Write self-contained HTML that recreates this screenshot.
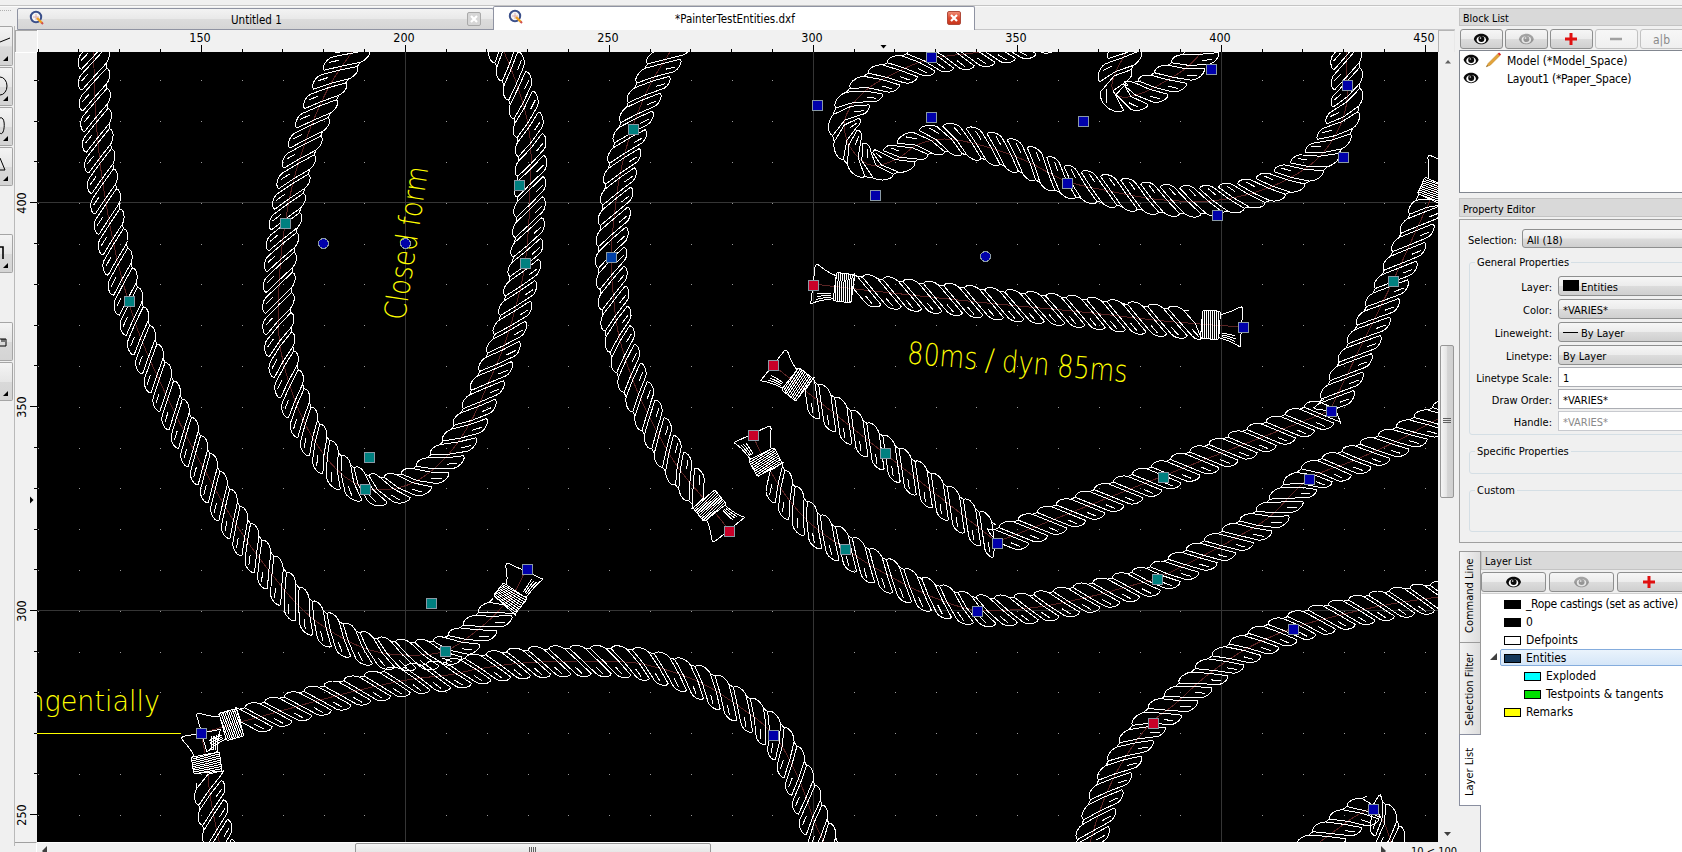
<!DOCTYPE html>
<html><head><meta charset="utf-8"><title>QCAD</title>
<style>
html,body{margin:0;padding:0}
body{width:1682px;height:852px;background:#f0f0f0;overflow:hidden;position:relative;font-family:"DejaVu Sans Condensed","DejaVu Sans","Liberation Sans",sans-serif;font-size:11px;color:#000;line-height:1}
.a{position:absolute;box-sizing:border-box;white-space:nowrap}
.cv{position:absolute;left:37px;top:52px}
.tb{background:linear-gradient(#f4f4f4,#e6e6e6 50%,#d9d9d9 52%,#d4d4d4);border:1px solid #a5a5a5;border-left:none;border-radius:0 2px 2px 0}
.hdr{background:#d9d9d9;border:1px solid #c3c3c3;font-size:10.7px;padding:5px 0 0 3px}
.btn{border:1px solid #8e8f8f;border-radius:3px;background:linear-gradient(#f6f6f6,#ececec 48%,#dcdcdc 52%,#cfcfcf);height:20px;top:29px;width:43px}
.btn.dis{border-color:#c2c2c2;background:linear-gradient(#f7f7f7,#efefef)}
.lst{background:#fff;border:1px solid #828790}
.l12{font-size:12px}
.lab{font-size:11px;text-align:right;width:90px;left:1462px}
.cmb{left:1558px;width:130px;height:20px;border:1px solid #8e8f8f;border-radius:3px;background:linear-gradient(#f6f6f6,#ececec 48%,#dcdcdc 52%,#cfcfcf);font-size:11px;padding:5px 0 0 4px}
.edt{left:1558px;width:130px;height:20px;border:1px solid #abadb3;background:#fff;font-size:11px;padding:5px 0 0 4px}
.grp{border:1px solid #d5dfe5;border-radius:3px;left:1469px;width:220px}
.gt{font-size:11px;background:#f0f0f0;padding:0 2px}
.sw{width:17px;height:9px;border:1px solid #000}
.vt{font-size:11px;transform-origin:0 0;transform:rotate(-90deg)}
</style></head><body>
<!-- top separator -->
<div class="a" style="left:0;top:5px;width:1682px;height:1px;background:#c4c4c4"></div>
<div class="a" style="left:0;top:6px;width:1682px;height:1px;background:#fafafa"></div>

<!-- left toolbar fragments -->
<div class="a" style="left:0;top:10px;width:11px;height:2px;border-top:1px dotted #b0b0b0"></div>
<div class="a tb" style="left:0;top:26px;width:13px;height:40px"></div>
<div class="a tb" style="left:0;top:67px;width:13px;height:39px"></div>
<div class="a tb" style="left:0;top:107px;width:13px;height:39px"></div>
<div class="a tb" style="left:0;top:147px;width:13px;height:39px"></div>
<div class="a tb" style="left:0;top:234px;width:13px;height:39px"></div>
<div class="a tb" style="left:0;top:322px;width:13px;height:39px"></div>
<div class="a tb" style="left:0;top:362px;width:13px;height:39px"></div>
<svg class="a" style="left:0;top:20px" width="14" height="400" viewBox="0 20 14 400">
<g fill="none" stroke="#000" stroke-width="1">
<path d="M0 42 L10 38"/><path d="M0 77 A7 9 0 0 1 0 95"/><path d="M0 118 C5 116 5 128 3 132 C2 134 1 134 0 133"/><path d="M0 158 L5 170 L0 170"/>
<path d="M0 247 h3 v12" stroke-width="1.6"/><path d="M0 339 h6 v7 h-6 M2 339v3 M4 339v3"/>
</g>
<g fill="#000"><path d="M8 61 v-5 l-5 5z"/><path d="M8 101 v-5 l-5 5z"/><path d="M8 141 v-5 l-5 5z"/><path d="M8 181 v-5 l-5 5z"/><path d="M8 268 v-5 l-5 5z"/><path d="M8 396 v-5 l-5 5z"/></g>
</svg>
<div class="a" style="left:14px;top:26px;width:1px;height:820px;background:#b9b9b9"></div>

<!-- tab bar -->
<div class="a" style="left:975px;top:29px;width:480px;height:1px;background:#c6c6c8"></div>
<div class="a" style="left:17px;top:8px;width:477px;height:22px;border:1px solid #8f93a2;border-radius:2px 2px 0 0;background:linear-gradient(#f3f3f3,#e9e9e9 48%,#dcdcdc 52%,#d5d5d5)"></div>
<div class="a" style="left:493px;top:6px;width:482px;height:24px;border:1px solid #8f93a2;border-bottom:none;border-radius:2px 2px 0 0;background:#fff"></div>
<div class="a" style="left:231px;top:15px;font-size:11.5px">Untitled 1</div>
<div class="a" style="left:675px;top:14px;font-size:11.5px">*PainterTestEntities.dxf</div>
<div class="a" style="left:467px;top:12px;width:14px;height:14px;border:1px solid #a9a9a9;border-radius:2px;background:#d6d6d6"></div>
<svg class="a" style="left:467px;top:12px" width="14" height="14"><path d="M4 4l6 6M10 4l-6 6" stroke="#fff" stroke-width="2.2"/></svg>
<div class="a" style="left:947px;top:11px;width:14px;height:14px;border:1px solid #b04a3a;border-radius:2px;background:linear-gradient(#f08a72,#dc4a30 50%,#c8351c)"></div>
<svg class="a" style="left:947px;top:11px" width="14" height="14"><path d="M4 4l6 6M10 4l-6 6" stroke="#fff" stroke-width="2.2"/></svg>
<svg class="a" style="left:29px;top:10px" width="16" height="16" viewBox="0 0 16 16"><circle cx="7" cy="7" r="5.2" fill="#f4f4f4" stroke="#3a4f8a" stroke-width="2"/><path d="M4 7h6M7 4v6" stroke="#d9a0a0" stroke-width="0.8"/><path d="M8 8l5 5" stroke="#f0a020" stroke-width="2.4"/><path d="M12.5 12.5l1.5 1.5" stroke="#d05050" stroke-width="2"/></svg>
<svg class="a" style="left:508px;top:9px" width="16" height="16" viewBox="0 0 16 16"><circle cx="7" cy="7" r="5.2" fill="#f4f4f4" stroke="#3a4f8a" stroke-width="2"/><path d="M4 7h6M7 4v6" stroke="#d9a0a0" stroke-width="0.8"/><path d="M8 8l5 5" stroke="#f0a020" stroke-width="2.4"/><path d="M12.5 12.5l1.5 1.5" stroke="#d05050" stroke-width="2"/></svg>

<!-- rulers -->
<div class="a" style="left:15px;top:30px;width:22px;height:22px;background:#f0f0f0;border-left:1px solid #a8a8a8;border-top:1px solid #a8a8a8"></div><div class="a" style="left:37px;top:30px;width:1401px;height:22px;background:#f1f1f1;border-left:1px solid #fff"></div><div class="a" style="left:1438px;top:30px;width:17px;height:22px;border:1px solid #b4b4b4;border-bottom:none;border-right-color:#e8e8e8;background:#f0f0f0"></div><div class="a" style="left:15px;top:52px;width:22px;height:790px;background:#f1f1f1;border-top:1px solid #fff"></div><svg class="a" style="left:0;top:0" width="1460" height="852" shape-rendering="crispEdges"><g fill="#000"><rect x="38" y="49" width="1" height="3"/><rect x="78" y="49" width="1" height="3"/><rect x="119" y="49" width="1" height="3"/><rect x="160" y="49" width="1" height="3"/><rect x="201" y="45" width="1" height="7"/><rect x="242" y="49" width="1" height="3"/><rect x="282" y="49" width="1" height="3"/><rect x="323" y="49" width="1" height="3"/><rect x="364" y="49" width="1" height="3"/><rect x="405" y="45" width="1" height="7"/><rect x="446" y="49" width="1" height="3"/><rect x="486" y="49" width="1" height="3"/><rect x="527" y="49" width="1" height="3"/><rect x="568" y="49" width="1" height="3"/><rect x="609" y="45" width="1" height="7"/><rect x="650" y="49" width="1" height="3"/><rect x="690" y="49" width="1" height="3"/><rect x="731" y="49" width="1" height="3"/><rect x="772" y="49" width="1" height="3"/><rect x="813" y="45" width="1" height="7"/><rect x="854" y="49" width="1" height="3"/><rect x="894" y="49" width="1" height="3"/><rect x="935" y="49" width="1" height="3"/><rect x="976" y="49" width="1" height="3"/><rect x="1017" y="45" width="1" height="7"/><rect x="1058" y="49" width="1" height="3"/><rect x="1098" y="49" width="1" height="3"/><rect x="1139" y="49" width="1" height="3"/><rect x="1180" y="49" width="1" height="3"/><rect x="1221" y="45" width="1" height="7"/><rect x="1262" y="49" width="1" height="3"/><rect x="1302" y="49" width="1" height="3"/><rect x="1343" y="49" width="1" height="3"/><rect x="1384" y="49" width="1" height="3"/><rect x="1425" y="45" width="1" height="7"/><rect x="34" y="80" width="3" height="1"/><rect x="34" y="121" width="3" height="1"/><rect x="34" y="161" width="3" height="1"/><rect x="30" y="202" width="7" height="1"/><rect x="34" y="243" width="3" height="1"/><rect x="34" y="284" width="3" height="1"/><rect x="34" y="325" width="3" height="1"/><rect x="34" y="365" width="3" height="1"/><rect x="30" y="406" width="7" height="1"/><rect x="34" y="447" width="3" height="1"/><rect x="34" y="488" width="3" height="1"/><rect x="34" y="529" width="3" height="1"/><rect x="34" y="569" width="3" height="1"/><rect x="30" y="610" width="7" height="1"/><rect x="34" y="651" width="3" height="1"/><rect x="34" y="692" width="3" height="1"/><rect x="34" y="733" width="3" height="1"/><rect x="34" y="773" width="3" height="1"/><rect x="30" y="814" width="7" height="1"/><path d="M880.5 45h6l-3 3.500z" shape-rendering="auto"/><path d="M30 496.500v7l3.500-3.500z" shape-rendering="auto"/></g></svg><div class="a" style="left:180px;top:32px;width:40px;text-align:center;font-size:12.5px">150</div><div class="a" style="left:384px;top:32px;width:40px;text-align:center;font-size:12.5px">200</div><div class="a" style="left:588px;top:32px;width:40px;text-align:center;font-size:12.5px">250</div><div class="a" style="left:792px;top:32px;width:40px;text-align:center;font-size:12.5px">300</div><div class="a" style="left:996px;top:32px;width:40px;text-align:center;font-size:12.5px">350</div><div class="a" style="left:1200px;top:32px;width:40px;text-align:center;font-size:12.5px">400</div><div class="a" style="left:1404px;top:32px;width:40px;text-align:center;font-size:12.5px">450</div><div class="a" style="left:16px;top:223px;width:40px;text-align:center;font-size:12.5px;transform-origin:0 0;transform:rotate(-90deg)">400</div><div class="a" style="left:16px;top:427px;width:40px;text-align:center;font-size:12.5px;transform-origin:0 0;transform:rotate(-90deg)">350</div><div class="a" style="left:16px;top:631px;width:40px;text-align:center;font-size:12.5px;transform-origin:0 0;transform:rotate(-90deg)">300</div><div class="a" style="left:16px;top:835px;width:40px;text-align:center;font-size:12.5px;transform-origin:0 0;transform:rotate(-90deg)">250</div>

<svg class="cv" width="1401" height="790" viewBox="37 52 1401 790" shape-rendering="crispEdges"><rect x="0" y="0" width="1700" height="900" fill="#000"/><path d="M38 80h1M38 121h1M38 162h1M38 203h1M38 244h1M38 284h1M38 325h1M38 366h1M38 407h1M38 448h1M38 488h1M38 529h1M38 570h1M38 611h1M38 652h1M38 692h1M38 733h1M38 774h1M38 815h1M79 80h1M79 121h1M79 162h1M79 203h1M79 244h1M79 284h1M79 325h1M79 366h1M79 407h1M79 448h1M79 488h1M79 529h1M79 570h1M79 611h1M79 652h1M79 692h1M79 733h1M79 774h1M79 815h1M120 80h1M120 121h1M120 162h1M120 203h1M120 244h1M120 284h1M120 325h1M120 366h1M120 407h1M120 448h1M120 488h1M120 529h1M120 570h1M120 611h1M120 652h1M120 692h1M120 733h1M120 774h1M120 815h1M160 80h1M160 121h1M160 162h1M160 203h1M160 244h1M160 284h1M160 325h1M160 366h1M160 407h1M160 448h1M160 488h1M160 529h1M160 570h1M160 611h1M160 652h1M160 692h1M160 733h1M160 774h1M160 815h1M201 80h1M201 121h1M201 162h1M201 203h1M201 244h1M201 284h1M201 325h1M201 366h1M201 407h1M201 448h1M201 488h1M201 529h1M201 570h1M201 611h1M201 652h1M201 692h1M201 733h1M201 774h1M201 815h1M242 80h1M242 121h1M242 162h1M242 203h1M242 244h1M242 284h1M242 325h1M242 366h1M242 407h1M242 448h1M242 488h1M242 529h1M242 570h1M242 611h1M242 652h1M242 692h1M242 733h1M242 774h1M242 815h1M283 80h1M283 121h1M283 162h1M283 203h1M283 244h1M283 284h1M283 325h1M283 366h1M283 407h1M283 448h1M283 488h1M283 529h1M283 570h1M283 611h1M283 652h1M283 692h1M283 733h1M283 774h1M283 815h1M324 80h1M324 121h1M324 162h1M324 203h1M324 244h1M324 284h1M324 325h1M324 366h1M324 407h1M324 448h1M324 488h1M324 529h1M324 570h1M324 611h1M324 652h1M324 692h1M324 733h1M324 774h1M324 815h1M364 80h1M364 121h1M364 162h1M364 203h1M364 244h1M364 284h1M364 325h1M364 366h1M364 407h1M364 448h1M364 488h1M364 529h1M364 570h1M364 611h1M364 652h1M364 692h1M364 733h1M364 774h1M364 815h1M405 80h1M405 121h1M405 162h1M405 203h1M405 244h1M405 284h1M405 325h1M405 366h1M405 407h1M405 448h1M405 488h1M405 529h1M405 570h1M405 611h1M405 652h1M405 692h1M405 733h1M405 774h1M405 815h1M446 80h1M446 121h1M446 162h1M446 203h1M446 244h1M446 284h1M446 325h1M446 366h1M446 407h1M446 448h1M446 488h1M446 529h1M446 570h1M446 611h1M446 652h1M446 692h1M446 733h1M446 774h1M446 815h1M487 80h1M487 121h1M487 162h1M487 203h1M487 244h1M487 284h1M487 325h1M487 366h1M487 407h1M487 448h1M487 488h1M487 529h1M487 570h1M487 611h1M487 652h1M487 692h1M487 733h1M487 774h1M487 815h1M528 80h1M528 121h1M528 162h1M528 203h1M528 244h1M528 284h1M528 325h1M528 366h1M528 407h1M528 448h1M528 488h1M528 529h1M528 570h1M528 611h1M528 652h1M528 692h1M528 733h1M528 774h1M528 815h1M568 80h1M568 121h1M568 162h1M568 203h1M568 244h1M568 284h1M568 325h1M568 366h1M568 407h1M568 448h1M568 488h1M568 529h1M568 570h1M568 611h1M568 652h1M568 692h1M568 733h1M568 774h1M568 815h1M609 80h1M609 121h1M609 162h1M609 203h1M609 244h1M609 284h1M609 325h1M609 366h1M609 407h1M609 448h1M609 488h1M609 529h1M609 570h1M609 611h1M609 652h1M609 692h1M609 733h1M609 774h1M609 815h1M650 80h1M650 121h1M650 162h1M650 203h1M650 244h1M650 284h1M650 325h1M650 366h1M650 407h1M650 448h1M650 488h1M650 529h1M650 570h1M650 611h1M650 652h1M650 692h1M650 733h1M650 774h1M650 815h1M691 80h1M691 121h1M691 162h1M691 203h1M691 244h1M691 284h1M691 325h1M691 366h1M691 407h1M691 448h1M691 488h1M691 529h1M691 570h1M691 611h1M691 652h1M691 692h1M691 733h1M691 774h1M691 815h1M732 80h1M732 121h1M732 162h1M732 203h1M732 244h1M732 284h1M732 325h1M732 366h1M732 407h1M732 448h1M732 488h1M732 529h1M732 570h1M732 611h1M732 652h1M732 692h1M732 733h1M732 774h1M732 815h1M772 80h1M772 121h1M772 162h1M772 203h1M772 244h1M772 284h1M772 325h1M772 366h1M772 407h1M772 448h1M772 488h1M772 529h1M772 570h1M772 611h1M772 652h1M772 692h1M772 733h1M772 774h1M772 815h1M813 80h1M813 121h1M813 162h1M813 203h1M813 244h1M813 284h1M813 325h1M813 366h1M813 407h1M813 448h1M813 488h1M813 529h1M813 570h1M813 611h1M813 652h1M813 692h1M813 733h1M813 774h1M813 815h1M854 80h1M854 121h1M854 162h1M854 203h1M854 244h1M854 284h1M854 325h1M854 366h1M854 407h1M854 448h1M854 488h1M854 529h1M854 570h1M854 611h1M854 652h1M854 692h1M854 733h1M854 774h1M854 815h1M895 80h1M895 121h1M895 162h1M895 203h1M895 244h1M895 284h1M895 325h1M895 366h1M895 407h1M895 448h1M895 488h1M895 529h1M895 570h1M895 611h1M895 652h1M895 692h1M895 733h1M895 774h1M895 815h1M936 80h1M936 121h1M936 162h1M936 203h1M936 244h1M936 284h1M936 325h1M936 366h1M936 407h1M936 448h1M936 488h1M936 529h1M936 570h1M936 611h1M936 652h1M936 692h1M936 733h1M936 774h1M936 815h1M976 80h1M976 121h1M976 162h1M976 203h1M976 244h1M976 284h1M976 325h1M976 366h1M976 407h1M976 448h1M976 488h1M976 529h1M976 570h1M976 611h1M976 652h1M976 692h1M976 733h1M976 774h1M976 815h1M1017 80h1M1017 121h1M1017 162h1M1017 203h1M1017 244h1M1017 284h1M1017 325h1M1017 366h1M1017 407h1M1017 448h1M1017 488h1M1017 529h1M1017 570h1M1017 611h1M1017 652h1M1017 692h1M1017 733h1M1017 774h1M1017 815h1M1058 80h1M1058 121h1M1058 162h1M1058 203h1M1058 244h1M1058 284h1M1058 325h1M1058 366h1M1058 407h1M1058 448h1M1058 488h1M1058 529h1M1058 570h1M1058 611h1M1058 652h1M1058 692h1M1058 733h1M1058 774h1M1058 815h1M1099 80h1M1099 121h1M1099 162h1M1099 203h1M1099 244h1M1099 284h1M1099 325h1M1099 366h1M1099 407h1M1099 448h1M1099 488h1M1099 529h1M1099 570h1M1099 611h1M1099 652h1M1099 692h1M1099 733h1M1099 774h1M1099 815h1M1140 80h1M1140 121h1M1140 162h1M1140 203h1M1140 244h1M1140 284h1M1140 325h1M1140 366h1M1140 407h1M1140 448h1M1140 488h1M1140 529h1M1140 570h1M1140 611h1M1140 652h1M1140 692h1M1140 733h1M1140 774h1M1140 815h1M1180 80h1M1180 121h1M1180 162h1M1180 203h1M1180 244h1M1180 284h1M1180 325h1M1180 366h1M1180 407h1M1180 448h1M1180 488h1M1180 529h1M1180 570h1M1180 611h1M1180 652h1M1180 692h1M1180 733h1M1180 774h1M1180 815h1M1221 80h1M1221 121h1M1221 162h1M1221 203h1M1221 244h1M1221 284h1M1221 325h1M1221 366h1M1221 407h1M1221 448h1M1221 488h1M1221 529h1M1221 570h1M1221 611h1M1221 652h1M1221 692h1M1221 733h1M1221 774h1M1221 815h1M1262 80h1M1262 121h1M1262 162h1M1262 203h1M1262 244h1M1262 284h1M1262 325h1M1262 366h1M1262 407h1M1262 448h1M1262 488h1M1262 529h1M1262 570h1M1262 611h1M1262 652h1M1262 692h1M1262 733h1M1262 774h1M1262 815h1M1303 80h1M1303 121h1M1303 162h1M1303 203h1M1303 244h1M1303 284h1M1303 325h1M1303 366h1M1303 407h1M1303 448h1M1303 488h1M1303 529h1M1303 570h1M1303 611h1M1303 652h1M1303 692h1M1303 733h1M1303 774h1M1303 815h1M1344 80h1M1344 121h1M1344 162h1M1344 203h1M1344 244h1M1344 284h1M1344 325h1M1344 366h1M1344 407h1M1344 448h1M1344 488h1M1344 529h1M1344 570h1M1344 611h1M1344 652h1M1344 692h1M1344 733h1M1344 774h1M1344 815h1M1384 80h1M1384 121h1M1384 162h1M1384 203h1M1384 244h1M1384 284h1M1384 325h1M1384 366h1M1384 407h1M1384 448h1M1384 488h1M1384 529h1M1384 570h1M1384 611h1M1384 652h1M1384 692h1M1384 733h1M1384 774h1M1384 815h1M1425 80h1M1425 121h1M1425 162h1M1425 203h1M1425 244h1M1425 284h1M1425 325h1M1425 366h1M1425 407h1M1425 448h1M1425 488h1M1425 529h1M1425 570h1M1425 611h1M1425 652h1M1425 692h1M1425 733h1M1425 774h1M1425 815h1" stroke="#9a9a9a" stroke-width="1" transform="translate(0,0.5)"/><rect x="405" y="52" width="1" height="790" fill="#353535"/><rect x="813" y="52" width="1" height="790" fill="#353535"/><rect x="1221" y="52" width="1" height="790" fill="#353535"/><rect x="37" y="202" width="1401" height="1" fill="#353535"/><rect x="37" y="610" width="1401" height="1" fill="#353535"/><path d="M93.0 20.0L93.1 26.0L93.3 32.0L93.4 38.0L93.5 44.0L93.7 50.0L93.8 56.0L93.9 62.0L94.0 68.0L94.1 74.0L94.2 80.0L94.4 86.0L94.6 92.0L94.8 98.0L95.1 104.0L95.5 110.0L95.9 115.9L96.3 121.9L96.7 127.9L97.2 133.9L97.7 139.9L98.3 145.8L98.9 151.8L99.5 157.8L100.2 163.7L100.9 169.7L101.7 175.6L102.6 181.6L103.5 187.5L104.4 193.4L105.4 199.4L106.4 205.3L107.4 211.2L108.4 217.1L109.5 223.0L110.6 228.9L111.8 234.8L113.0 240.7L114.2 246.5L115.5 252.4L116.8 258.3L118.2 264.1L119.7 269.9L121.2 275.7L122.8 281.5L124.4 287.3L126.0 293.0L127.7 298.8L129.5 304.5L131.2 310.3L133.0 316.0L134.8 321.7L136.8 327.4L138.9 333.0L141.0 338.6L143.3 344.2L145.6 349.7L148.0 355.2L150.4 360.7L152.8 366.2L155.3 371.7L157.8 377.1L160.3 382.6L162.9 388.0L165.4 393.4L168.0 398.8L170.6 404.3L173.2 409.7L175.9 415.0L178.5 420.4L181.2 425.8L184.0 431.1L186.7 436.5L189.5 441.8L192.3 447.1L195.1 452.4L197.9 457.7L200.7 463.0L203.6 468.3L206.5 473.5L209.4 478.8L212.3 484.0L215.2 489.3L218.1 494.5L221.1 499.7L224.1 504.9L227.2 510.1L230.3 515.2L233.4 520.3L236.6 525.4L239.9 530.4L243.2 535.4L246.6 540.4L250.0 545.3L253.5 550.2L257.1 555.0L260.7 559.8L264.3 564.6L268.0 569.3L271.7 574.0L275.4 578.7L279.2 583.4L283.0 588.1L286.8 592.7L290.7 597.2L294.7 601.7L298.9 606.0L303.2 610.2L307.6 614.2L312.2 618.1L316.9 621.8L321.8 625.3L326.8 628.7L331.8 631.9L337.0 635.0L342.2 637.9L347.5 640.8L352.9 643.4L358.4 645.8L363.9 648.0L369.6 649.9L375.4 651.5L381.3 652.7L387.2 653.7L393.2 654.4L399.2 654.8L405.2 655.0L411.2 655.1L417.2 655.1L423.2 654.9L429.1 654.4L435.1 653.6L440.9 652.3L446.6 650.4L452.1 647.9L457.3 644.9L462.3 641.7L467.2 638.1L471.9 634.5L476.6 630.7L481.3 627.0L485.9 623.1L490.3 619.1L494.6 614.9L498.8 610.6L502.9 606.2L506.9 601.7L510.7 597.1L514.2 592.2L517.5 587.2L520.2 581.9L522.6 576.4L525.0 571.0M375.0 20.0L371.5 24.9L368.0 29.7L364.4 34.6L360.9 39.4L357.4 44.3L353.9 49.2L350.5 54.1L347.1 59.0L343.6 63.9L340.1 68.8L336.8 73.8L333.6 78.9L330.5 84.0L327.7 89.3L324.9 94.7L322.3 100.1L319.8 105.5L317.4 111.0L315.0 116.5L312.7 122.1L310.5 127.6L308.4 133.2L306.3 138.9L304.4 144.5L302.5 150.2L300.6 155.9L298.9 161.7L297.2 167.4L295.5 173.2L294.0 179.0L292.5 184.8L291.2 190.7L289.9 196.5L288.7 202.4L287.6 208.3L286.6 214.2L285.6 220.2L284.7 226.1L283.8 232.0L283.0 238.0L282.3 243.9L281.6 249.9L281.0 255.8L280.5 261.8L280.1 267.8L279.7 273.8L279.4 279.8L279.1 285.8L278.8 291.8L278.6 297.8L278.4 303.8L278.3 309.8L278.3 315.8L278.4 321.8L278.5 327.8L278.8 333.8L279.3 339.7L280.1 345.7L281.0 351.6L282.2 357.5L283.6 363.3L285.0 369.2L286.6 374.9L288.3 380.7L290.1 386.4L291.9 392.1L293.9 397.8L296.0 403.4L298.3 409.0L300.7 414.5L303.2 419.9L305.8 425.3L308.6 430.6L311.6 435.8L314.7 441.0L317.9 446.0L321.4 450.9L324.9 455.8L328.6 460.5L332.5 465.1L336.6 469.4L341.0 473.5L345.7 477.3L350.7 480.6L355.8 483.7L361.3 486.2L366.9 488.2L372.8 489.5L378.8 490.0L384.8 489.8L390.7 489.1L396.6 488.1L402.5 486.7L408.1 484.8L413.7 482.4L419.0 479.6L424.0 476.4L428.9 472.9L433.5 469.1L438.0 465.1L442.3 460.9L446.5 456.6L450.4 452.1L454.1 447.4L457.7 442.5L461.1 437.6L464.3 432.5L467.4 427.4L470.4 422.2L473.3 416.9L475.9 411.5L478.4 406.1L480.8 400.6L483.1 395.0L485.5 389.5L487.9 384.0L490.3 378.5L492.8 373.1L495.2 367.6L497.6 362.1L499.9 356.6L502.1 351.0L504.2 345.3L506.2 339.7L508.0 334.0L509.8 328.2L511.5 322.5L513.1 316.7L514.7 310.9L516.2 305.1L517.7 299.3L519.1 293.5L520.5 287.6L521.8 281.8L523.0 275.9L524.0 270.0L525.0 264.1L525.8 258.1L526.5 252.2L527.1 246.2L527.6 240.2L528.0 234.2L528.4 228.2L528.8 222.2L529.2 216.3L529.4 210.3L529.6 204.3L529.7 198.3L529.8 192.3L530.0 186.3L530.2 180.3L530.5 174.3L530.8 168.3L531.1 162.3L531.1 156.3L530.9 150.3L530.5 144.3L530.0 138.3L529.3 132.4L528.4 126.4L527.3 120.5L526.0 114.7L524.6 108.9L522.9 103.1L521.1 97.4L519.3 91.7L517.3 86.0L515.4 80.3L513.3 74.7L511.1 69.1L508.9 63.5L506.6 58.0L504.2 52.5L501.7 47.0L499.1 41.6L496.4 36.3L493.6 30.9L490.9 25.6L488.1 20.3L488.0 20.0M729.0 530.0L725.2 525.3L721.5 520.7L717.7 516.0L714.0 511.3L710.2 506.6L706.4 502.0L702.6 497.3L698.8 492.7L694.8 488.2L690.9 483.6L687.0 479.1L683.3 474.4L679.6 469.6L676.1 464.7L672.9 459.7L669.7 454.6L666.7 449.5L663.7 444.2L660.8 439.0L658.0 433.7L655.2 428.4L652.5 423.0L649.7 417.7L647.1 412.3L644.4 406.9L641.9 401.5L639.4 396.0L637.0 390.5L634.8 385.0L632.6 379.4L630.5 373.7L628.5 368.1L626.6 362.4L624.7 356.7L623.0 351.0L621.3 345.2L619.8 339.4L618.4 333.5L617.3 327.7L616.3 321.7L615.5 315.8L614.8 309.8L614.2 303.9L613.6 297.9L613.0 291.9L612.4 285.9L611.9 280.0L611.5 274.0L611.2 268.0L611.0 262.0L611.0 256.0L611.2 250.0L611.5 244.0L612.0 238.0L612.6 232.0L613.2 226.1L613.9 220.1L614.5 214.2L615.2 208.2L615.9 202.2L616.6 196.3L617.4 190.3L618.3 184.4L619.3 178.5L620.5 172.6L621.7 166.7L623.0 160.9L624.5 155.0L626.0 149.2L627.6 143.4L629.2 137.7L631.0 132.0L632.9 126.3L634.9 120.6L637.0 115.0L639.1 109.4L641.4 103.8L643.8 98.3L646.2 92.8L648.8 87.4L651.5 82.1L654.4 76.8L657.5 71.7L660.7 66.6L663.9 61.5L667.2 56.5L670.4 51.4L673.5 46.3L676.7 41.2L679.9 36.1L683.1 31.0L686.3 26.0L689.4 20.9L690.0 20.0M1344.0 20.0L1344.4 26.0L1344.8 32.0L1345.2 38.0L1345.6 43.9L1345.9 49.9L1346.2 55.9L1346.5 61.9L1346.8 67.9L1346.9 73.9L1347.0 79.9L1347.1 85.9L1347.2 91.9L1347.1 97.9L1346.5 103.9L1345.4 109.8L1343.9 115.6L1341.9 121.3L1339.6 126.8L1337.0 132.2L1334.0 137.4L1330.9 142.5L1327.4 147.4L1323.7 152.1L1319.7 156.6L1315.3 160.7L1310.7 164.6L1305.9 168.1L1300.9 171.5L1295.8 174.6L1290.6 177.6L1285.3 180.4L1279.9 183.0L1274.4 185.4L1268.8 187.7L1263.2 189.7L1257.5 191.6L1251.8 193.3L1246.0 194.9L1240.1 196.3L1234.3 197.5L1228.4 198.6L1222.4 199.5L1216.5 200.3L1210.5 200.9L1204.5 201.2L1198.5 201.4L1192.5 201.4L1186.5 201.3L1180.5 201.1L1174.5 200.8L1168.6 200.4L1162.6 199.9L1156.6 199.3L1150.6 198.5L1144.7 197.7L1138.8 196.7L1132.9 195.6L1127.0 194.5L1121.1 193.4L1115.2 192.2L1109.3 191.1L1103.4 189.9L1097.5 188.8L1091.6 187.7L1085.8 186.5L1079.9 185.1L1074.1 183.6L1068.4 181.8L1062.8 179.7L1057.3 177.3L1051.9 174.6L1046.7 171.7L1041.4 168.8L1036.2 165.9L1030.8 163.2L1025.4 160.6L1019.9 158.3L1014.3 156.1L1008.7 154.0L1003.0 152.0L997.3 150.1L991.6 148.2L985.8 146.6L980.1 145.0L974.2 143.6L968.4 142.2L962.5 140.9L956.6 139.9L950.7 139.2L944.7 139.0L938.7 139.3L932.7 140.2L926.9 141.5L921.2 143.3L915.6 145.7L910.6 149.0L906.0 152.8L901.3 156.5L896.1 159.4L890.6 161.7L884.9 163.7L879.1 165.2L873.1 165.5L867.3 164.0L862.2 160.9L857.8 156.9L853.8 152.4L850.4 147.4L847.6 142.1L845.7 136.4L844.5 130.6L844.3 124.6L845.1 118.6L847.2 113.0L850.2 107.8L853.7 103.0L857.6 98.4L861.8 94.1L866.2 90.1L871.0 86.4L876.0 83.1L881.2 80.1L886.5 77.3L891.8 74.6L897.2 71.9L902.6 69.3L908.0 66.8L913.6 64.5L919.2 62.3L924.9 60.5L930.7 58.8L936.5 57.5L942.4 56.6L948.4 55.8L954.3 55.1L960.3 54.5L966.3 53.8L972.2 53.1L978.2 52.3L984.1 51.3L990.0 50.3L995.9 49.2L1001.8 48.1L1007.7 46.9L1013.6 45.7L1019.4 44.5L1025.3 43.1L1031.1 41.7L1036.9 40.2L1042.7 38.5L1048.4 36.8L1054.1 35.0L1059.9 33.1L1065.6 31.3L1070.0 30.0M1140.0 20.0L1137.6 25.5L1135.2 31.0L1132.9 36.5L1130.5 42.0L1128.1 47.5L1125.5 53.0L1122.8 58.3L1119.9 63.6L1117.2 68.9L1114.8 74.4L1112.8 80.1L1111.7 86.0L1113.6 91.6L1117.7 95.9L1123.4 97.5L1129.4 96.8L1135.2 95.2L1140.9 93.4L1146.5 91.3L1151.9 88.7L1157.2 85.9L1162.4 82.9L1167.6 79.9L1172.8 76.9L1177.9 73.8L1182.9 70.4L1187.6 66.7L1192.0 62.6L1196.2 58.3L1200.2 53.9L1204.3 49.5L1208.2 45.0L1212.1 40.4L1216.0 35.8L1219.8 31.2L1223.7 26.6L1225.0 25.0M813.0 284.0L819.0 284.7L824.9 285.4L830.9 286.1L836.8 286.8L842.8 287.5L848.7 288.3L854.7 288.9L860.7 289.6L866.6 290.3L872.6 290.9L878.6 291.6L884.5 292.2L890.5 292.9L896.5 293.5L902.4 294.1L908.4 294.7L914.4 295.4L920.3 296.0L926.3 296.6L932.3 297.2L938.2 297.9L944.2 298.5L950.2 299.1L956.1 299.8L962.1 300.4L968.1 301.0L974.0 301.7L980.0 302.3L986.0 302.9L991.9 303.5L997.9 304.1L1003.9 304.7L1009.9 305.2L1015.8 305.8L1021.8 306.4L1027.8 306.9L1033.8 307.4L1039.7 308.0L1045.7 308.5L1051.7 309.1L1057.7 309.6L1063.6 310.2L1069.6 310.8L1075.6 311.4L1081.5 312.0L1087.5 312.6L1093.5 313.2L1099.4 313.9L1105.4 314.5L1111.4 315.2L1117.3 315.9L1123.3 316.6L1129.2 317.2L1135.2 317.9L1141.2 318.6L1147.1 319.2L1153.1 319.9L1159.1 320.5L1165.0 321.1L1171.0 321.7L1177.0 322.2L1183.0 322.7L1189.0 323.1L1194.9 323.6L1200.9 324.1L1206.9 324.5L1212.9 325.0L1218.9 325.4L1224.9 325.8L1230.8 326.2L1236.8 326.7L1241.5 327.0M773.0 365.0L777.7 368.7L782.4 372.5L787.1 376.2L791.8 379.9L796.5 383.6L801.2 387.4L805.9 391.1L810.6 394.8L815.3 398.5L820.0 402.3L824.7 406.0L829.4 409.7L834.1 413.5L838.8 417.2L843.5 420.9L848.2 424.6L852.9 428.4L857.6 432.1L862.3 435.8L867.0 439.6L871.7 443.3L876.4 447.0L881.1 450.7L885.8 454.5L890.6 458.2L895.3 461.9L900.0 465.6L904.7 469.3L909.4 473.0L914.1 476.7L918.8 480.4L923.5 484.2L928.3 487.9L933.0 491.6L937.7 495.3L942.4 499.0L947.1 502.7L951.8 506.4L956.5 510.1L961.3 513.9L966.0 517.6L970.7 521.3L975.4 525.0L980.1 528.7L984.8 532.4L989.5 536.1L994.3 539.8L999.0 543.6L1001.7 545.7M993.3 543.5L998.9 541.3L1004.4 539.0L1010.0 536.8L1015.6 534.6L1021.2 532.4L1026.7 530.2L1032.3 528.0L1037.9 525.7L1043.5 523.5L1049.0 521.3L1054.6 519.1L1060.2 516.9L1065.8 514.7L1071.3 512.4L1076.9 510.2L1082.5 508.0L1088.1 505.8L1093.6 503.6L1099.2 501.4L1104.8 499.1L1110.4 496.9L1115.9 494.7L1121.5 492.5L1127.1 490.2L1132.7 488.0L1138.2 485.8L1143.8 483.6L1149.4 481.4L1155.0 479.2L1160.5 477.0L1166.1 474.8L1171.7 472.6L1177.3 470.4L1182.9 468.2L1188.5 466.0L1194.0 463.8L1199.6 461.6L1205.2 459.4L1210.8 457.2L1216.4 455.1L1222.0 452.9L1227.6 450.7L1233.2 448.5L1238.8 446.3L1244.3 444.1L1249.9 442.0L1255.5 439.8L1261.1 437.6L1266.7 435.4L1272.3 433.3L1277.9 431.1L1283.5 428.9L1289.1 426.7L1294.7 424.6L1300.3 422.4L1305.9 420.2L1311.5 418.1L1317.0 415.9L1322.6 413.7L1328.2 411.5L1333.8 409.4L1335.2 408.8M1327.9 414.6L1330.5 409.2L1333.1 403.8L1335.7 398.4L1338.3 393.0L1340.9 387.6L1343.5 382.2L1346.1 376.8L1348.7 371.4L1351.3 366.0L1353.9 360.6L1356.5 355.2L1359.2 349.8L1361.8 344.4L1364.4 339.0L1367.1 333.6L1369.8 328.2L1372.4 322.9L1375.1 317.5L1377.8 312.1L1380.5 306.7L1383.1 301.4L1385.8 296.0L1388.4 290.6L1391.0 285.2L1393.6 279.8L1396.1 274.3L1398.7 268.9L1401.2 263.4L1403.7 258.0L1406.2 252.5L1408.6 247.1L1411.1 241.6L1413.6 236.1L1416.0 230.7L1418.5 225.2L1421.0 219.7L1423.5 214.3L1426.1 208.9L1428.6 203.4L1431.1 198.0L1433.6 192.5L1436.1 187.1L1438.6 181.6L1441.1 176.1L1443.6 170.7L1446.0 165.2L1447.0 163.0M752.0 434.0L754.6 439.4L757.1 444.9L759.6 450.3L762.3 455.7L765.1 461.0L767.9 466.3L770.8 471.6L773.7 476.8L776.8 482.0L779.9 487.0L783.3 492.0L786.8 496.9L790.5 501.6L794.2 506.3L798.2 510.9L802.2 515.3L806.4 519.6L810.8 523.7L815.3 527.6L820.0 531.3L824.8 534.9L829.7 538.4L834.7 541.7L839.7 545.1L844.6 548.4L849.6 551.8L854.6 555.1L859.7 558.3L864.7 561.6L869.8 564.7L875.0 567.8L880.2 570.8L885.4 573.8L890.6 576.7L895.9 579.6L901.2 582.4L906.5 585.2L911.9 587.9L917.3 590.5L922.7 592.9L928.3 595.3L933.8 597.5L939.4 599.7L945.0 601.8L950.7 603.8L956.4 605.7L962.2 607.3L968.0 608.6L973.9 609.7L979.9 610.4L985.9 610.8L991.9 610.9L997.9 610.8L1003.9 610.5L1009.8 610.0L1015.8 609.5L1021.8 608.9L1027.8 608.2L1033.7 607.6L1039.7 606.8L1045.6 605.9L1051.5 604.9L1057.4 603.7L1063.3 602.6L1069.2 601.4L1075.0 600.1L1080.9 598.8L1086.7 597.5L1092.6 596.0L1098.4 594.6L1104.2 593.1L1110.0 591.5L1115.8 589.9L1121.6 588.3L1127.3 586.7L1133.1 585.1L1138.9 583.6L1144.7 582.0L1150.5 580.3L1156.1 578.3L1161.7 576.1L1167.2 573.7L1172.6 571.2L1178.0 568.5L1183.4 565.8L1188.7 563.1L1194.1 560.4L1199.4 557.7L1204.8 554.9L1210.1 552.1L1215.3 549.3L1220.6 546.4L1225.9 543.5L1231.1 540.5L1236.3 537.6L1241.5 534.6L1246.8 531.7L1252.0 528.7L1257.1 525.6L1262.1 522.3L1267.0 518.8L1271.6 515.0L1276.0 510.9L1280.2 506.6L1284.3 502.2L1288.4 497.8L1292.5 493.4L1296.7 489.2L1301.1 485.1L1305.7 481.3L1310.7 477.9L1315.9 475.0L1321.4 472.5L1326.9 470.2L1332.6 468.2L1338.2 466.2L1343.9 464.3L1349.6 462.2L1355.1 460.0L1360.6 457.6L1366.1 455.2L1371.6 452.8L1377.1 450.3L1382.6 447.9L1388.0 445.3L1393.4 442.7L1398.8 440.1L1404.1 437.3L1409.4 434.5L1414.7 431.6L1419.9 428.7L1425.2 425.8L1430.4 422.9L1435.7 420.1L1441.1 417.5L1446.6 414.9L1452.0 412.4L1457.5 410.0L1463.0 407.5L1468.5 405.1L1474.0 402.7L1479.4 400.3L1480.0 400.0M201.6 733.0L207.4 731.4L213.1 729.7L218.9 728.1L224.7 726.5L230.5 724.9L236.3 723.2L242.0 721.6L247.8 720.1L253.6 718.5L259.4 716.9L265.2 715.3L271.0 713.7L276.8 712.1L282.5 710.5L288.3 708.9L294.1 707.3L299.9 705.6L305.6 704.0L311.4 702.4L317.2 700.8L323.0 699.3L328.8 697.7L334.6 696.2L340.4 694.7L346.2 693.2L352.0 691.8L357.9 690.4L363.7 689.0L369.6 687.6L375.4 686.3L381.3 685.1L387.2 683.8L393.0 682.6L398.9 681.5L404.8 680.4L410.7 679.4L416.7 678.5L422.6 677.7L428.6 677.1L434.6 676.5L440.5 675.9L446.5 675.2L452.4 674.3L458.3 673.1L464.2 671.8L470.0 670.5L475.9 669.3L481.8 668.3L487.7 667.4L493.7 666.4L499.6 665.6L505.6 664.8L511.5 664.1L517.5 663.5L523.5 663.0L529.4 662.6L535.4 662.3L541.4 662.0L547.4 661.7L553.4 661.5L559.4 661.3L565.4 661.2L571.4 661.1L577.4 661.0L583.4 661.0L589.4 661.0L595.4 661.0L601.4 661.0L607.4 661.1L613.4 661.2L619.4 661.6L625.4 662.0L631.4 662.5L637.3 663.2L643.2 664.2L649.1 665.5L654.9 666.9L660.7 668.4L666.5 670.0L672.3 671.8L678.0 673.6L683.6 675.6L689.2 677.7L694.8 680.0L700.2 682.5L705.6 685.2L710.9 688.1L716.0 691.1L721.1 694.3L726.2 697.6L731.1 700.9L736.1 704.3L741.0 707.8L745.9 711.2L750.8 714.7L755.7 718.2L760.4 721.9L764.9 725.8L769.3 730.0L773.3 734.4L777.1 739.1L780.5 744.0L783.7 749.1L786.7 754.3L789.5 759.6L792.2 765.0L794.8 770.3L797.4 775.8L799.8 781.3L802.0 786.8L804.1 792.4L806.2 798.1L808.2 803.7L810.1 809.4L812.1 815.1L814.1 820.7L816.3 826.3L818.8 831.8L821.7 837.0L824.2 842.5L826.1 848.2L827.7 853.9L829.3 859.7L830.8 865.5L832.0 870.0M226.0 870.0L224.6 864.2L223.1 858.4L221.7 852.5L220.3 846.7L219.0 840.8L217.7 835.0L216.4 829.1L215.2 823.2L214.0 817.4L212.9 811.5L211.8 805.6L210.7 799.7L209.8 793.7L209.1 787.8L208.6 781.8L208.1 775.8L207.6 769.8L206.8 763.9L205.9 758.0L204.8 752.1L203.6 746.2L202.4 740.3L201.3 734.4L201.0 733.0M1082.0 870.0L1083.6 864.2L1085.2 858.4L1086.9 852.7L1088.5 846.9L1090.3 841.2L1092.0 835.4L1093.7 829.7L1095.5 823.9L1097.3 818.2L1099.2 812.5L1101.2 806.9L1103.3 801.2L1105.6 795.7L1107.9 790.2L1110.4 784.7L1113.0 779.3L1115.7 773.9L1118.5 768.7L1121.5 763.5L1124.7 758.3L1127.9 753.3L1131.2 748.3L1134.6 743.4L1138.2 738.5L1141.8 733.8L1145.6 729.1L1149.6 724.6L1153.7 720.3L1158.3 716.4L1163.1 712.8L1168.0 709.3L1172.8 705.8L1177.4 701.9L1181.9 697.9L1186.2 693.8L1190.6 689.6L1195.0 685.6L1199.5 681.6L1204.1 677.7L1208.8 674.0L1213.6 670.4L1218.4 666.8L1223.3 663.4L1228.3 660.0L1233.3 656.7L1238.3 653.5L1243.5 650.4L1248.7 647.5L1254.1 644.7L1259.4 642.1L1264.9 639.5L1270.3 637.1L1275.9 634.7L1281.4 632.4L1287.0 630.2L1292.6 628.1L1298.3 626.2L1304.0 624.3L1309.8 622.7L1315.6 621.2L1321.4 619.7L1327.2 618.2L1333.0 616.7L1338.8 615.3L1344.7 613.9L1350.5 612.5L1356.4 611.1L1362.2 609.8L1368.1 608.5L1373.9 607.3L1379.8 606.1L1385.7 605.0L1391.6 603.9L1397.5 602.9L1403.5 602.0L1409.4 601.1L1415.3 600.2L1421.3 599.3L1427.2 598.5L1433.2 597.7L1439.1 596.9L1445.0 596.1L1451.0 595.3L1457.0 594.6L1462.9 594.0L1468.9 593.3L1474.8 592.6L1480.0 592.0M1300.0 860.0L1304.4 856.0L1308.8 851.9L1313.3 847.8L1317.8 843.9L1322.4 840.1L1327.2 836.4L1332.0 832.9L1336.9 829.4L1341.7 825.8L1346.5 822.2L1351.4 818.7L1356.5 815.5L1361.7 812.7L1367.2 810.1L1372.6 807.5L1375.1 806.2M1368.8 805.1L1372.9 809.5L1377.1 813.7L1381.1 818.2L1384.3 823.3L1386.7 828.8L1388.6 834.4L1390.4 840.2L1392.2 845.9L1393.7 851.7L1395.1 857.5L1396.4 863.4L1397.8 869.2L1398.0 870.0" fill="none" stroke="#5c2525" stroke-width="1"/><path d="M509.5 563.9L507.6 563.4L506.1 564.1L505.8 566.4L506.3 570.8L506.8 574.7L507.1 578.1L506.9 581.3L506.1 584.6M543.2 579.3L539.3 582.2L535.7 585.7L532.4 589.5L529.2 593.3L526.4 596.6L524.5 596.8M509.5 563.9L543.2 579.3M531.6 579.5L529.0 583.2L526.4 587.4L523.4 592.1M534.2 580.6L531.2 584.2L528.2 588.3L525.0 593.0M536.6 581.7L533.3 585.1L529.9 589.2L526.5 593.9M494.0 596.0L504.8 604.1L515.7 612.0M494.7 594.1L506.1 602.6L517.7 610.9M495.9 592.7L507.4 601.1L519.1 609.2M497.1 591.3L508.7 599.5L520.5 607.5M498.2 589.9L510.0 598.0L521.9 605.8M499.3 588.6L511.2 596.4L523.3 604.0M500.4 587.2L512.4 594.8L524.6 602.1M501.4 585.8L513.6 593.2L526.0 600.2M503.1 584.9L514.7 591.5L526.6 597.9M494.7 596.4L494.2 594.7L503.0 583.6L504.7 583.7L525.9 597.7L526.5 599.5L515.5 613.5L513.6 613.3L494.7 596.4M105.6 19.7L107.4 19.7L108.4 19.7L108.7 19.7L108.3 19.7L107.3 19.7L105.6 22.0L105.8 27.0L105.6 22.0L93.3 35.5L81.0 49.0L79.3 47.8L78.2 45.5L77.8 42.4L78.0 39.1L79.0 36.0L80.7 33.5L93.0 20.0L105.6 19.7M87.6 32.6L80.8 40.0M105.8 27.0L107.6 28.3L108.7 30.4L109.0 33.2L108.7 36.3L107.7 39.5L106.1 42.5L106.2 47.5L106.1 42.5L93.8 56.0L81.4 69.4L79.7 68.2L78.6 65.9L78.2 62.8L78.5 59.5L79.5 56.4L81.1 54.0L93.4 40.5L105.8 27.0M88.1 53.1L81.3 60.4M106.2 47.5L108.0 48.7L109.1 50.9L109.5 53.7L109.1 56.9L108.1 60.1L106.5 63.1L106.6 68.1L106.5 63.1L94.1 76.5L81.9 90.1L80.1 88.9L79.0 86.6L78.6 83.4L78.8 80.1L79.8 76.9L81.5 74.4L93.9 61.0L106.2 47.5M88.4 73.6L81.6 81.0M106.6 68.1L108.4 69.3L109.5 71.5L109.8 74.2L109.5 77.4L108.5 80.5L106.9 83.4L107.0 88.4L106.9 83.4L94.8 97.0L82.9 111.0L81.1 109.8L79.9 107.5L79.4 104.4L79.6 101.0L80.4 97.8L82.1 95.2L94.2 81.5L106.6 68.1M89.0 94.2L82.4 101.9M107.0 88.4L108.9 89.6L110.0 91.7L110.4 94.4L110.1 97.4L109.2 100.6L107.7 103.5L108.0 108.5L107.7 103.5L96.0 117.4L84.4 131.7L82.6 130.6L81.3 128.2L80.8 125.2L80.9 121.8L81.7 118.6L83.2 116.0L95.0 102.0L107.0 88.4M90.1 114.8L83.7 122.6M108.0 108.5L109.9 109.6L111.0 111.7L111.5 114.4L111.3 117.5L110.5 120.7L109.1 123.7L109.4 128.7L109.1 123.7L97.6 137.9L86.3 152.3L84.4 151.3L83.2 149.0L82.5 145.9L82.5 142.5L83.3 139.3L84.8 136.7L96.3 122.4L108.0 108.5M91.7 135.3L85.4 143.3M109.4 128.7L111.3 129.8L112.5 131.9L113.1 134.6L112.9 137.7L112.2 140.9L110.8 143.9L111.3 148.8L110.8 143.9L99.6 158.3L88.7 173.0L86.8 172.0L85.4 169.7L84.7 166.7L84.7 163.3L85.4 160.0L86.8 157.4L98.0 142.9L109.4 128.7M93.6 155.9L87.5 164.0M111.3 148.8L113.2 149.9L114.4 151.9L115.0 154.6L114.9 157.7L114.2 160.9L112.9 164.0L113.5 168.9L112.9 164.0L102.1 178.6L91.7 193.7L89.8 192.7L88.4 190.5L87.5 187.4L87.4 184.1L88.0 180.8L89.3 178.1L100.1 163.2L111.3 148.8M96.1 176.4L90.3 184.6M113.5 168.9L115.5 169.9L116.8 171.9L117.4 174.5L117.5 177.6L116.9 180.8L115.6 183.9L116.4 188.8L115.6 183.9L105.3 198.9L95.1 214.1L93.2 213.2L91.7 211.0L90.9 208.0L90.7 204.6L91.2 201.4L92.5 198.7L102.9 183.6L113.5 168.9M99.2 196.8L93.6 205.2M116.4 188.8L118.4 189.8L119.7 191.7L120.5 194.4L120.6 197.5L120.1 200.8L118.9 203.9L119.8 208.8L118.9 203.9L108.8 219.1L98.9 234.5L96.9 233.6L95.5 231.4L94.5 228.4L94.3 225.1L94.7 221.8L96.0 219.1L106.1 203.8L116.4 188.8M102.7 217.1L97.2 225.5M119.8 208.8L121.8 209.7L123.1 211.7L123.9 214.4L124.1 217.5L123.6 220.7L122.5 223.9L123.4 228.7L122.5 223.9L112.7 239.2L103.1 254.9L101.2 254.0L99.6 251.9L98.6 248.9L98.3 245.5L98.7 242.2L99.9 239.5L109.7 224.0L119.8 208.8M106.5 237.3L101.2 245.9M123.4 228.7L125.5 229.6L126.9 231.5L127.7 234.2L127.9 237.3L127.5 240.5L126.5 243.7L127.5 248.5L126.5 243.7L117.1 259.2L108.0 275.2L106.1 274.5L104.4 272.4L103.3 269.4L102.9 266.0L103.1 262.7L104.3 259.9L113.7 244.1L123.4 228.7M110.8 257.5L105.8 266.3M127.5 248.5L129.6 249.3L131.0 251.2L131.9 253.8L132.2 256.8L131.9 260.1L131.0 263.2L132.2 268.0L131.0 263.2L122.1 279.1L113.6 295.3L111.6 294.6L109.9 292.6L108.7 289.7L108.2 286.3L108.3 283.0L109.3 280.2L118.2 264.1L127.5 248.5M115.8 277.6L111.1 286.6M132.2 268.0L134.3 268.8L135.8 270.6L136.8 273.1L137.2 276.2L137.0 279.5L136.2 282.7L137.5 287.4L136.2 282.7L127.7 298.8L119.5 315.2L117.5 314.5L115.8 312.5L114.6 309.6L114.0 306.3L114.1 303.1L115.0 300.2L123.4 283.9L132.2 268.0M121.4 297.5L116.9 306.5M137.5 287.4L139.6 288.1L141.2 289.9L142.3 292.5L142.7 295.5L142.6 298.8L141.9 302.1L143.3 306.9L141.9 302.1L133.7 318.4L126.3 335.3L124.2 334.7L122.4 332.7L121.0 329.8L120.2 326.4L120.2 323.0L121.0 320.1L129.2 303.6L137.5 287.4M127.4 317.2L123.1 326.5M143.3 306.9L145.4 307.6L147.0 309.3L148.1 311.8L148.7 314.8L148.6 318.0L147.9 321.2L149.6 325.7L147.9 321.2L140.7 337.7L134.1 354.9L132.0 354.4L130.1 352.5L128.6 349.8L127.6 346.5L127.4 343.1L128.1 340.1L135.3 323.2L143.3 306.9M134.3 336.9L130.6 346.4M149.6 325.7L151.7 326.2L153.4 327.8L154.6 330.2L155.3 333.1L155.5 336.4L155.0 339.6L156.9 344.1L155.0 339.6L148.6 356.6L142.5 373.9L140.4 373.5L138.4 371.7L136.9 369.0L135.8 365.8L135.5 362.5L136.1 359.5L142.5 342.3L149.6 325.7M142.2 356.1L138.8 365.6M156.9 344.1L159.1 344.6L160.9 346.2L162.2 348.6L163.1 351.5L163.4 354.8L163.0 358.1L165.0 362.6L163.0 358.1L157.0 375.3L151.1 392.7L149.0 392.3L147.1 390.6L145.5 387.9L144.4 384.7L144.0 381.4L144.6 378.5L150.6 361.2L156.9 344.1M150.5 374.9L147.3 384.5M165.0 362.6L167.2 363.1L169.0 364.6L170.5 367.0L171.4 370.0L171.7 373.3L171.4 376.6L173.5 381.1L171.4 376.6L165.6 393.9L160.0 411.3L157.9 410.9L155.9 409.2L154.3 406.6L153.2 403.4L152.8 400.2L153.3 397.2L159.1 379.9L165.0 362.6M159.2 393.6L156.1 403.1M173.5 381.1L175.7 381.5L177.6 383.0L179.0 385.4L180.0 388.4L180.4 391.7L180.1 395.0L182.3 399.5L180.1 395.0L174.5 412.3L169.2 429.9L167.1 429.5L165.1 427.9L163.4 425.2L162.2 422.1L161.8 418.8L162.2 415.8L167.8 398.4L173.5 381.1M168.1 412.1L165.1 421.7M182.3 399.5L184.5 399.8L186.3 401.3L187.8 403.7L188.8 406.6L189.2 409.9L189.1 413.2L191.3 417.7L189.1 413.2L183.7 430.7L178.6 448.3L176.5 448.0L174.5 446.3L172.8 443.7L171.5 440.6L171.0 437.3L171.5 434.4L176.8 416.8L182.3 399.5M177.3 430.5L174.5 440.2M191.3 417.7L193.5 418.0L195.3 419.5L196.9 421.8L197.9 424.7L198.4 428.0L198.2 431.4L200.5 435.8L198.2 431.4L193.2 448.9L188.3 466.5L186.2 466.3L184.2 464.6L182.4 462.1L181.1 458.9L180.6 455.7L181.0 452.7L186.0 435.1L191.3 417.7M186.7 448.8L184.0 458.5M200.5 435.8L202.7 436.1L204.6 437.5L206.2 439.8L207.3 442.7L207.8 446.0L207.7 449.4L210.1 453.7L207.7 449.4L202.9 466.9L198.2 484.6L196.1 484.4L194.0 482.8L192.2 480.2L190.9 477.2L190.4 473.9L190.7 471.0L195.5 453.3L200.5 435.8M196.4 467.0L193.9 476.7M210.1 453.7L212.2 454.0L214.2 455.4L215.8 457.7L216.9 460.6L217.5 463.9L217.4 467.3L219.8 471.6L217.4 467.3L212.7 484.9L208.3 502.7L206.2 502.4L204.1 500.9L202.2 498.3L200.9 495.2L200.3 492.0L200.6 489.0L205.3 471.3L210.1 453.7M206.3 485.0L203.8 494.8M219.8 471.6L222.0 471.9L224.0 473.3L225.6 475.6L226.7 478.5L227.3 481.7L227.3 485.1L229.7 489.4L227.3 485.1L222.9 502.7L218.8 520.6L216.7 520.5L214.5 518.9L212.6 516.4L211.2 513.3L210.5 510.1L210.8 507.1L215.2 489.3L219.8 471.6M216.4 502.9L214.1 512.8M229.7 489.4L231.9 489.6L233.9 490.9L235.5 493.2L236.7 496.0L237.3 499.3L237.4 502.6L239.9 506.8L237.4 502.6L233.4 520.3L230.0 538.4L227.9 538.3L225.7 536.8L223.7 534.4L222.1 531.3L221.3 528.0L221.5 525.0L225.4 507.1L229.7 489.4M227.0 520.7L225.0 530.7M239.9 506.8L242.1 506.9L244.1 508.2L245.7 510.4L247.0 513.2L247.7 516.3L247.9 519.6L250.5 523.7L247.9 519.6L244.6 537.5L241.9 555.7L239.8 555.7L237.5 554.3L235.4 551.9L233.8 548.9L232.8 545.7L232.9 542.6L236.1 524.5L239.9 506.8M238.2 538.1L236.6 548.1M250.5 523.7L252.7 523.8L254.8 525.0L256.5 527.1L257.9 529.8L258.8 532.9L259.0 536.2L261.9 540.2L259.0 536.2L256.5 554.2L254.5 572.5L252.4 572.5L250.1 571.2L247.9 568.9L246.1 566.0L245.0 562.8L245.0 559.8L247.4 541.6L250.5 523.7M250.1 555.1L248.9 565.2M261.9 540.2L264.1 540.2L266.1 541.3L268.0 543.3L269.5 546.0L270.5 549.1L270.9 552.4L273.8 556.3L270.9 552.4L268.9 570.5L267.3 588.7L265.1 588.8L262.8 587.6L260.6 585.3L258.8 582.5L257.7 579.4L257.6 576.4L259.5 558.2L261.9 540.2M262.6 571.6L261.6 581.6M273.8 556.3L276.0 556.2L278.2 557.2L280.1 559.2L281.7 561.9L282.8 565.1L283.3 568.4L286.4 572.3L283.3 568.4L281.7 586.5L280.7 604.9L278.6 605.1L276.2 603.9L273.8 601.7L271.9 598.8L270.7 595.7L270.5 592.7L272.0 574.4L273.8 556.3M275.4 587.7L274.7 597.8M286.4 572.3L288.6 572.1L290.7 573.2L292.7 575.1L294.3 577.7L295.4 580.8L296.0 584.0L299.1 587.6L296.0 584.0L295.1 602.0L295.9 620.7L293.8 621.0L291.1 620.0L288.5 617.9L286.2 615.0L284.7 611.9L284.2 608.9L284.9 590.4L286.4 572.3M288.8 603.6L288.9 613.9M299.1 587.6L301.3 587.4L303.4 588.2L305.4 590.0L307.0 592.4L308.3 595.2L309.0 598.3L312.3 601.5L309.0 598.3L309.9 616.2L313.0 634.5L310.9 635.2L308.2 634.5L305.4 632.7L302.7 630.2L300.8 627.3L299.9 624.3L298.5 605.7L299.1 587.6M303.9 618.5L305.3 628.7M312.3 601.5L314.4 601.0L316.5 601.5L318.6 603.0L320.6 605.1L322.1 607.8L323.2 610.7L327.0 613.5L323.2 610.7L326.3 628.4L331.3 646.2L329.3 647.1L326.6 646.7L323.6 645.3L320.8 643.1L318.6 640.5L317.4 637.6L313.8 619.3L312.3 601.5M320.6 631.4L323.2 641.4M327.0 613.5L329.0 612.8L331.2 613.1L333.5 614.3L335.7 616.2L337.6 618.7L339.1 621.6L343.1 624.0L339.1 621.6L343.9 638.9L350.7 656.3L348.8 657.3L346.0 657.2L342.8 656.0L339.8 654.1L337.3 651.6L335.9 648.8L330.5 631.1L327.0 613.5M338.5 642.4L342.0 652.1M343.1 624.0L345.1 623.0L347.4 623.2L349.8 624.2L352.2 625.9L354.3 628.2L355.9 630.9L360.1 632.9L355.9 630.9L362.5 647.5L372.2 663.6L370.4 665.0L367.6 665.3L364.1 664.6L360.6 663.1L357.7 661.0L355.8 658.4L348.4 641.2L343.1 624.0M357.6 651.6L362.6 660.9M360.1 632.9L361.9 631.7L364.1 631.5L366.5 632.2L368.9 633.5L371.1 635.4L373.1 637.8L377.3 638.9L373.1 637.8L382.3 652.9L394.4 667.1L392.9 668.7L390.2 669.5L386.8 669.5L383.2 668.6L379.9 667.0L377.6 664.8L367.3 649.1L360.1 632.9M378.2 657.9L384.7 666.0M377.3 638.9L378.9 637.5L381.0 636.9L383.4 637.1L386.0 638.0L388.6 639.5L391.0 641.5L395.5 641.9L391.0 641.5L402.7 655.0L416.0 667.7L414.8 669.5L412.2 670.5L409.0 670.8L405.6 670.4L402.3 669.3L399.8 667.5L387.2 653.7L377.3 638.9M399.3 660.5L406.6 667.7M395.5 641.9L396.8 640.2L398.9 639.3L401.4 639.2L404.3 639.7L407.3 640.8L410.1 642.5L414.8 642.5L410.1 642.5L423.2 654.9L438.7 665.7L437.6 667.7L435.0 669.1L431.5 669.9L427.7 670.0L424.1 669.2L421.4 667.6L407.7 655.1L395.5 641.9M420.3 660.7L428.5 667.1M414.8 642.5L416.0 640.7L418.0 639.6L420.5 639.3L423.3 639.5L426.1 640.4L428.9 641.7L433.1 641.1L428.9 641.7L443.3 651.6L461.7 657.0L461.3 659.2L459.2 661.5L456.0 663.5L451.9 664.8L447.8 665.2L444.5 664.3L428.1 654.5L414.8 642.5M441.8 657.9L452.1 661.8M433.1 641.1L433.8 639.1L435.2 637.8L437.2 637.0L439.5 636.7L442.0 636.9L444.7 637.5L448.3 635.6L444.7 637.5L461.5 642.2L479.9 644.2L480.0 646.4L478.6 648.7L476.2 651.0L473.1 652.9L469.7 654.0L466.5 654.0L448.0 649.8L433.1 641.1M462.0 648.7L472.4 650.0M448.3 635.6L448.4 633.5L449.4 631.7L451.2 630.2L453.7 629.0L456.6 628.2L459.8 627.9L463.6 625.0L459.8 627.9L477.8 629.8L496.4 630.6L496.5 632.8L495.3 635.3L493.0 637.7L490.0 639.7L486.9 640.9L483.9 641.0L465.6 639.3L448.3 635.6M479.0 636.1L489.1 636.9M463.6 625.0L463.4 622.8L464.4 620.7L466.4 618.7L469.1 617.1L472.1 616.0L475.3 615.6L478.8 612.5L475.3 615.6L493.2 616.3L511.7 615.3L512.1 617.4L511.1 620.0L509.1 622.6L506.4 624.9L503.3 626.4L500.3 627.0L481.7 626.6L463.6 625.0M494.9 622.5L505.2 622.1M478.8 612.5L478.5 610.4L479.3 608.3L480.9 606.3L483.3 604.6L486.1 603.2L489.2 602.4L492.5 599.0L489.2 602.4L504.2 604.8L513.6 613.2L514.9 614.4L515.6 615.1L515.9 615.3L515.6 615.1L514.9 614.4L513.6 613.2L496.7 612.8L478.8 612.5M385.2 27.4L386.7 28.4L387.5 29.0L387.8 29.2L387.4 29.0L386.6 28.3L383.9 29.2L380.9 33.3L383.9 29.2L365.9 32.5L347.9 35.9L347.2 33.9L347.8 31.4L349.3 28.6L351.5 26.1L354.2 24.2L357.0 23.3L375.0 20.0L385.2 27.4M363.1 26.8L353.2 28.6M380.9 33.3L381.6 35.4L381.2 37.8L379.8 40.2L377.6 42.5L374.9 44.4L371.8 45.8L369.0 49.8L371.8 45.8L353.9 49.2L336.1 52.7L335.4 50.7L335.9 48.2L337.3 45.6L339.5 43.1L342.1 41.1L345.0 40.1L363.0 36.6L380.9 33.3M351.1 43.4L341.2 45.5M369.0 49.8L369.7 51.9L369.3 54.3L367.9 56.7L365.8 58.9L363.2 60.9L360.1 62.4L357.2 66.5L360.1 62.4L342.1 66.0L324.1 70.2L323.4 68.2L323.9 65.5L325.4 62.6L327.6 59.9L330.3 57.9L333.2 56.8L351.1 53.3L369.0 49.8M339.3 60.2L329.3 62.3M357.2 66.5L357.9 68.6L357.5 71.0L356.1 73.4L354.0 75.7L351.5 77.6L348.5 79.0L345.9 82.9L348.5 79.0L331.0 83.2L313.5 89.2L312.6 87.3L312.8 84.6L314.0 81.6L316.0 78.6L318.5 76.2L321.3 74.8L339.3 70.1L357.2 66.5M327.7 77.6L317.9 80.9M345.9 82.9L346.8 84.9L346.6 87.1L345.6 89.5L343.8 91.7L341.4 93.8L338.7 95.4L336.5 99.7L338.7 95.4L321.7 101.4L304.7 108.6L303.6 106.7L303.6 104.0L304.6 101.0L306.3 98.0L308.6 95.5L311.3 93.9L328.6 87.6L345.9 82.9M317.9 96.2L308.4 100.1M336.5 99.7L337.6 101.6L337.6 103.9L336.7 106.4L335.1 108.9L332.8 111.2L330.2 113.1L328.2 117.6L330.2 113.1L313.5 120.2L296.9 128.1L295.7 126.3L295.6 123.6L296.4 120.6L298.0 117.5L300.1 115.0L302.7 113.3L319.6 106.0L336.5 99.7M309.4 115.2L300.2 119.5M328.2 117.6L329.4 119.4L329.5 121.8L328.8 124.4L327.2 127.0L325.1 129.5L322.5 131.5L320.8 136.1L322.5 131.5L306.2 139.4L289.9 148.0L288.7 146.3L288.4 143.6L289.1 140.5L290.6 137.4L292.6 134.7L295.1 132.9L311.6 124.8L328.2 117.6M301.9 134.6L292.9 139.2M320.8 136.1L322.0 137.9L322.3 140.2L321.6 142.8L320.2 145.6L318.2 148.1L315.7 150.3L314.2 154.9L315.7 150.3L299.7 158.8L283.9 168.1L282.5 166.5L282.2 163.8L282.8 160.7L284.1 157.5L286.0 154.8L288.4 152.9L304.5 144.1L320.8 136.1M295.2 154.2L286.4 159.3M314.2 154.9L315.5 156.6L315.9 159.0L315.3 161.6L314.0 164.4L312.1 167.0L309.7 169.3L308.4 174.0L309.7 169.3L294.1 178.5L278.7 188.7L277.3 187.0L276.8 184.4L277.2 181.2L278.4 177.9L280.2 175.1L282.5 173.1L298.3 163.6L314.2 154.9M289.4 174.1L280.8 179.6M308.4 174.0L309.8 175.7L310.2 178.0L309.8 180.7L308.7 183.5L306.9 186.2L304.6 188.5L303.5 193.2L304.6 188.5L289.5 198.5L274.6 209.3L273.2 207.8L272.6 205.2L272.8 202.0L273.8 198.7L275.4 195.8L277.6 193.7L292.9 183.4L308.4 174.0M284.6 194.4L276.3 200.3M303.5 193.2L305.0 194.8L305.6 197.1L305.3 199.8L304.3 202.7L302.7 205.5L300.5 208.0L299.6 212.7L300.5 208.0L285.8 218.7L271.4 230.0L269.8 228.5L269.2 225.9L269.3 222.8L270.1 219.5L271.7 216.5L273.8 214.4L288.5 203.4L303.5 193.2M280.7 214.7L272.7 220.9M299.6 212.7L301.2 214.3L301.8 216.6L301.7 219.3L300.8 222.3L299.3 225.2L297.2 227.8L296.5 232.6L297.2 227.8L282.9 239.0L268.8 250.8L267.2 249.4L266.4 246.9L266.5 243.7L267.2 240.3L268.6 237.3L270.7 235.0L285.1 223.6L299.6 212.7M277.6 235.2L269.8 241.7M296.5 232.6L298.1 234.1L298.8 236.4L298.7 239.1L297.9 242.0L296.5 244.9L294.5 247.6L294.0 252.4L294.5 247.6L280.7 259.3L267.2 271.8L265.6 270.4L264.7 268.0L264.5 264.8L265.1 261.4L266.4 258.3L268.3 256.0L282.3 243.9L296.5 232.6M275.3 255.8L267.8 262.6M294.0 252.4L295.7 253.8L296.5 256.0L296.5 258.8L295.9 261.7L294.6 264.7L292.7 267.4L292.4 272.3L292.7 267.4L279.4 279.8L266.2 292.5L264.5 291.2L263.6 288.8L263.3 285.6L263.9 282.3L265.1 279.2L266.9 276.8L280.3 264.3L294.0 252.4M273.9 276.4L266.6 283.4M292.4 272.3L294.1 273.7L295.0 275.9L295.2 278.7L294.6 281.8L293.4 284.8L291.6 287.6L291.4 292.5L291.6 287.6L278.5 300.3L265.7 313.4L264.0 312.2L263.0 309.7L262.7 306.6L263.1 303.2L264.2 300.0L266.0 297.6L279.1 284.8L292.4 272.3M273.0 297.1L265.8 304.2M291.4 292.5L293.2 293.9L294.1 296.1L294.3 298.8L293.8 301.8L292.7 304.9L291.0 307.7L290.9 312.6L291.0 307.7L278.3 320.8L266.3 334.9L264.5 333.7L263.3 331.2L262.8 327.9L263.0 324.4L264.0 321.1L265.7 318.6L278.4 305.3L291.4 292.5M272.6 317.8L265.8 325.4M290.9 312.6L292.7 313.9L293.7 316.0L294.0 318.7L293.7 321.7L292.7 324.7L291.1 327.5L291.4 332.2L291.1 327.5L279.5 341.2L269.2 356.8L267.2 355.8L265.7 353.4L264.8 350.1L264.7 346.5L265.3 343.0L266.7 340.2L278.5 325.8L290.9 312.6M273.6 338.7L267.5 347.2M291.4 332.2L293.2 333.3L294.4 335.2L294.9 337.7L294.8 340.6L294.2 343.6L292.9 346.5L293.7 351.0L292.9 346.5L283.1 361.4L274.3 377.6L272.3 376.8L270.6 374.7L269.5 371.7L268.9 368.3L269.2 364.9L270.3 362.0L280.1 346.2L291.4 332.2M276.9 359.7L271.9 368.6M293.7 351.0L295.7 351.8L297.1 353.5L298.0 356.0L298.2 358.9L298.0 362.1L297.1 365.3L298.3 369.9L297.1 365.3L288.4 381.2L280.6 397.9L278.5 397.3L276.8 395.2L275.4 392.3L274.7 388.9L274.8 385.5L275.7 382.6L284.3 366.3L293.7 351.0M282.1 379.9L277.7 389.0M298.3 369.9L300.4 370.7L301.9 372.4L302.9 374.9L303.4 377.8L303.3 381.0L302.6 384.2L304.1 388.8L302.6 384.2L295.0 400.6L288.4 418.0L286.3 417.5L284.3 415.5L282.8 412.6L281.8 409.2L281.6 405.8L282.3 402.8L289.9 386.0L298.3 369.9M288.6 399.7L284.8 409.2M304.1 388.8L306.2 389.4L307.9 391.0L309.0 393.4L309.7 396.3L309.8 399.4L309.3 402.6L311.1 407.0L309.3 402.6L303.0 419.5L297.9 437.3L295.8 437.0L293.7 435.2L291.9 432.5L290.6 429.2L290.1 425.8L290.6 422.7L296.8 405.3L304.1 388.8M296.5 419.1L293.6 428.9M311.1 407.0L313.2 407.3L315.0 408.8L316.4 411.1L317.3 413.9L317.6 417.0L317.4 420.2L319.6 424.4L317.4 420.2L312.6 437.6L309.5 455.9L307.3 455.8L305.0 454.3L302.8 451.7L301.2 448.4L300.4 445.0L300.5 441.9L305.2 424.0L311.1 407.0M306.1 437.8L304.1 447.9M319.6 424.4L321.8 424.6L323.7 425.9L325.2 428.0L326.3 430.7L326.9 433.7L327.0 436.9L329.6 440.7L327.0 436.9L324.0 454.6L322.9 473.2L320.7 473.3L318.2 472.0L315.8 469.6L313.8 466.5L312.7 463.3L312.5 460.2L315.2 441.8L319.6 424.4M317.7 455.5L316.7 465.7M329.6 440.7L331.7 440.7L333.8 441.7L335.5 443.7L337.0 446.3L337.9 449.2L338.3 452.4L341.2 455.9L338.3 452.4L337.3 470.1L340.3 488.9L338.2 489.5L335.3 488.7L332.2 486.7L329.4 483.8L327.4 480.5L326.7 477.3L327.1 458.5L329.6 440.7M331.1 471.9L332.1 482.5M341.2 455.9L343.3 455.5L345.4 456.3L347.2 457.8L348.8 459.9L349.9 462.4L350.7 465.2L354.0 467.7L350.7 465.2L353.7 482.5L361.9 499.9L359.9 501.0L356.7 501.0L353.0 499.8L349.5 497.7L346.7 495.0L345.1 492.1L341.0 473.5L341.2 455.9M348.1 485.7L351.8 495.7M354.0 467.7L356.0 466.9L358.0 467.0L360.1 468.0L362.1 469.6L363.8 471.7L365.2 474.2L368.8 475.6L365.2 474.2L372.8 489.5L387.1 502.2L385.8 504.1L383.0 505.3L379.1 505.7L374.9 505.2L370.9 503.7L368.1 501.5L358.1 484.8L354.0 467.7M368.6 494.5L376.3 502.5M368.8 475.6L370.3 474.2L372.0 473.6L373.8 473.7L375.7 474.4L377.8 475.7L380.0 477.4L384.1 477.2L380.0 477.4L393.2 488.7L410.1 497.5L409.3 499.6L406.8 501.4L403.3 502.7L399.5 503.2L395.8 502.8L392.8 501.6L377.8 489.9L368.8 475.6M391.0 494.8L400.0 500.2M384.1 477.2L385.0 475.3L386.6 474.1L388.9 473.5L391.6 473.5L394.4 474.0L397.2 475.0L401.2 473.9L397.2 475.0L412.8 482.8L431.3 486.7L431.1 488.9L429.4 491.3L426.4 493.5L422.7 495.1L418.9 495.8L415.6 495.4L398.1 487.8L384.1 477.2M412.1 489.3L422.5 492.1M401.2 473.9L401.6 471.8L402.9 470.3L404.8 469.2L407.2 468.5L409.9 468.3L412.8 468.6L416.4 466.3L412.8 468.6L430.1 472.0L448.7 472.3L449.0 474.5L447.8 477.0L445.5 479.5L442.4 481.7L439.1 483.1L435.9 483.4L417.2 480.6L401.2 473.9M431.1 478.3L441.5 478.9M416.4 466.3L416.3 464.2L417.2 462.3L419.0 460.7L421.3 459.3L424.2 458.3L427.3 457.9L430.6 454.8L427.3 457.9L445.1 458.0L463.7 455.7L464.2 457.8L463.4 460.5L461.5 463.4L458.7 465.9L455.7 467.7L452.6 468.5L433.9 468.8L416.4 466.3M447.1 464.2L457.4 463.3M430.6 454.8L430.2 452.6L430.9 450.5L432.5 448.5L434.7 446.8L437.3 445.4L440.3 444.5L443.2 441.0L440.3 444.5L458.0 442.1L476.0 437.7L476.8 439.7L476.3 442.4L474.8 445.3L472.5 448.1L469.8 450.2L466.9 451.3L448.5 454.3L430.6 454.8M460.8 447.9L470.8 445.6M443.2 441.0L442.4 439.0L442.8 436.8L444.1 434.5L446.1 432.4L448.6 430.6L451.5 429.2L454.0 425.2L451.5 429.2L469.0 424.8L486.5 418.6L487.5 420.5L487.3 423.3L486.0 426.4L484.0 429.5L481.4 431.9L478.7 433.2L460.8 438.0L443.2 441.0M472.3 430.3L482.1 427.2M454.0 425.2L453.1 423.2L453.3 420.9L454.4 418.5L456.3 416.2L458.6 414.2L461.3 412.6L463.4 408.5L461.3 412.6L478.2 406.5L495.0 399.3L496.1 401.1L496.1 403.7L495.2 406.7L493.6 409.7L491.3 412.2L488.7 413.8L471.4 420.5L454.0 425.2M482.1 411.6L491.4 407.6M463.4 408.5L462.3 406.6L462.2 404.3L463.1 401.8L464.6 399.3L466.8 396.9L469.5 394.9L471.4 390.3L469.5 394.9L486.3 387.7L503.2 380.8L504.2 382.6L504.2 385.2L503.3 388.1L501.6 390.9L499.5 393.3L496.9 394.8L480.2 401.9L463.4 408.5M490.3 392.7L499.5 388.9M471.4 390.3L470.3 388.4L470.2 386.0L471.1 383.2L472.7 380.4L475.0 377.9L477.7 375.9L479.8 371.3L477.7 375.9L494.6 369.0L511.5 361.6L512.6 363.4L512.6 366.1L511.7 369.2L510.0 372.1L507.8 374.6L505.2 376.2L488.3 383.1L471.4 390.3M498.6 374.0L507.9 370.1M479.8 371.3L478.7 369.4L478.6 367.0L479.5 364.4L481.1 361.7L483.3 359.3L485.9 357.3L487.8 352.9L485.9 357.3L502.5 350.0L518.9 341.5L520.1 343.2L520.3 345.9L519.6 349.1L518.1 352.3L516.0 355.0L513.4 356.7L496.6 364.4L479.8 371.3M506.7 354.9L515.8 350.3M487.8 352.9L486.6 351.1L486.5 348.7L487.2 346.2L488.6 343.6L490.6 341.1L493.1 339.1L494.6 334.5L493.1 339.1L509.1 330.6L524.9 321.3L526.3 323.0L526.6 325.6L526.1 328.7L524.8 331.9L522.8 334.7L520.4 336.6L504.2 345.3L487.8 352.9M513.6 335.2L522.4 330.2M494.6 334.5L493.3 332.8L493.0 330.5L493.5 327.8L494.8 325.1L496.7 322.4L499.1 320.2L500.4 315.5L499.1 320.2L514.7 310.9L530.2 301.1L531.6 302.8L532.0 305.4L531.6 308.5L530.4 311.6L528.6 314.4L526.3 316.4L510.5 325.8L494.6 334.5M519.4 315.3L528.0 310.0M500.4 315.5L499.0 313.8L498.6 311.4L499.0 308.7L500.2 305.9L502.0 303.1L504.3 300.8L505.5 296.0L504.3 300.8L519.7 291.0L534.9 280.6L536.3 282.2L536.8 284.8L536.5 288.0L535.4 291.3L533.7 294.2L531.4 296.2L516.0 306.1L500.4 315.5M524.5 295.3L532.9 289.7M505.5 296.0L504.1 294.3L503.6 292.0L504.0 289.3L505.0 286.4L506.8 283.7L509.0 281.3L510.0 276.5L509.0 281.3L523.9 271.0L538.3 259.4L539.9 260.9L540.6 263.6L540.5 266.8L539.6 270.2L538.0 273.3L535.9 275.5L520.8 286.2L505.5 296.0M528.9 275.0L537.0 268.8M510.0 276.5L508.5 275.0L507.9 272.7L508.1 270.1L509.0 267.2L510.5 264.4L512.6 261.9L513.2 257.2L512.6 261.9L526.6 250.7L540.4 238.4L542.0 239.8L542.8 242.3L542.9 245.5L542.3 248.9L540.9 252.0L538.9 254.3L524.7 266.0L510.0 276.5M532.0 254.3L539.6 247.6M513.2 257.2L511.6 255.8L510.8 253.6L510.8 250.9L511.5 248.0L512.9 245.0L514.8 242.3L515.2 237.5L514.8 242.3L528.3 230.2L541.7 217.7L543.4 219.0L544.3 221.5L544.4 224.6L543.9 228.0L542.6 231.0L540.7 233.4L527.1 245.7L513.2 257.2M533.8 233.7L541.2 226.8M515.2 237.5L513.5 236.1L512.6 233.9L512.5 231.1L513.1 228.1L514.4 225.0L516.2 222.2L516.5 217.3L516.2 222.2L529.4 209.8L542.3 196.8L544.1 198.0L545.0 200.4L545.3 203.6L544.9 206.9L543.8 210.1L541.9 212.5L528.6 225.2L515.2 237.5M535.0 213.0L542.1 205.9M516.5 217.3L514.7 215.9L513.8 213.8L513.6 211.1L514.2 208.1L515.3 205.0L517.0 202.2L517.1 197.3L517.0 202.2L529.9 189.3L543.0 176.7L544.7 178.0L545.6 180.4L545.8 183.3L545.3 186.5L544.2 189.4L542.4 191.8L529.6 204.8L516.5 217.3M535.5 192.4L542.6 185.4M517.1 197.3L515.3 195.9L514.4 193.7L514.1 190.9L514.6 187.7L515.7 184.5L517.5 181.5L517.8 176.3L517.5 181.5L530.8 168.8L543.7 155.4L545.5 156.7L546.5 159.3L546.8 162.6L546.3 166.2L545.1 169.3L543.3 171.7L530.0 184.3L517.1 197.3M536.3 172.1L543.6 165.0M517.8 176.3L516.0 174.9L515.1 172.7L515.0 169.9L515.6 166.9L516.7 163.9L518.5 161.2L518.5 156.6L518.5 161.2L530.8 148.3L542.1 133.6L544.0 134.7L545.3 137.1L546.0 140.4L545.9 143.9L545.1 147.3L543.5 149.9L531.0 163.8L517.8 176.3M536.6 151.1L543.1 143.1M518.5 156.6L516.7 155.5L515.6 153.6L515.2 151.1L515.4 148.1L516.3 145.1L517.7 142.2L517.2 137.5L517.7 142.2L528.6 127.9L538.4 112.1L540.4 113.0L541.9 115.3L542.9 118.5L543.2 122.1L542.8 125.5L541.4 128.4L530.4 143.3L518.5 156.6M534.7 130.1L540.3 121.5M517.2 137.5L515.3 136.5L514.0 134.7L513.4 132.1L513.3 129.2L513.9 126.2L515.0 123.2L514.0 118.7L515.0 123.2L524.3 107.9L532.4 91.3L534.5 92.0L536.2 94.0L537.5 97.0L538.2 100.5L538.1 103.9L537.1 106.9L527.8 123.0L517.2 137.5M530.6 109.4L535.2 100.2M514.0 118.7L512.0 117.9L510.5 116.2L509.6 113.8L509.2 110.9L509.4 107.8L510.2 104.6L508.8 100.0L510.2 104.6L518.1 88.3L525.6 71.5L527.6 72.1L529.4 74.0L530.8 76.9L531.6 80.3L531.7 83.6L530.8 86.5L522.9 103.1L514.0 118.7M524.5 89.4L528.7 80.2M508.8 100.0L506.6 99.4L505.0 97.7L503.9 95.2L503.3 92.2L503.3 88.9L503.9 85.7L502.2 81.1L503.9 85.7L511.1 69.1L517.7 51.9L519.8 52.3L521.7 54.2L523.2 57.0L524.2 60.3L524.4 63.7L523.7 66.7L516.5 83.6L508.8 100.0M517.5 69.9L521.3 60.4M502.2 81.1L500.1 80.6L498.4 79.0L497.2 76.6L496.5 73.6L496.3 70.4L496.8 67.1L494.9 62.7L496.8 67.1L503.2 50.2L508.6 32.6L510.7 32.9L512.8 34.7L514.5 37.4L515.7 40.7L516.1 44.1L515.6 47.1L509.3 64.4L502.2 81.1M509.6 50.7L512.8 40.9M494.9 62.7L492.8 62.2L491.0 60.7L489.6 58.4L488.8 55.6L488.5 52.4L488.7 49.2L486.6 44.8L488.7 49.2L494.1 31.8L499.3 14.4L501.4 14.7L503.4 16.3L505.0 18.8L506.2 21.9L506.7 25.1L506.3 28.1L501.1 45.7L494.9 62.7M500.5 31.9L503.3 22.3M486.6 44.8L484.4 44.5L482.5 43.1L481.0 40.8L479.9 37.8L479.4 34.5L479.5 31.1L477.2 26.6L479.5 31.1L488.0 20.0L499.3 14.3L500.8 13.6L501.7 13.1L502.0 12.9L501.7 13.1L500.8 13.6L499.3 14.3L491.8 27.4L486.6 44.8M715.8 540.7L714.0 541.7L712.5 541.4L711.7 539.4L711.1 535.1L710.3 531.1L709.4 527.2L708.2 523.4L706.6 519.8M744.6 517.4L739.8 515.4L735.5 513.1L731.7 510.6L728.4 508.1L725.6 505.8L723.8 506.0M715.8 540.7L744.6 517.4M733.1 520.0L729.7 517.2L726.4 514.1L723.0 510.5M735.3 518.2L731.6 515.7L728.0 512.8L724.4 509.3M737.4 516.6L733.3 514.3L729.5 511.6L725.8 508.2M704.9 521.4L714.6 512.1L724.3 502.7M703.0 520.4L713.3 510.5L723.6 500.7M701.8 518.8L712.1 509.0L722.4 499.1M700.5 517.3L710.8 507.4L721.1 497.6M699.3 515.7L709.6 505.9L719.8 496.0M698.0 514.2L708.3 504.3L718.6 494.4M696.8 512.6L707.0 502.7L717.3 492.9M695.5 511.1L705.8 501.2L716.0 491.3M694.9 509.0L704.5 499.6L714.1 490.2M705.3 520.8L703.5 521.0L693.5 508.6L694.1 506.9L713.7 490.8L715.5 490.7L725.6 503.2L725.1 504.9L705.3 520.8M694.1 506.8L692.7 508.0L691.9 508.6L691.7 508.8L692.0 508.6L692.6 507.6L692.1 504.4L689.0 500.7L692.1 504.4L693.2 486.3L694.5 468.3L696.5 468.1L698.8 469.1L700.9 471.2L702.7 473.8L703.9 476.8L704.2 479.8L703.3 498.1L694.1 506.8M699.5 484.9L700.0 474.9M689.0 500.7L686.8 500.9L684.6 500.0L682.6 498.1L680.8 495.4L679.5 492.3L678.8 488.9L675.5 484.9L678.8 488.9L680.2 470.4L683.4 452.8L685.4 452.8L687.5 454.1L689.4 456.2L690.8 458.9L691.6 461.8L691.6 464.6L689.9 482.5L689.0 500.7M686.5 469.4L688.0 459.8M675.5 484.9L673.2 485.0L671.0 483.8L668.9 481.6L667.2 478.6L666.0 475.1L665.6 471.6L662.6 467.1L665.6 471.6L668.9 453.3L673.4 435.8L675.5 436.0L677.6 437.5L679.3 439.9L680.6 442.8L681.2 445.9L680.9 448.8L677.3 466.4L675.5 484.9M675.3 453.0L677.7 443.4M662.6 467.1L660.4 467.0L658.3 465.5L656.5 463.2L655.1 460.1L654.4 456.7L654.3 453.3L651.8 448.8L654.3 453.3L658.9 435.4L664.0 417.9L666.1 418.2L668.1 419.8L669.8 422.4L671.0 425.4L671.5 428.6L671.1 431.5L666.4 449.0L662.6 467.1M665.4 435.4L668.1 425.8M651.8 448.8L649.6 448.5L647.6 447.0L646.0 444.6L644.9 441.6L644.3 438.2L644.4 434.8L642.1 430.3L644.4 434.8L649.5 417.2L655.1 400.0L657.2 400.3L659.1 401.9L660.7 404.4L661.8 407.5L662.3 410.7L661.8 413.6L656.6 431.0L651.8 448.8M655.9 417.4L658.9 407.9M642.1 430.3L639.9 430.0L637.9 428.5L636.4 426.1L635.3 423.0L634.8 419.7L635.0 416.2L632.7 411.6L635.0 416.2L640.7 398.8L647.1 381.9L649.2 382.3L651.0 384.0L652.4 386.5L653.4 389.6L653.7 392.7L653.0 395.6L647.3 412.8L642.1 430.3M647.1 399.1L650.5 389.8M632.7 411.6L630.5 411.2L628.6 409.6L627.2 407.1L626.2 403.9L625.8 400.5L626.1 397.0L624.1 392.3L626.1 397.0L632.8 379.8L640.2 363.3L642.2 363.8L643.9 365.6L645.3 368.3L646.0 371.4L646.1 374.6L645.3 377.4L638.6 394.2L632.7 411.6M639.2 380.6L643.1 371.5M624.1 392.3L622.0 391.7L620.1 389.9L618.8 387.3L618.0 384.1L617.9 380.7L618.4 377.3L616.7 372.4L618.4 377.3L625.9 360.5L634.2 344.4L636.2 345.1L637.8 346.9L639.0 349.6L639.6 352.8L639.5 355.9L638.6 358.7L631.0 375.1L624.1 392.3M632.3 361.6L636.7 352.7M616.7 372.4L614.5 371.8L612.8 370.0L611.6 367.3L611.0 364.1L611.0 360.6L611.7 357.2L610.2 352.3L611.7 357.2L620.2 340.8L629.7 325.7L631.6 326.5L633.1 328.4L634.0 331.1L634.3 334.1L634.0 337.1L632.9 339.8L624.4 355.7L616.7 372.4M626.4 342.3L631.4 333.8M610.2 352.3L608.1 351.5L606.5 349.5L605.5 346.7L605.0 343.4L605.3 339.9L606.2 336.4L605.1 331.2L606.2 336.4L616.2 320.7L627.1 306.3L629.0 307.3L630.3 309.5L630.9 312.4L631.0 315.5L630.3 318.6L629.0 321.1L619.0 336.0L610.2 352.3M622.2 322.9L628.1 315.0M605.1 331.2L603.1 330.1L601.7 328.0L600.9 325.0L600.8 321.7L601.5 318.2L602.7 315.0L602.2 309.9L602.7 315.0L613.8 300.4L625.1 286.1L626.9 287.1L628.2 289.3L628.8 292.3L628.8 295.6L628.1 298.7L626.6 301.3L615.5 315.8L605.1 331.2M619.8 302.8L625.9 294.9M602.2 309.9L600.2 308.8L599.0 306.7L598.4 304.0L598.5 300.8L599.2 297.5L600.5 294.4L600.1 289.3L600.5 294.4L611.9 280.0L623.8 266.3L625.5 267.4L626.7 269.6L627.2 272.5L627.0 275.7L626.2 278.7L624.7 281.2L613.3 295.4L602.2 309.9M617.8 282.5L624.2 274.9M600.1 289.3L598.2 288.2L596.9 286.0L596.4 283.2L596.6 279.9L597.4 276.6L598.9 273.4L598.6 268.2L598.9 273.4L611.0 259.5L623.9 247.0L625.6 248.3L626.5 250.5L626.8 253.4L626.4 256.4L625.3 259.3L623.6 261.5L611.6 275.0L600.1 289.3M616.7 262.4L623.6 255.4M598.6 268.2L596.8 266.9L595.7 264.7L595.3 261.7L595.7 258.3L596.8 254.9L598.5 251.8L598.7 246.5L598.5 251.8L611.9 239.0L625.8 227.2L627.4 228.6L628.1 231.1L628.2 234.1L627.5 237.3L626.2 240.1L624.3 242.3L611.0 254.5L598.6 268.2M617.3 242.5L624.8 236.0M598.7 246.5L597.0 245.1L596.1 242.7L596.1 239.7L596.8 236.5L598.1 233.3L600.1 230.5L600.6 225.4L600.1 230.5L614.0 218.6L628.0 206.9L629.6 208.3L630.4 210.8L630.4 213.8L629.7 217.0L628.3 220.0L626.3 222.2L612.4 234.0L598.7 246.5M619.3 222.3L627.0 215.8M600.6 225.4L599.0 224.0L598.2 221.7L598.2 218.9L598.9 215.8L600.3 212.8L602.3 210.0L602.9 205.0L602.3 210.0L616.3 198.3L630.6 187.1L632.2 188.6L632.9 191.0L632.8 193.9L632.0 197.1L630.6 199.9L628.6 202.0L614.6 213.7L600.6 225.4M621.6 202.0L629.4 195.7M602.9 205.0L601.2 203.5L600.4 201.2L600.5 198.3L601.3 195.1L602.8 192.0L604.8 189.3L605.6 184.2L604.8 189.3L619.4 178.0L634.4 167.8L635.8 169.3L636.4 171.8L636.1 174.7L635.1 177.8L633.5 180.5L631.4 182.4L617.0 193.3L602.9 205.0M624.5 182.0L632.6 176.3M605.6 184.2L604.0 182.5L603.4 180.1L603.6 177.2L604.6 174.0L606.3 170.9L608.5 168.3L609.6 163.3L608.5 168.3L623.7 158.0L639.2 148.5L640.6 150.1L641.0 152.6L640.6 155.5L639.4 158.5L637.7 161.2L635.5 163.1L620.4 173.1L605.6 184.2M628.6 162.2L637.0 156.9M609.6 163.3L608.1 161.6L607.6 159.1L608.0 156.2L609.1 153.2L611.0 150.2L613.3 147.7L614.7 142.7L613.3 147.7L629.1 138.2L645.1 129.7L646.3 131.4L646.6 133.8L646.0 136.7L644.7 139.6L642.9 142.2L640.5 143.9L624.9 153.1L609.6 163.3M633.7 142.7L642.4 137.9M614.7 142.7L613.3 141.0L612.9 138.5L613.5 135.6L614.8 132.6L616.8 129.7L619.3 127.3L620.9 122.4L619.3 127.3L635.6 118.7L652.0 111.1L653.2 112.9L653.3 115.4L652.6 118.2L651.1 121.1L649.1 123.5L646.7 125.1L630.6 133.4L614.7 142.7M639.9 123.5L648.9 119.2M620.9 122.4L619.6 120.6L619.4 118.1L620.1 115.2L621.6 112.3L623.8 109.6L626.4 107.4L628.3 102.6L626.4 107.4L643.2 99.7L660.0 93.2L661.1 95.0L661.0 97.5L660.1 100.2L658.5 103.0L656.4 105.2L653.9 106.7L637.3 114.0L620.9 122.4M647.2 104.7L656.4 101.0M628.3 102.6L627.1 100.6L627.1 98.1L627.9 95.3L629.6 92.5L631.9 89.9L634.7 87.8L636.9 83.0L634.7 87.8L652.0 81.2L669.4 76.4L670.2 78.4L669.9 80.8L668.8 83.4L666.9 85.9L664.7 87.9L662.1 89.0L645.2 95.1L628.3 102.6M655.6 86.5L665.0 83.7M636.9 83.0L635.9 81.0L636.0 78.5L637.2 75.6L639.1 72.8L641.7 70.3L644.7 68.4L647.5 64.0L644.7 68.4L662.6 63.6L680.4 59.1L681.2 61.1L680.8 63.8L679.4 66.6L677.3 69.2L674.7 71.3L672.0 72.3L654.4 76.8L636.9 83.0M665.7 69.2L675.5 66.9M647.5 64.0L646.6 61.9L647.0 59.4L648.3 56.8L650.3 54.4L652.9 52.3L655.9 50.8L658.5 46.6L655.9 50.8L673.5 46.3L691.2 41.8L692.0 43.7L691.6 46.3L690.3 49.1L688.3 51.7L685.8 53.7L683.0 54.9L665.3 59.4L647.5 64.0M676.7 51.9L686.5 49.4M658.5 46.6L657.6 44.6L657.9 42.2L659.1 39.7L661.1 37.2L663.7 35.1L666.7 33.5L669.4 29.2L666.7 33.5L684.4 28.9L700.7 26.7L702.2 27.6L702.5 28.9L701.2 31.7L699.2 34.4L696.6 36.4L693.9 37.6L676.2 42.1L658.5 46.6M687.6 34.5L697.3 32.0M1356.6 19.2L1358.4 19.1L1359.4 19.0L1359.7 19.0L1359.3 19.0L1358.2 19.1L1356.7 21.5L1357.0 26.4L1356.7 21.5L1345.0 35.5L1333.2 49.4L1331.4 48.3L1330.3 46.0L1329.7 43.0L1329.9 39.7L1330.7 36.6L1332.3 34.0L1344.0 20.0L1356.6 19.2M1339.2 32.8L1332.7 40.5M1357.0 26.4L1358.9 27.6L1360.1 29.7L1360.6 32.5L1360.4 35.6L1359.5 38.9L1358.1 42.0L1358.4 47.0L1358.1 42.0L1346.2 55.9L1334.2 69.6L1332.4 68.5L1331.3 66.2L1330.8 63.2L1331.0 60.0L1331.9 56.8L1333.5 54.3L1345.3 40.5L1357.0 26.4M1340.4 53.2L1333.8 60.8M1358.4 47.0L1360.2 48.2L1361.4 50.4L1361.8 53.2L1361.6 56.3L1360.7 59.6L1359.2 62.6L1359.4 67.7L1359.2 62.6L1347.0 76.4L1334.6 89.8L1332.8 88.6L1331.7 86.3L1331.3 83.2L1331.6 79.8L1332.7 76.7L1334.4 74.4L1346.5 60.9L1358.4 47.0M1341.3 73.5L1334.4 80.8M1359.4 67.7L1361.2 69.0L1362.3 71.2L1362.7 74.2L1362.3 77.5L1361.3 80.6L1359.7 83.5L1359.7 88.5L1359.7 83.5L1347.1 96.9L1333.1 107.1L1331.6 105.8L1331.0 103.7L1331.0 101.4L1331.6 98.9L1332.8 96.5L1334.6 94.4L1347.0 81.4L1359.4 67.7M1341.5 93.8L1334.3 100.0M1359.7 88.5L1361.6 89.8L1362.6 92.2L1362.9 95.3L1362.3 98.9L1361.0 102.6L1359.0 105.9L1357.9 111.8L1359.0 105.9L1343.4 117.0L1327.1 123.8L1326.0 122.1L1325.9 119.8L1326.6 117.3L1327.9 114.9L1329.7 112.7L1332.0 111.3L1346.8 101.9L1359.7 88.5M1338.8 112.5L1330.2 116.6M1357.9 111.8L1359.3 113.7L1359.7 116.4L1359.0 119.6L1357.6 123.0L1355.3 126.1L1352.6 128.6L1350.3 133.8L1352.6 128.6L1335.0 135.7L1317.7 139.3L1316.9 137.5L1317.3 135.2L1318.4 132.8L1320.3 130.5L1322.5 128.7L1325.1 127.6L1341.7 121.7L1357.9 111.8M1331.5 130.3L1322.2 132.7M1350.3 133.8L1351.3 135.9L1351.0 138.6L1349.8 141.6L1347.7 144.4L1345.0 146.9L1341.8 148.8L1338.7 153.4L1341.8 148.8L1323.4 152.5L1305.8 152.3L1305.5 150.3L1306.2 148.2L1307.8 146.2L1309.9 144.5L1312.4 143.3L1315.0 142.8L1332.5 140.0L1350.3 133.8M1320.9 146.6L1311.4 147.0M1338.7 153.4L1339.3 155.6L1338.6 158.2L1336.8 161.0L1334.1 163.5L1330.8 165.5L1327.3 166.8L1323.1 170.7L1327.3 166.8L1308.3 166.4L1290.8 162.9L1290.9 160.9L1292.1 158.8L1294.3 157.1L1296.9 155.7L1299.7 154.9L1302.4 155.0L1320.0 156.2L1338.7 153.4M1307.2 160.1L1297.7 158.5M1323.1 170.7L1323.1 173.0L1321.8 175.4L1319.5 177.6L1316.4 179.4L1312.9 180.6L1309.3 181.1L1304.7 184.0L1309.3 181.1L1291.0 177.3L1274.0 171.8L1274.3 169.8L1275.8 167.9L1278.2 166.3L1281.0 165.3L1284.0 164.8L1286.8 165.3L1304.3 169.3L1323.1 170.7M1290.9 170.9L1281.5 168.1M1304.7 184.0L1304.5 186.2L1303.0 188.3L1300.4 190.1L1297.3 191.4L1293.8 192.0L1290.2 192.0L1285.4 194.3L1290.2 192.0L1272.6 186.2L1256.2 178.8L1256.7 176.8L1258.5 175.1L1261.0 173.8L1263.9 173.1L1267.0 173.0L1269.7 173.7L1286.6 179.7L1304.7 184.0M1273.1 179.8L1264.1 176.0M1285.4 194.3L1284.9 196.5L1283.2 198.4L1280.5 199.9L1277.2 200.8L1273.6 201.1L1270.1 200.7L1265.1 202.4L1270.1 200.7L1253.2 192.9L1237.6 183.9L1238.4 182.0L1240.3 180.5L1243.0 179.4L1246.0 179.0L1249.1 179.2L1251.7 180.2L1267.9 188.0L1285.4 194.3M1254.5 186.6L1245.8 181.9M1265.1 202.4L1264.3 204.6L1262.4 206.3L1259.6 207.4L1256.3 208.0L1252.7 207.9L1249.3 207.0L1244.2 208.3L1249.3 207.0L1233.3 197.7L1218.6 187.3L1219.5 185.5L1221.5 184.1L1224.3 183.3L1227.4 183.2L1230.4 183.7L1233.0 184.9L1248.4 194.3L1265.1 202.4M1235.1 191.6L1226.9 186.1M1244.2 208.3L1243.2 210.3L1241.2 211.8L1238.3 212.7L1235.0 213.0L1231.4 212.5L1228.1 211.4L1222.9 212.2L1228.1 211.4L1213.0 200.6L1199.5 188.8L1200.6 187.0L1202.8 185.9L1205.6 185.4L1208.7 185.6L1211.6 186.4L1213.9 187.9L1228.4 198.6L1244.2 208.3M1215.4 194.7L1207.9 188.4M1222.9 212.2L1221.8 214.2L1219.5 215.5L1216.5 216.1L1213.1 216.0L1209.6 215.2L1206.4 213.7L1201.1 214.0L1206.4 213.7L1192.5 201.4L1179.9 188.4L1181.2 186.8L1183.5 185.8L1186.4 185.6L1189.6 186.0L1192.5 187.1L1194.8 188.8L1208.0 201.0L1222.9 212.2M1195.5 195.8L1188.6 188.8M1201.1 214.0L1199.8 215.8L1197.5 216.9L1194.5 217.2L1191.2 216.7L1187.9 215.6L1184.8 213.9L1179.7 213.7L1184.8 213.9L1172.0 200.6L1160.2 187.0L1161.5 185.4L1163.8 184.6L1166.8 184.4L1169.9 185.0L1172.9 186.3L1175.1 188.2L1187.5 201.3L1201.1 214.0M1175.4 195.1L1168.8 187.7M1179.7 213.7L1178.2 215.4L1175.9 216.3L1173.0 216.4L1169.8 215.8L1166.6 214.5L1163.8 212.6L1158.6 212.2L1163.8 212.6L1151.6 198.7L1140.7 184.2L1142.1 182.7L1144.6 182.1L1147.5 182.2L1150.6 183.0L1153.4 184.4L1155.5 186.4L1167.1 200.2L1179.7 213.7M1155.3 193.4L1149.3 185.6M1158.6 212.2L1157.0 213.8L1154.6 214.6L1151.6 214.5L1148.4 213.7L1145.3 212.2L1142.5 210.1L1137.4 209.2L1142.5 210.1L1131.4 195.4L1120.9 180.5L1122.4 179.0L1124.9 178.5L1127.9 178.7L1131.1 179.7L1133.9 181.3L1135.9 183.4L1146.7 198.0L1158.6 212.2M1135.4 190.3L1129.6 182.2M1137.4 209.2L1135.8 210.8L1133.4 211.4L1130.5 211.2L1127.4 210.2L1124.5 208.6L1121.9 206.4L1116.9 205.4L1121.9 206.4L1111.3 191.5L1100.6 176.6L1102.1 175.1L1104.7 174.5L1107.8 174.8L1111.0 175.7L1113.9 177.4L1116.0 179.5L1126.5 194.5L1137.4 209.2M1115.4 186.5L1109.5 178.3M1116.9 205.4L1115.3 206.9L1112.9 207.5L1110.1 207.3L1107.2 206.2L1104.3 204.6L1101.8 202.4L1096.9 201.5L1101.8 202.4L1091.1 187.6L1081.4 172.5L1082.9 171.1L1085.3 170.6L1088.1 170.9L1091.1 171.9L1093.8 173.5L1095.8 175.7L1106.4 190.5L1116.9 205.4M1095.2 182.6L1089.6 174.4M1096.9 201.5L1095.3 203.1L1092.9 203.7L1090.1 203.4L1087.0 202.4L1083.9 200.7L1081.3 198.4L1076.1 197.2L1081.3 198.4L1071.2 182.8L1064.1 166.6L1065.8 165.5L1068.1 165.3L1070.6 165.9L1073.1 167.2L1075.4 169.0L1077.0 171.3L1086.3 186.6L1096.9 201.5M1075.7 178.2L1071.4 169.5M1076.1 197.2L1074.3 198.6L1071.7 199.0L1068.7 198.4L1065.4 197.0L1062.4 194.8L1059.8 192.1L1054.6 189.9L1059.8 192.1L1052.4 174.8L1046.9 157.4L1048.8 156.5L1051.4 156.8L1054.2 157.9L1056.8 159.8L1058.9 162.1L1060.1 164.6L1066.5 181.2L1076.1 197.2M1057.6 171.1L1054.7 161.8M1054.6 189.9L1052.5 191.0L1049.9 190.9L1047.0 189.7L1044.2 187.8L1041.7 185.3L1039.9 182.4L1035.5 179.9L1039.9 182.4L1034.4 165.0L1027.3 147.7L1029.1 146.6L1032.0 146.7L1035.3 147.8L1038.4 149.8L1040.9 152.2L1042.4 155.0L1048.0 172.5L1054.6 189.9M1039.8 161.4L1036.2 151.8M1035.5 179.9L1033.5 180.9L1031.1 180.8L1028.7 179.7L1026.3 178.0L1024.2 175.8L1022.6 173.1L1018.4 171.3L1022.6 173.1L1015.7 156.6L1007.4 140.2L1009.2 138.9L1011.9 138.8L1015.0 139.6L1018.1 141.1L1020.7 143.2L1022.4 145.8L1029.9 162.7L1035.5 179.9M1020.6 152.5L1016.2 143.3M1018.4 171.3L1016.6 172.5L1014.3 172.7L1011.7 172.0L1009.1 170.5L1006.6 168.4L1004.5 165.9L1000.0 164.3L1004.5 165.9L996.4 149.7L987.0 133.8L988.7 132.5L991.4 132.2L994.6 132.7L997.8 134.1L1000.6 136.1L1002.5 138.5L1011.0 154.9L1018.4 171.3M1001.1 145.3L996.0 136.4M1000.0 164.3L998.2 165.6L995.9 165.8L993.3 165.3L990.6 164.0L988.0 162.1L985.9 159.7L981.3 158.4L985.9 159.7L976.7 144.2L966.3 128.8L967.9 127.4L970.6 126.9L973.9 127.3L977.2 128.4L980.0 130.2L982.0 132.5L991.6 148.2L1000.0 164.3M981.0 139.4L975.5 130.9M981.3 158.4L979.6 159.8L977.4 160.3L974.7 159.9L971.8 158.7L969.1 157.0L966.7 154.7L962.1 153.7L966.7 154.7L956.6 139.9L943.0 126.4L944.5 124.7L947.4 123.6L951.2 123.5L955.1 124.2L958.5 125.7L960.9 127.8L971.8 143.0L981.3 158.4M960.6 134.8L953.7 126.8M962.1 153.7L960.6 155.2L958.5 155.8L956.0 155.7L953.4 154.9L950.9 153.5L948.6 151.7L944.6 151.6L948.6 151.7L936.2 139.6L919.4 130.6L920.3 128.5L922.7 126.7L926.2 125.5L930.2 125.0L934.1 125.5L937.1 126.8L951.7 139.3L962.1 153.7M938.7 133.6L929.6 128.0M944.6 151.6L943.6 153.4L942.0 154.5L939.8 155.0L937.3 154.9L934.7 154.3L932.0 153.2L928.0 154.3L932.0 153.2L916.5 145.2L897.8 143.3L897.6 141.2L898.8 138.8L901.5 136.2L905.5 133.8L910.1 132.4L913.8 132.7L931.3 140.5L944.6 151.6M917.2 138.8L905.9 136.9M928.0 154.3L927.6 156.4L926.3 157.9L924.5 158.9L922.7 159.3L920.8 159.2L918.2 159.1L914.7 162.0L918.2 159.1L900.1 157.3L883.7 150.8L884.1 148.8L885.6 147.1L888.0 145.8L890.5 145.1L892.5 145.2L894.7 145.8L912.3 147.8L928.0 154.3M899.2 151.1L891.0 147.9M914.7 162.0L914.8 164.2L913.5 166.7L910.7 169.1L906.6 171.3L902.2 172.3L898.4 172.1L893.3 174.2L898.4 172.1L881.0 164.8L872.8 152.6L873.6 151.1L874.2 150.2L874.7 149.8L875.9 150.1L877.9 150.8L879.9 152.1L895.6 159.6L914.7 162.0M882.4 158.6L875.7 152.9M893.3 174.2L892.5 176.4L890.3 178.2L887.0 179.5L882.7 180.1L878.0 179.7L873.3 178.1L864.8 176.6L873.3 178.1L861.8 160.5L862.9 143.5L864.9 143.2L866.8 143.9L868.5 145.3L869.8 147.1L870.6 149.2L870.7 151.5L876.1 165.5L893.3 174.2M867.4 157.5L867.4 148.7M864.8 176.6L862.1 177.4L858.3 176.7L854.5 174.6L851.1 171.6L848.7 167.9L847.3 164.1L843.3 159.4L847.3 164.1L848.9 144.8L857.2 130.2L859.1 130.8L860.4 132.0L861.3 133.9L861.7 135.9L861.6 138.2L860.9 140.4L858.1 157.2L864.8 176.6M855.2 144.5L858.9 136.4M843.3 159.4L840.9 159.1L838.4 157.4L836.2 154.4L834.6 150.4L833.8 146.0L834.1 141.8L832.6 135.6L834.1 141.8L844.3 125.1L858.8 118.0L860.0 119.5L860.4 121.1L860.3 122.5L859.7 123.8L858.6 125.4L856.9 126.9L846.9 140.2L843.3 159.4M850.0 127.8L857.1 122.9M832.6 135.6L830.5 134.2L829.1 131.4L828.5 127.5L829.0 122.9L830.6 118.4L833.2 114.5L835.7 107.9L833.2 114.5L851.3 106.2L868.9 104.9L869.4 106.8L868.7 109.0L867.3 111.2L865.4 113.0L863.1 114.3L860.6 114.9L844.8 120.1L832.6 135.6M854.4 111.7L863.7 110.7M835.7 107.9L834.8 105.5L835.4 102.4L837.1 99.1L839.6 96.2L842.8 93.8L846.3 92.2L850.1 88.1L846.3 92.2L865.1 91.0L882.4 94.0L882.4 96.0L881.3 98.0L879.4 99.7L877.1 101.0L874.6 101.7L872.0 101.8L854.3 102.2L835.7 107.9M866.7 97.2L876.0 98.3M850.1 88.1L849.8 85.8L850.8 83.3L852.9 80.8L856.0 78.6L859.7 77.0L863.5 76.3L868.2 73.1L863.5 76.3L882.0 79.6L899.4 84.9L899.1 87.0L897.5 88.9L895.0 90.6L892.1 91.7L889.1 92.1L886.3 91.7L868.9 87.9L850.1 88.1M882.2 86.0L891.6 88.8M868.2 73.1L868.5 70.8L870.1 68.7L872.6 66.9L875.8 65.6L879.3 64.9L882.8 65.0L887.3 62.7L882.8 65.0L900.3 70.4L917.2 76.6L916.8 78.6L915.2 80.4L912.8 81.9L909.8 82.9L906.7 83.2L903.8 82.7L886.5 77.3L868.2 73.1M900.1 76.8L909.5 80.0M887.3 62.7L887.7 60.5L889.2 58.6L891.7 57.1L894.8 56.0L898.2 55.6L901.8 55.8L906.7 53.7L901.8 55.8L919.2 62.3L934.8 70.8L934.2 72.7L932.4 74.3L929.9 75.3L927.0 75.9L924.1 75.8L921.4 74.9L904.9 68.2L887.3 62.7M918.3 68.7L927.0 73.0M906.7 53.7L907.3 51.5L909.1 49.6L911.9 48.2L915.3 47.5L919.0 47.4L922.5 48.0L927.9 46.5L922.5 48.0L939.0 57.1L953.5 67.9L952.5 69.7L950.4 71.0L947.5 71.7L944.5 71.8L941.5 71.2L939.1 69.9L923.9 60.7L906.7 53.7M937.1 63.2L945.0 68.9M927.9 46.5L928.9 44.4L931.1 42.9L934.2 42.0L937.7 41.8L941.2 42.3L944.6 43.6L949.7 42.9L944.6 43.6L959.3 54.6L974.1 65.6L973.0 67.5L970.7 68.8L967.6 69.5L964.2 69.5L960.9 68.8L958.4 67.3L943.9 56.3L927.9 46.5M956.9 60.5L964.9 66.7M949.7 42.9L950.8 41.0L953.0 39.7L955.7 39.1L958.9 39.2L962.1 40.0L965.1 41.3L969.9 40.7L965.1 41.3L979.7 52.1L994.9 62.2L994.0 64.1L991.8 65.6L988.8 66.4L985.5 66.7L982.1 66.2L979.3 64.9L964.3 54.1L949.7 42.9M977.5 58.1L986.0 63.8M969.9 40.7L970.9 38.8L972.8 37.5L975.3 36.8L978.3 36.8L981.5 37.3L984.7 38.4L989.5 37.6L984.7 38.4L999.8 48.5L1015.4 58.2L1014.5 60.2L1012.3 61.7L1009.3 62.6L1005.9 63.0L1002.6 62.5L999.9 61.3L984.6 51.2L969.9 40.7M997.9 54.6L1006.4 60.0M989.5 37.6L990.5 35.5L992.4 34.2L995.0 33.4L998.1 33.2L1001.4 33.7L1004.5 34.7L1009.3 33.8L1004.5 34.7L1019.9 44.4L1036.0 53.5L1035.2 55.5L1033.0 57.1L1030.0 58.2L1026.5 58.6L1023.2 58.3L1020.4 57.2L1004.8 47.5L989.5 37.6M1018.2 50.6L1026.9 55.7M1009.3 33.8L1010.2 31.7L1012.1 30.3L1014.7 29.4L1017.7 29.2L1020.9 29.5L1024.1 30.5L1028.7 29.3L1024.1 30.5L1039.8 39.4L1056.2 47.5L1055.6 49.5L1053.6 51.3L1050.7 52.5L1047.3 53.2L1043.9 53.1L1041.0 52.1L1024.8 43.3L1009.3 33.8M1038.4 45.6L1047.5 50.2M1028.7 29.3L1029.5 27.3L1031.2 25.7L1033.7 24.8L1036.6 24.3L1039.9 24.5L1043.1 25.2L1047.8 23.8L1043.1 25.2L1059.4 33.3L1073.7 42.1L1074.2 43.7L1073.1 45.1L1070.3 46.3L1067.1 47.0L1063.9 46.9L1061.0 46.0L1044.6 37.9L1028.7 29.3M1058.2 39.6L1067.2 44.0M1047.8 23.8L1048.4 21.7L1050.2 20.0L1052.8 18.9L1055.9 18.3L1059.3 18.4L1062.6 19.1L1066.3 17.9L1062.6 19.1L1070.0 30.0L1073.7 42.1L1074.2 43.7L1074.5 44.7L1074.6 45.0L1074.5 44.7L1074.2 43.7L1073.7 42.1L1064.2 31.8L1047.8 23.8M1151.6 25.0L1153.2 25.8L1154.1 26.2L1154.4 26.3L1154.0 26.1L1153.1 25.7L1150.7 27.1L1148.7 31.6L1150.7 27.1L1133.9 34.2L1117.1 41.2L1116.0 39.4L1116.0 36.9L1116.9 34.0L1118.5 31.1L1120.6 28.7L1123.2 27.2L1140.0 20.0L1151.6 25.0M1129.9 29.2L1120.6 33.1M1148.7 31.6L1149.8 33.5L1149.9 36.0L1149.1 38.6L1147.5 41.4L1145.2 43.9L1142.5 45.9L1140.5 50.6L1142.5 45.9L1125.5 53.0L1108.2 58.7L1107.3 56.8L1107.6 54.1L1108.7 51.4L1110.4 48.8L1112.6 46.8L1115.1 45.6L1131.9 38.8L1148.7 31.6M1121.7 47.8L1112.5 50.9M1140.5 50.6L1141.6 52.6L1141.6 55.1L1140.6 57.9L1138.7 60.8L1136.2 63.5L1133.3 65.4L1130.9 69.8L1133.3 65.4L1116.1 71.2L1099.5 81.9L1098.1 79.5L1098.1 75.8L1099.0 72.1L1100.6 68.8L1102.9 65.7L1105.7 63.7L1123.3 57.4L1140.5 50.6M1112.3 65.9L1102.8 70.8M1130.9 69.8L1131.9 71.7L1131.9 73.9L1131.2 76.1L1129.9 78.0L1128.0 80.1L1125.5 82.1L1124.5 85.2L1125.5 82.1L1113.1 90.7L1123.4 110.1L1120.9 111.7L1115.3 111.6L1108.4 108.5L1103.3 103.5L1100.6 97.7L1100.1 92.3L1114.3 75.8L1130.9 69.8M1106.4 89.1L1106.7 103.0M1124.5 85.2L1126.2 85.7L1127.2 85.3L1127.2 84.0L1126.6 83.4L1125.7 84.0L1124.5 85.2L1123.7 84.9L1124.5 85.2L1130.8 96.4L1147.8 104.3L1147.1 106.4L1144.9 108.2L1141.9 109.6L1138.2 110.4L1134.3 110.3L1130.9 109.3L1116.2 94.6L1124.5 85.2M1128.8 102.7L1138.5 107.4M1123.7 84.9L1123.9 83.1L1124.5 82.0L1125.9 81.4L1128.1 81.3L1130.9 81.6L1133.9 82.4L1138.3 80.9L1133.9 82.4L1150.1 89.6L1168.0 94.2L1167.8 96.4L1166.2 98.5L1163.5 100.3L1160.1 101.8L1156.5 102.4L1153.3 102.1L1135.6 95.1L1123.7 84.9M1149.7 96.1L1159.8 98.8M1138.3 80.9L1138.7 78.9L1139.9 77.3L1141.8 76.2L1144.3 75.4L1147.3 75.1L1150.4 75.2L1154.7 72.8L1150.4 75.2L1168.0 79.7L1186.3 83.3L1186.2 85.5L1184.5 87.8L1181.8 89.8L1178.6 91.3L1175.3 92.0L1172.3 91.8L1154.6 87.3L1138.3 80.9M1168.2 86.1L1178.1 88.4M1154.7 72.8L1154.9 70.6L1156.3 68.6L1158.6 67.0L1161.4 65.9L1164.5 65.2L1167.8 65.3L1171.6 62.8L1167.8 65.3L1185.3 68.6L1204.1 68.3L1204.4 70.5L1203.3 73.1L1200.9 75.9L1197.8 78.2L1194.2 79.8L1190.9 80.1L1172.4 77.2L1154.7 72.8M1186.2 75.0L1196.8 75.4M1171.6 62.8L1171.6 60.7L1172.6 58.8L1174.3 57.2L1176.6 55.9L1179.2 55.1L1182.1 54.7L1185.2 51.6L1182.1 54.7L1199.9 54.3L1218.3 52.6L1218.8 54.7L1217.9 57.2L1216.0 59.9L1213.5 62.2L1210.6 63.9L1207.6 64.5L1189.1 65.4L1171.6 62.8M1202.0 60.4L1212.1 59.6M1185.2 51.6L1184.8 49.5L1185.4 47.3L1187.0 45.1L1189.4 43.1L1192.3 41.5L1195.4 40.5L1198.5 36.9L1195.4 40.5L1213.4 38.9L1231.5 36.8L1232.1 38.8L1231.4 41.3L1229.7 43.9L1227.3 46.2L1224.5 47.9L1221.6 48.7L1203.3 50.6L1185.2 51.6M1215.8 44.8L1225.8 43.7M1198.5 36.9L1198.0 34.8L1198.6 32.5L1200.1 30.2L1202.4 28.1L1205.2 26.4L1208.4 25.2L1211.6 21.3L1208.4 25.2L1225.0 25.0L1234.6 33.1L1235.9 34.3L1236.7 34.9L1237.0 35.2L1236.7 34.9L1235.9 34.3L1234.6 33.1L1216.6 35.0L1198.5 36.9M815.0 267.1L815.5 265.2L816.8 264.3L818.8 265.1L822.2 267.8L825.6 270.2L829.0 272.3L832.5 274.2L836.2 275.7M810.7 303.9L815.5 302.0L820.2 300.7L824.6 299.8L828.7 299.2L832.4 298.9L833.5 297.5M815.0 267.1L810.7 303.9M817.1 294.0L821.4 293.6L826.0 293.6L831.0 293.7M816.7 296.8L821.1 296.0L825.8 295.6L830.7 295.6M816.4 299.4L820.9 298.3L825.5 297.5L830.5 297.3M836.2 273.3L835.8 286.7L835.4 300.2M838.3 272.7L837.8 287.0L837.3 301.2M840.3 273.0L839.8 287.2L839.3 301.4M842.3 273.2L841.8 287.4L841.3 301.7M844.3 273.4L843.8 287.7L843.3 301.9M846.2 273.7L845.8 287.9L845.3 302.1M848.2 273.9L847.8 288.1L847.3 302.4M850.2 274.1L849.7 288.4L849.3 302.6M852.1 275.2L851.7 288.6L851.4 302.0M836.4 274.0L837.5 272.6L853.4 274.5L854.2 276.1L851.3 301.3L850.1 302.7L834.2 300.8L833.3 299.2L836.4 274.0M1242.7 310.0L1242.6 308.0L1241.4 306.9L1239.4 307.4L1235.5 309.4L1231.7 311.1L1228.0 312.5L1224.2 313.7L1220.3 314.5M1240.1 346.9L1235.7 344.2L1231.3 342.0L1227.1 340.3L1223.2 339.0L1219.7 338.0L1218.8 336.4M1242.7 310.0L1240.1 346.9M1235.6 336.1L1231.4 334.8L1226.9 333.9L1222.0 333.2M1235.4 338.9L1231.2 337.3L1226.8 336.0L1221.9 335.1M1235.2 341.5L1231.1 339.5L1226.6 337.9L1221.8 336.8M1202.4 310.7L1202.6 324.2L1202.8 337.7M1204.5 310.1L1204.6 324.4L1204.7 338.6M1206.5 310.3L1206.6 324.5L1206.7 338.8M1208.4 310.4L1208.6 324.6L1208.7 338.9M1210.4 310.5L1210.6 324.8L1210.7 339.0M1212.4 310.7L1212.6 324.9L1212.7 339.2M1214.4 310.8L1214.6 325.1L1214.7 339.3M1216.4 311.0L1216.6 325.2L1216.7 339.5M1218.3 311.9L1218.6 325.4L1218.8 338.8M1202.6 311.5L1203.7 310.0L1219.6 311.2L1220.5 312.8L1218.7 338.1L1217.5 339.5L1201.5 338.4L1200.6 336.8L1202.6 311.5M854.2 276.2L854.4 274.4L854.5 273.4L854.5 273.1L854.5 273.5L854.7 274.6L857.4 276.6L862.4 277.1L857.4 276.6L869.1 290.6L880.9 304.5L879.5 306.1L877.0 306.9L873.9 306.9L870.7 306.2L867.7 304.8L865.5 302.8L853.7 288.8L854.2 276.2M865.5 295.9L872.0 303.6M862.4 277.1L863.8 275.5L866.1 274.7L868.9 274.7L872.0 275.5L875.0 276.9L877.7 278.8L882.7 279.4L877.7 278.8L889.5 292.8L901.3 306.7L899.9 308.3L897.5 309.1L894.4 309.1L891.1 308.4L888.1 307.0L885.9 305.1L874.1 291.1L862.4 277.1M885.9 298.1L892.4 305.7M882.7 279.4L884.1 277.7L886.4 276.9L889.2 276.9L892.3 277.7L895.3 279.0L898.0 281.0L903.0 281.5L898.0 281.0L909.9 294.9L921.7 308.8L920.3 310.4L917.9 311.2L914.8 311.2L911.5 310.5L908.6 309.2L906.3 307.2L894.5 293.3L882.7 279.4M906.3 300.2L912.8 307.9M903.0 281.5L904.5 279.8L906.8 279.1L909.6 279.1L912.6 279.8L915.7 281.2L918.4 283.1L923.4 283.6L918.4 283.1L930.3 297.0L942.1 311.0L940.7 312.5L938.2 313.3L935.1 313.4L931.9 312.7L928.9 311.3L926.7 309.3L914.9 295.4L903.0 281.5M926.7 302.4L933.2 310.0M923.4 283.6L924.9 282.0L927.2 281.2L930.0 281.2L933.0 281.9L936.1 283.3L938.8 285.3L943.8 285.8L938.8 285.3L950.7 299.2L962.5 313.1L961.1 314.7L958.6 315.5L955.5 315.5L952.3 314.8L949.3 313.5L947.1 311.5L935.2 297.6L923.4 283.6M947.0 304.5L953.5 312.2M943.8 285.8L945.3 284.1L947.6 283.3L950.4 283.4L953.4 284.1L956.5 285.5L959.2 287.4L964.2 288.0L959.2 287.4L971.0 301.3L982.9 315.2L981.5 316.8L979.0 317.6L976.0 317.7L972.7 317.0L969.7 315.6L967.5 313.6L955.6 299.7L943.8 285.8M967.4 306.7L974.0 314.3M964.2 288.0L965.7 286.3L967.9 285.5L970.7 285.5L973.8 286.2L976.8 287.6L979.6 289.6L984.5 290.1L979.6 289.6L991.4 303.4L1003.4 317.3L1002.0 318.9L999.5 319.7L996.4 319.7L993.1 319.1L990.2 317.7L987.9 315.8L976.0 301.9L964.2 288.0M987.8 308.8L994.4 316.4M984.5 290.1L986.0 288.4L988.3 287.6L991.1 287.6L994.1 288.3L997.2 289.7L999.9 291.6L1004.9 292.1L999.9 291.6L1011.8 305.4L1023.9 319.2L1022.5 320.8L1020.0 321.6L1016.9 321.7L1013.7 321.0L1010.7 319.7L1008.4 317.8L996.4 303.9L984.5 290.1M1008.3 310.8L1014.9 318.4M1004.9 292.1L1006.3 290.4L1008.6 289.6L1011.4 289.6L1014.4 290.3L1017.5 291.6L1020.2 293.6L1025.2 294.0L1020.2 293.6L1032.3 307.3L1044.3 321.1L1042.9 322.7L1040.5 323.5L1037.4 323.6L1034.1 322.9L1031.1 321.6L1028.9 319.7L1016.8 305.9L1004.9 292.1M1028.7 312.7L1035.3 320.2M1025.2 294.0L1026.7 292.3L1028.9 291.5L1031.7 291.5L1034.8 292.2L1037.9 293.5L1040.6 295.4L1045.6 295.9L1040.6 295.4L1052.7 309.2L1064.6 323.0L1063.3 324.6L1060.8 325.4L1057.7 325.4L1054.5 324.8L1051.5 323.5L1049.3 321.5L1037.2 307.8L1025.2 294.0M1049.1 314.5L1055.7 322.1M1045.6 295.9L1047.1 294.2L1049.4 293.4L1052.2 293.3L1055.3 294.0L1058.3 295.4L1061.1 297.3L1066.1 297.8L1061.1 297.3L1073.1 311.1L1084.9 325.0L1083.5 326.6L1081.1 327.4L1078.0 327.4L1074.8 326.7L1071.8 325.4L1069.6 323.4L1057.7 309.6L1045.6 295.9M1069.5 316.5L1076.0 324.1M1066.1 297.8L1067.5 296.1L1069.8 295.3L1072.7 295.3L1075.8 296.0L1078.8 297.3L1081.6 299.3L1086.6 299.8L1081.6 299.3L1093.5 313.2L1105.2 327.2L1103.8 328.8L1101.3 329.5L1098.3 329.5L1095.0 328.8L1092.1 327.5L1089.9 325.5L1078.1 311.6L1066.1 297.8M1089.9 318.5L1096.3 326.2M1086.6 299.8L1088.1 298.1L1090.4 297.4L1093.2 297.4L1096.3 298.1L1099.3 299.5L1102.1 301.5L1107.1 302.0L1102.1 301.5L1113.8 315.5L1125.6 329.5L1124.1 331.1L1121.7 331.8L1118.6 331.8L1115.3 331.1L1112.4 329.7L1110.2 327.7L1098.4 313.7L1086.6 299.8M1110.2 320.8L1116.6 328.5M1107.1 302.0L1108.6 300.4L1110.9 299.6L1113.7 299.6L1116.7 300.4L1119.8 301.8L1122.5 303.8L1127.5 304.3L1122.5 303.8L1134.2 317.8L1146.0 331.8L1144.6 333.4L1142.1 334.1L1139.0 334.2L1135.7 333.4L1132.8 332.1L1130.5 330.1L1118.8 316.0L1107.1 302.0M1130.6 323.1L1137.0 330.8M1127.5 304.3L1129.0 302.7L1131.2 301.9L1134.1 302.0L1137.1 302.7L1140.1 304.1L1142.8 306.1L1147.8 306.6L1142.8 306.1L1154.6 320.0L1166.6 333.9L1165.2 335.5L1162.7 336.3L1159.6 336.4L1156.2 335.7L1153.2 334.3L1151.0 332.3L1139.2 318.4L1127.5 304.3M1151.0 325.4L1157.5 333.0M1147.8 306.6L1149.3 305.0L1151.5 304.2L1154.3 304.2L1157.4 304.9L1160.4 306.3L1163.1 308.2L1168.0 308.7L1163.1 308.2L1175.0 322.0L1187.2 335.7L1185.8 337.3L1183.4 338.1L1180.3 338.2L1176.9 337.6L1173.9 336.3L1171.6 334.4L1159.6 320.6L1147.8 306.6M1171.5 327.4L1178.2 334.9M1168.0 308.7L1169.4 307.0L1171.7 306.2L1174.4 306.2L1177.5 306.9L1180.5 308.2L1183.3 310.1L1188.2 310.5L1183.3 310.1L1195.4 323.6L1200.6 336.7L1200.5 338.4L1200.4 339.5L1200.4 339.8L1197.5 339.2L1194.5 338.0L1192.2 336.0L1180.0 322.4L1168.0 308.7M1192.0 329.1L1198.7 336.5M783.6 351.7L785.0 350.3L786.6 350.3L787.8 352.0L789.3 356.0L791.0 359.9L792.7 363.4L794.7 366.8L797.1 370.0M760.6 380.7L765.7 381.6L770.4 383.0L774.6 384.5L778.4 386.2L781.7 387.8L783.4 387.3M783.6 351.7L760.6 380.7M771.2 375.7L775.2 377.6L779.1 380.0L783.2 382.7M769.4 377.9L773.6 379.5L777.8 381.6L782.0 384.2M767.8 379.9L772.2 381.3L776.6 383.1L780.9 385.6M798.4 368.0L791.0 379.3L783.6 390.5M800.5 368.7L792.6 380.5L784.7 392.4M802.0 369.9L794.2 381.8L786.3 393.6M803.6 371.1L795.7 383.0L787.8 394.9M805.2 372.4L797.3 384.3L789.4 396.1M806.7 373.6L798.9 385.5L791.0 397.4M808.3 374.9L800.4 386.7L792.5 398.6M809.9 376.1L802.0 388.0L794.1 399.9M810.9 378.0L803.6 389.2L796.2 400.5M798.1 368.7L799.8 368.2L812.4 378.1L812.2 379.9L796.5 399.8L794.7 400.4L782.2 390.4L782.3 388.6L798.1 368.7M812.2 380.0L813.3 378.6L813.9 377.8L814.1 377.5L813.9 377.8L813.5 378.9L814.7 382.0L818.7 385.1L814.7 382.0L817.3 400.1L819.8 418.2L817.8 418.8L815.3 418.1L812.6 416.5L810.3 414.2L808.5 411.4L807.7 408.6L805.1 390.5L812.2 380.0M811.4 402.7L812.8 412.6M818.7 385.1L820.8 384.5L823.1 385.1L825.5 386.6L827.7 388.8L829.5 391.6L830.8 394.7L834.7 397.8L830.8 394.7L833.3 412.8L835.9 430.9L833.8 431.5L831.3 430.9L828.7 429.2L826.3 426.9L824.6 424.2L823.7 421.3L821.2 403.2L818.7 385.1M827.4 415.4L828.8 425.3M834.7 397.8L836.9 397.2L839.2 397.8L841.6 399.3L843.8 401.6L845.6 404.4L846.9 407.5L850.8 410.6L846.9 407.5L849.4 425.6L851.9 443.7L849.9 444.3L847.4 443.6L844.8 442.0L842.4 439.6L840.6 436.9L839.8 434.0L837.3 415.9L834.7 397.8M843.5 428.1L844.9 438.1M850.8 410.6L852.9 410.0L855.3 410.5L857.6 412.1L859.8 414.3L861.7 417.1L862.9 420.2L866.8 423.3L862.9 420.2L865.5 438.3L868.0 456.4L866.0 457.0L863.5 456.4L860.8 454.7L858.5 452.4L856.7 449.6L855.8 446.8L853.3 428.7L850.8 410.6M859.6 440.9L861.0 450.8M866.8 423.3L869.0 422.7L871.3 423.3L873.7 424.8L875.9 427.0L877.7 429.8L879.0 433.0L882.9 436.1L879.0 433.0L881.5 451.0L884.1 469.1L882.1 469.7L879.6 469.1L876.9 467.4L874.5 465.1L872.8 462.4L871.9 459.5L869.4 441.4L866.8 423.3M875.6 453.6L877.0 463.6M882.9 436.1L885.0 435.4L887.4 436.0L889.7 437.5L891.9 439.8L893.8 442.5L895.0 445.7L899.0 448.8L895.0 445.7L897.6 463.7L900.2 481.8L898.2 482.4L895.7 481.8L893.0 480.2L890.7 477.8L888.9 475.1L888.0 472.2L885.5 454.1L882.9 436.1M891.7 466.3L893.2 476.3M899.0 448.8L901.1 448.1L903.4 448.7L905.8 450.2L908.0 452.4L909.9 455.2L911.1 458.3L915.1 461.4L911.1 458.3L913.7 476.4L916.3 494.5L914.3 495.1L911.8 494.5L909.2 492.8L906.8 490.5L905.0 487.8L904.1 484.9L901.5 466.8L899.0 448.8M907.8 479.0L909.3 489.0M915.1 461.4L917.2 460.8L919.5 461.4L921.9 462.9L924.1 465.1L926.0 467.9L927.2 471.0L931.2 474.1L927.2 471.0L929.8 489.1L932.4 507.2L930.4 507.8L927.9 507.1L925.3 505.5L922.9 503.2L921.1 500.5L920.3 497.6L917.7 479.5L915.1 461.4M923.9 491.7L925.4 501.6M931.2 474.1L933.3 473.5L935.6 474.0L938.0 475.5L940.2 477.8L942.1 480.6L943.3 483.7L947.3 486.8L943.3 483.7L945.9 501.8L948.5 519.9L946.5 520.5L944.0 519.8L941.4 518.2L939.0 515.9L937.2 513.1L936.4 510.3L933.8 492.2L931.2 474.1M940.0 504.4L941.5 514.3M947.3 486.8L949.4 486.2L951.8 486.7L954.1 488.2L956.3 490.5L958.2 493.3L959.5 496.4L963.4 499.5L959.5 496.4L962.0 514.5L964.6 532.6L962.6 533.2L960.1 532.5L957.5 530.9L955.1 528.6L953.3 525.8L952.5 523.0L949.9 504.9L947.3 486.8M956.2 517.0L957.6 527.0M963.4 499.5L965.5 498.9L967.9 499.4L970.2 500.9L972.4 503.2L974.3 506.0L975.6 509.1L979.5 512.2L975.6 509.1L978.2 527.2L980.7 545.2L978.7 545.8L976.2 545.2L973.6 543.6L971.2 541.2L969.4 538.5L968.6 535.6L966.0 517.6L963.4 499.5M972.3 529.7L973.7 539.7M979.5 512.2L981.6 511.5L984.0 512.1L986.3 513.6L988.6 515.9L990.4 518.6L991.7 521.8L995.6 524.8L991.7 521.8L994.3 539.8L993.9 555.6L992.8 557.0L992.2 557.8L989.7 556.2L987.3 553.9L985.5 551.2L984.7 548.3L982.1 530.2L979.5 512.2M988.4 542.4L989.8 552.4M988.6 531.8L988.0 530.1L987.6 529.1L987.5 528.9L987.8 529.2L991.1 529.0L994.5 529.5L999.1 527.6L994.5 529.5L1011.4 536.3L1028.4 543.1L1027.9 545.2L1026.0 547.0L1023.3 548.5L1020.1 549.4L1016.8 549.5L1013.9 548.8L997.0 542.0L988.6 531.8M1010.7 542.7L1020.0 546.4M999.1 527.6L999.6 525.5L1001.3 523.7L1003.8 522.4L1006.8 521.6L1010.2 521.4L1013.5 521.9L1018.1 520.0L1013.5 521.9L1030.5 528.7L1047.4 535.5L1046.9 537.6L1045.1 539.4L1042.4 540.9L1039.2 541.8L1035.9 542.0L1033.0 541.2L1016.0 534.4L999.1 527.6M1029.7 535.1L1039.0 538.8M1018.1 520.0L1018.7 517.9L1020.3 516.1L1022.8 514.8L1025.9 514.0L1029.2 513.8L1032.6 514.3L1037.2 512.5L1032.6 514.3L1049.5 521.1L1066.5 527.9L1066.0 530.0L1064.1 531.9L1061.4 533.3L1058.2 534.2L1054.9 534.4L1052.0 533.7L1035.1 526.9L1018.1 520.0M1048.8 527.5L1058.1 531.3M1037.2 512.5L1037.7 510.3L1039.4 508.5L1041.9 507.2L1044.9 506.5L1048.3 506.3L1051.6 506.7L1056.2 504.9L1051.6 506.7L1068.6 513.6L1085.5 520.4L1085.0 522.4L1083.2 524.3L1080.5 525.7L1077.3 526.6L1074.0 526.8L1071.1 526.1L1054.1 519.3L1037.2 512.5M1067.8 519.9L1077.1 523.7M1056.2 504.9L1056.8 502.7L1058.4 501.0L1060.9 499.7L1064.0 498.9L1067.3 498.7L1070.7 499.2L1075.3 497.3L1070.7 499.2L1087.6 506.0L1104.6 512.8L1104.1 514.8L1102.2 516.7L1099.5 518.2L1096.3 519.1L1093.0 519.2L1090.2 518.5L1073.2 511.7L1056.2 504.9M1086.9 512.4L1096.2 516.1M1075.3 497.3L1075.8 495.2L1077.5 493.4L1080.0 492.1L1083.0 491.3L1086.4 491.1L1089.7 491.6L1094.3 489.7L1089.7 491.6L1106.6 498.4L1123.6 505.2L1123.1 507.3L1121.3 509.1L1118.6 510.6L1115.4 511.5L1112.1 511.6L1109.2 510.9L1092.2 504.1L1075.3 497.3M1105.9 504.8L1115.2 508.5M1094.3 489.7L1094.9 487.6L1096.5 485.8L1099.0 484.5L1102.1 483.7L1105.4 483.5L1108.7 484.0L1113.4 482.1L1108.7 484.0L1125.7 490.8L1142.6 497.6L1142.1 499.7L1140.3 501.5L1137.6 503.0L1134.4 503.9L1131.1 504.1L1128.2 503.3L1111.3 496.5L1094.3 489.7M1125.0 497.2L1134.3 500.9M1113.4 482.1L1113.9 480.0L1115.6 478.2L1118.1 476.9L1121.1 476.1L1124.5 475.9L1127.8 476.4L1132.4 474.6L1127.8 476.4L1144.7 483.2L1161.7 490.1L1161.2 492.1L1159.3 494.0L1156.6 495.4L1153.4 496.3L1150.2 496.5L1147.3 495.8L1130.3 489.0L1113.4 482.1M1144.0 489.6L1153.3 493.4M1132.4 474.6L1133.0 472.4L1134.6 470.6L1137.1 469.3L1140.2 468.6L1143.5 468.4L1146.9 468.8L1151.5 467.0L1146.9 468.8L1163.8 475.7L1180.7 482.6L1180.2 484.6L1178.4 486.5L1175.7 487.9L1172.5 488.8L1169.2 489.0L1166.3 488.2L1149.4 481.4L1132.4 474.6M1163.1 482.1L1172.4 485.9M1151.5 467.0L1152.1 464.8L1153.7 463.1L1156.2 461.8L1159.3 461.0L1162.6 460.8L1165.9 461.3L1170.6 459.5L1165.9 461.3L1182.9 468.2L1199.8 475.1L1199.3 477.1L1197.5 479.0L1194.7 480.4L1191.5 481.3L1188.3 481.5L1185.4 480.7L1168.5 473.9L1151.5 467.0M1182.1 474.6L1191.4 478.4M1170.6 459.5L1171.1 457.3L1172.8 455.6L1175.3 454.3L1178.4 453.5L1181.7 453.3L1185.0 453.8L1189.7 452.0L1185.0 453.8L1202.0 460.7L1218.9 467.6L1218.4 469.7L1216.5 471.5L1213.8 472.9L1210.6 473.8L1207.3 474.0L1204.4 473.3L1187.5 466.4L1170.6 459.5M1201.2 467.1L1210.5 470.9M1189.7 452.0L1190.2 449.8L1191.9 448.1L1194.4 446.8L1197.5 446.0L1200.8 445.8L1204.1 446.3L1208.8 444.5L1204.1 446.3L1221.1 453.2L1238.0 460.2L1237.4 462.2L1235.6 464.1L1232.9 465.5L1229.7 466.4L1226.4 466.5L1223.5 465.8L1206.6 458.9L1189.7 452.0M1220.3 459.6L1229.6 463.4M1208.8 444.5L1209.4 442.3L1211.0 440.6L1213.5 439.3L1216.6 438.5L1219.9 438.4L1223.2 438.9L1227.9 437.0L1223.2 438.9L1240.2 445.8L1257.1 452.7L1256.5 454.8L1254.7 456.6L1252.0 458.0L1248.8 458.9L1245.5 459.1L1242.6 458.3L1225.7 451.4L1208.8 444.5M1239.4 452.2L1248.7 456.0M1227.9 437.0L1228.5 434.9L1230.1 433.1L1232.6 431.8L1235.7 431.1L1239.0 430.9L1242.3 431.4L1247.0 429.6L1242.3 431.4L1259.3 438.3L1276.1 445.3L1275.6 447.3L1273.8 449.2L1271.1 450.6L1267.9 451.5L1264.6 451.6L1261.7 450.9L1244.8 444.0L1227.9 437.0M1258.5 444.7L1267.8 448.5M1247.0 429.6L1247.6 427.4L1249.2 425.7L1251.7 424.4L1254.8 423.6L1258.1 423.5L1261.5 424.0L1266.1 422.1L1261.5 424.0L1278.4 430.9L1295.3 437.9L1294.7 439.9L1292.9 441.7L1290.2 443.2L1287.0 444.1L1283.7 444.2L1280.8 443.5L1263.9 436.5L1247.0 429.6M1277.6 437.3L1286.9 441.1M1266.1 422.1L1266.7 420.0L1268.3 418.2L1270.8 417.0L1273.9 416.2L1277.2 416.0L1280.6 416.5L1285.2 414.7L1280.6 416.5L1297.5 423.5L1314.4 430.4L1313.8 432.5L1312.0 434.3L1309.3 435.8L1306.1 436.6L1302.8 436.8L1299.9 436.0L1283.0 429.1L1266.1 422.1M1296.7 429.9L1306.0 433.7M1285.2 414.7L1285.8 412.6L1287.5 410.8L1290.0 409.5L1293.0 408.8L1296.4 408.6L1299.7 409.1L1304.3 407.3L1299.7 409.1L1316.6 416.1L1333.5 423.0L1333.0 425.1L1331.1 426.9L1328.4 428.3L1325.2 429.2L1321.9 429.4L1319.0 428.6L1302.1 421.7L1285.2 414.7M1315.8 422.4L1325.1 426.3M1304.3 407.3L1304.9 405.1L1306.6 403.4L1309.1 402.1L1312.1 401.4L1315.5 401.2L1318.8 401.7L1323.5 399.9L1318.8 401.7L1335.2 408.8L1339.8 420.6L1340.4 422.2L1340.8 423.2L1340.9 423.5L1340.8 423.2L1340.4 422.2L1338.1 421.2L1321.2 414.2L1304.3 407.3M1431.5 156.0L1429.5 155.5L1428.1 156.2L1427.9 158.3L1428.4 162.6L1428.7 166.7L1428.8 170.7L1428.6 174.6L1428.0 178.5M1465.2 171.2L1461.2 174.4L1457.6 177.7L1454.5 181.1L1451.9 184.3L1449.8 187.3L1448.0 187.6M1431.5 156.0L1465.2 171.2M1453.5 171.6L1450.9 175.2L1448.5 179.1L1446.1 183.4M1456.1 172.8L1453.1 176.2L1450.4 179.9L1447.8 184.2M1458.5 173.9L1455.2 177.1L1452.1 180.7L1449.4 184.9M1418.2 194.0L1430.9 198.5L1443.5 203.0M1418.3 191.8L1431.7 196.7L1445.1 201.6M1419.1 190.0L1432.5 194.9L1445.9 199.7M1420.0 188.2L1433.4 193.1L1446.8 197.9M1420.8 186.4L1434.2 191.2L1447.6 196.1M1421.7 184.6L1435.1 189.4L1448.5 194.3M1422.5 182.8L1435.9 187.6L1449.3 192.4M1423.3 181.0L1436.7 185.8L1450.1 190.6M1424.9 179.5L1437.6 184.0L1450.2 188.4M1418.9 194.1L1418.0 192.5L1424.6 178.1L1426.4 177.8L1449.5 188.3L1450.5 189.9L1443.7 204.5L1442.0 204.7L1418.9 194.1M1316.5 409.1L1314.9 408.3L1314.0 407.9L1313.7 407.8L1314.1 407.8L1316.5 405.4L1319.2 403.5L1321.4 399.0L1319.2 403.5L1336.3 397.0L1353.4 390.6L1354.5 392.4L1354.4 395.0L1353.3 398.0L1351.6 400.8L1349.3 403.1L1346.7 404.6L1329.6 411.0L1316.5 409.1M1340.1 402.2L1349.5 398.7M1321.4 399.0L1320.3 397.0L1320.4 394.6L1321.3 392.0L1323.0 389.3L1325.4 386.9L1328.1 385.0L1330.3 380.5L1328.1 385.0L1345.2 378.6L1362.3 372.1L1363.4 374.0L1363.3 376.6L1362.2 379.5L1360.5 382.3L1358.2 384.7L1355.6 386.1L1338.5 392.5L1321.4 399.0M1349.0 383.8L1358.4 380.2M1330.3 380.5L1329.2 378.6L1329.3 376.2L1330.2 373.5L1331.9 370.9L1334.3 368.5L1337.0 366.5L1339.2 362.0L1337.0 366.5L1354.1 360.1L1371.3 353.7L1372.3 355.6L1372.2 358.2L1371.1 361.1L1369.4 363.9L1367.1 366.2L1364.5 367.6L1347.4 374.1L1330.3 380.5M1357.9 365.3L1367.3 361.8M1339.2 362.0L1338.2 360.1L1338.2 357.7L1339.1 355.0L1340.9 352.4L1343.2 350.0L1346.0 348.1L1348.2 343.6L1346.0 348.1L1363.1 341.7L1380.3 335.4L1381.3 337.3L1381.2 339.9L1380.1 342.8L1378.3 345.6L1376.1 347.9L1373.4 349.3L1356.3 355.6L1339.2 362.0M1366.9 346.9L1376.3 343.4M1348.2 343.6L1347.1 341.6L1347.2 339.2L1348.1 336.5L1349.9 333.9L1352.2 331.5L1355.0 329.6L1357.3 325.1L1355.0 329.6L1372.2 323.3L1389.4 317.1L1390.4 318.9L1390.3 321.5L1389.2 324.4L1387.4 327.3L1385.1 329.6L1382.5 331.0L1365.3 337.2L1348.2 343.6M1375.9 328.6L1385.4 325.1M1357.3 325.1L1356.2 323.1L1356.3 320.7L1357.3 318.0L1359.0 315.4L1361.4 313.1L1364.2 311.2L1366.4 306.7L1364.2 311.2L1381.3 305.0L1398.5 298.6L1399.5 300.5L1399.4 303.1L1398.4 306.0L1396.6 308.8L1394.3 311.2L1391.6 312.6L1374.4 318.8L1357.3 325.1M1385.1 310.2L1394.5 306.7M1366.4 306.7L1365.4 304.8L1365.4 302.3L1366.4 299.7L1368.1 297.1L1370.5 294.8L1373.3 292.9L1375.4 288.4L1373.3 292.9L1390.4 286.5L1407.4 279.9L1408.5 281.8L1408.4 284.4L1407.4 287.4L1405.6 290.2L1403.3 292.6L1400.7 294.1L1383.6 300.5L1366.4 306.7M1394.1 291.7L1403.6 288.1M1375.4 288.4L1374.4 286.5L1374.4 284.1L1375.3 281.5L1377.1 278.9L1379.4 276.5L1382.1 274.6L1384.2 270.1L1382.1 274.6L1399.1 268.0L1416.1 261.2L1417.1 263.0L1417.1 265.6L1416.1 268.6L1414.4 271.5L1412.2 273.9L1409.6 275.4L1392.5 282.0L1375.4 288.4M1403.0 273.1L1412.3 269.4M1384.2 270.1L1383.1 268.2L1383.1 265.8L1384.0 263.2L1385.7 260.5L1387.9 258.1L1390.7 256.1L1392.7 251.6L1390.7 256.1L1407.6 249.3L1424.5 242.5L1425.6 244.3L1425.6 246.9L1424.6 249.8L1422.9 252.7L1420.7 255.1L1418.1 256.6L1401.2 263.4L1384.2 270.1M1411.5 254.4L1420.8 250.7M1392.7 251.6L1391.6 249.7L1391.6 247.3L1392.5 244.6L1394.1 242.0L1396.4 239.5L1399.1 237.5L1401.2 233.0L1399.1 237.5L1416.0 230.7L1433.0 223.9L1434.1 225.7L1434.0 228.3L1433.1 231.2L1431.4 234.1L1429.2 236.4L1426.6 237.9L1409.7 244.8L1392.7 251.6M1420.0 235.8L1429.3 232.0M1401.2 233.0L1400.1 231.0L1400.0 228.6L1400.9 226.0L1402.6 223.3L1404.9 220.8L1407.6 218.8L1409.7 214.2L1407.6 218.8L1424.6 212.0L1441.6 205.3L1442.6 207.2L1442.6 209.8L1441.6 212.7L1439.9 215.5L1437.7 217.9L1435.1 219.4L1418.1 226.1L1401.2 233.0M1428.5 217.2L1437.8 213.5M1409.7 214.2L1408.6 212.3L1408.6 209.9L1409.5 207.2L1411.2 204.5L1413.5 202.1L1416.2 200.1L1418.3 195.6L1416.2 200.1L1430.4 199.4L1441.9 204.7L1443.4 205.4L1444.4 205.9L1444.7 206.0L1444.4 205.9L1443.4 205.4L1441.9 204.7L1426.7 207.5L1409.7 214.2M767.4 426.7L769.3 426.1L770.7 426.8L771.1 428.9L770.7 433.4L770.4 437.5L770.3 441.4L770.6 445.2L771.2 449.0M733.9 442.6L738.0 445.6L741.6 448.8L744.7 452.2L747.4 455.5L749.7 458.5L751.5 458.8M767.4 426.7L733.9 442.6M745.6 442.7L748.3 446.2L750.7 450.1L753.3 454.5M743.1 443.9L746.1 447.2L748.9 451.0L751.6 455.3M740.7 445.0L744.0 448.2L747.1 451.8L750.0 456.1M773.3 447.8L761.8 454.8L750.4 462.0M774.8 449.1L762.7 456.6L750.7 464.2M775.7 450.7L763.7 458.4L751.7 466.0M776.6 452.4L764.6 460.1L752.6 467.9M777.5 454.2L765.5 461.9L753.6 469.6M778.4 455.9L766.5 463.6L754.5 471.4M779.4 457.6L767.4 465.4L755.5 473.2M780.3 459.4L768.4 467.2L756.5 475.0M780.5 461.5L769.3 468.9L758.1 476.4M772.7 448.2L774.5 448.4L781.8 462.1L780.9 463.7L758.7 475.9L756.9 475.7L749.1 461.2L750.0 459.6L772.7 448.2M780.9 463.8L782.4 462.9L783.3 462.4L783.6 462.3L783.2 462.4L782.5 463.2L782.4 466.5L784.8 470.7L782.4 466.5L778.1 484.1L775.3 502.5L773.1 502.5L770.8 501.0L768.6 498.4L766.9 495.2L766.0 491.8L766.1 488.7L770.3 470.7L780.9 463.8M771.6 484.4L769.8 494.6M784.8 470.7L786.9 470.9L788.9 472.1L790.5 474.2L791.6 476.9L792.3 479.9L792.4 483.1L795.1 486.9L792.4 483.1L789.9 500.8L788.9 519.4L786.7 519.5L784.2 518.3L781.9 516.0L779.9 513.0L778.7 509.8L778.5 506.7L780.8 488.3L784.8 470.7M783.5 501.9L782.7 512.1M795.1 486.9L797.3 486.8L799.3 487.8L801.1 489.7L802.6 492.3L803.6 495.3L804.1 498.4L807.1 502.0L804.1 498.4L803.2 516.4L804.5 535.0L802.4 535.4L799.7 534.4L797.0 532.3L794.6 529.6L793.0 526.4L792.5 523.3L793.0 504.8L795.1 486.9M797.0 518.0L797.4 528.4M807.1 502.0L809.3 501.7L811.4 502.5L813.3 504.2L815.0 506.5L816.3 509.3L817.1 512.3L820.4 515.4L817.1 512.3L818.4 530.1L821.9 548.3L819.9 549.0L817.2 548.4L814.4 546.8L811.7 544.4L809.7 541.5L808.7 538.5L806.8 519.9L807.1 502.0M812.5 532.6L814.3 542.8M820.4 515.4L822.5 514.8L824.6 515.3L826.7 516.6L828.7 518.7L830.4 521.3L831.6 524.3L835.5 527.0L831.6 524.3L835.1 542.0L839.0 559.9L837.0 560.6L834.5 560.1L831.8 558.7L829.2 556.6L827.2 554.0L826.1 551.2L822.4 533.1L820.4 515.4M829.4 545.0L831.6 554.8M835.5 527.0L837.6 526.3L839.9 526.6L842.3 527.9L844.6 530.0L846.7 532.6L848.2 535.6L852.3 538.4L848.2 535.6L852.1 553.4L856.5 571.3L854.5 572.1L851.9 571.6L849.1 570.2L846.4 568.1L844.4 565.5L843.3 562.7L839.3 544.8L835.5 527.0M846.4 556.5L848.8 566.3M852.3 538.4L854.4 537.6L856.8 538.0L859.2 539.3L861.5 541.3L863.5 543.9L865.0 546.8L869.2 549.5L865.0 546.8L869.4 564.4L874.5 582.1L872.6 583.0L869.9 582.7L867.0 581.4L864.3 579.3L862.1 576.8L860.9 574.0L856.3 556.2L852.3 538.4M863.8 567.7L866.6 577.5M869.2 549.5L871.2 548.6L873.5 548.9L876.0 550.0L878.4 552.0L880.5 554.5L882.1 557.3L886.3 559.8L882.1 557.3L887.1 574.8L892.8 592.2L890.9 593.2L888.2 592.9L885.3 591.7L882.5 589.8L880.3 587.3L879.0 584.6L873.7 567.0L869.2 549.5M881.7 578.2L884.8 587.8M886.3 559.8L888.2 558.8L890.6 559.0L893.1 560.1L895.6 561.9L897.8 564.4L899.5 567.2L903.9 569.6L899.5 567.2L905.2 584.5L911.7 601.8L909.8 602.8L907.1 602.6L904.1 601.5L901.1 599.7L898.7 597.3L897.3 594.6L891.5 577.2L886.3 559.8M899.8 588.1L903.3 597.7M903.9 569.6L905.8 568.6L908.2 568.6L910.7 569.7L913.2 571.4L915.4 573.7L917.2 576.5L921.6 578.5L917.2 576.5L923.7 593.3L931.3 610.1L929.5 611.2L926.9 611.3L923.8 610.5L920.7 608.8L918.1 606.6L916.4 603.9L909.6 586.8L903.9 569.6M918.6 597.3L922.7 606.6M921.6 578.5L923.4 577.4L925.7 577.4L928.3 578.2L930.8 579.7L933.1 581.9L935.1 584.5L939.6 586.3L935.1 584.5L942.7 601.0L951.5 617.3L949.7 618.6L946.9 618.8L943.7 618.0L940.5 616.5L937.8 614.4L936.1 611.9L928.3 595.3L921.6 578.5M937.8 605.2L942.4 614.3M939.6 586.3L941.5 585.1L943.8 584.9L946.5 585.6L949.1 587.0L951.6 589.0L953.6 591.5L958.1 593.0L953.6 591.5L962.2 607.3L973.4 622.4L971.8 623.9L969.0 624.5L965.5 624.2L961.9 623.0L958.8 621.2L956.6 618.8L947.4 602.7L939.6 586.3M957.7 612.0L963.6 620.6M958.1 593.0L959.7 591.6L961.9 591.2L964.4 591.6L967.0 592.7L969.5 594.4L971.7 596.5L976.0 597.3L971.7 596.5L982.4 610.6L995.9 623.4L994.6 625.2L992.1 626.3L988.7 626.6L985.0 626.2L981.6 624.9L979.0 623.0L967.0 608.4L958.1 593.0M978.8 616.0L986.2 623.4M976.0 597.3L977.4 595.6L979.4 594.9L981.8 594.8L984.4 595.4L987.2 596.6L989.8 598.3L994.4 598.3L989.8 598.3L1002.9 610.5L1017.3 622.0L1016.2 623.9L1013.8 625.1L1010.7 625.7L1007.2 625.7L1003.9 624.8L1001.2 623.2L987.4 610.9L976.0 597.3M1000.1 616.4L1008.0 622.8M994.4 598.3L995.6 596.4L997.5 595.4L1000.1 594.9L1003.1 595.2L1006.1 596.0L1009.1 597.5L1013.9 597.0L1009.1 597.5L1023.3 608.7L1038.1 619.7L1037.0 621.6L1034.7 622.9L1031.5 623.6L1028.2 623.7L1025.0 623.0L1022.3 621.5L1007.8 610.2L994.4 598.3M1020.8 614.7L1028.9 620.8M1013.9 597.0L1015.0 595.1L1017.0 593.9L1019.7 593.3L1022.8 593.4L1026.1 594.1L1029.1 595.4L1033.9 594.9L1029.1 595.4L1043.6 606.2L1059.0 616.3L1058.1 618.2L1055.9 619.7L1052.8 620.6L1049.4 620.8L1046.0 620.3L1043.2 619.0L1028.3 608.2L1013.9 597.0M1041.4 612.2L1049.9 617.9M1033.9 594.9L1034.8 592.9L1036.8 591.6L1039.3 590.9L1042.4 590.9L1045.5 591.4L1048.6 592.6L1053.4 591.7L1048.6 592.6L1063.8 602.5L1079.4 612.0L1078.6 614.0L1076.4 615.5L1073.5 616.5L1070.1 616.9L1066.8 616.5L1064.0 615.3L1048.6 605.4L1033.9 594.9M1061.9 608.6L1070.5 613.9M1053.4 591.7L1054.3 589.7L1056.1 588.3L1058.8 587.5L1061.8 587.2L1065.1 587.6L1068.3 588.7L1073.1 587.6L1068.3 588.7L1083.8 598.1L1099.8 607.2L1099.0 609.2L1096.9 610.8L1093.9 611.9L1090.5 612.4L1087.2 612.1L1084.4 610.9L1068.7 601.5L1053.4 591.7M1082.1 604.3L1090.9 609.4M1073.1 587.6L1074.0 585.6L1075.9 584.1L1078.5 583.2L1081.5 583.0L1084.7 583.3L1087.9 584.2L1092.7 583.0L1087.9 584.2L1103.7 593.2L1119.8 601.9L1119.1 603.9L1117.0 605.5L1114.1 606.7L1110.8 607.2L1107.5 607.0L1104.7 606.0L1088.7 597.0L1073.1 587.6M1102.2 599.5L1111.1 604.3M1092.7 583.0L1093.4 581.0L1095.3 579.5L1097.8 578.5L1100.9 578.1L1104.2 578.3L1107.4 579.2L1112.2 577.9L1107.4 579.2L1123.5 587.8L1139.5 596.5L1138.8 598.5L1136.8 600.1L1134.0 601.2L1130.7 601.8L1127.5 601.6L1124.7 600.6L1108.5 591.9L1092.7 583.0M1122.1 594.1L1130.9 598.8M1112.2 577.9L1113.0 575.8L1114.8 574.2L1117.4 573.2L1120.5 572.7L1123.9 572.9L1127.1 573.7L1132.1 572.4L1127.1 573.7L1143.3 582.4L1160.2 590.2L1159.6 592.3L1157.4 594.2L1154.3 595.6L1150.7 596.3L1147.3 596.2L1144.4 595.2L1128.3 586.5L1112.2 577.9M1141.8 588.7L1151.0 593.3M1132.1 572.4L1132.9 570.3L1134.7 568.8L1137.3 567.8L1140.2 567.4L1143.3 567.6L1146.4 568.4L1150.7 566.9L1146.4 568.4L1162.6 575.7L1180.1 581.5L1179.8 583.6L1178.0 585.6L1175.2 587.3L1171.9 588.5L1168.4 588.8L1165.3 588.3L1148.1 581.0L1132.1 572.4M1161.9 582.1L1171.7 585.5M1150.7 566.9L1151.1 564.8L1152.6 563.2L1154.8 561.9L1157.6 561.2L1160.7 561.0L1163.9 561.3L1168.3 559.3L1163.9 561.3L1181.2 567.0L1198.7 572.2L1198.3 574.4L1196.7 576.4L1194.1 578.0L1191.0 579.2L1187.7 579.7L1184.7 579.3L1167.2 573.7L1150.7 566.9M1181.0 573.4L1190.6 576.3M1168.3 559.3L1168.6 557.1L1170.1 555.2L1172.4 553.8L1175.3 552.8L1178.6 552.3L1182.0 552.4L1186.4 550.2L1182.0 552.4L1199.4 557.7L1217.1 562.6L1216.8 564.8L1215.2 566.8L1212.6 568.6L1209.4 569.8L1206.2 570.4L1203.2 569.9L1185.6 564.7L1168.3 559.3M1199.3 564.1L1209.0 566.9M1186.4 550.2L1186.7 548.0L1188.2 546.1L1190.5 544.6L1193.4 543.6L1196.7 543.1L1200.0 543.2L1204.4 540.9L1200.0 543.2L1217.5 548.1L1235.3 552.6L1235.1 554.7L1233.5 556.8L1230.9 558.7L1227.8 560.0L1224.5 560.6L1221.6 560.2L1203.9 555.4L1186.4 550.2M1217.6 554.5L1227.3 557.1M1204.4 540.9L1204.6 538.7L1206.0 536.8L1208.3 535.2L1211.2 534.1L1214.5 533.5L1217.8 533.6L1222.1 531.2L1217.8 533.6L1235.4 538.1L1253.2 542.6L1253.0 544.7L1251.3 546.8L1248.8 548.6L1245.7 549.9L1242.6 550.5L1239.7 550.1L1221.9 545.7L1204.4 540.9M1235.6 544.5L1245.3 547.0M1222.1 531.2L1222.3 529.0L1223.7 527.0L1226.0 525.3L1229.0 524.1L1232.3 523.5L1235.6 523.5L1239.9 521.1L1235.6 523.5L1253.3 527.9L1271.7 531.0L1271.6 533.2L1270.0 535.5L1267.4 537.6L1264.2 539.3L1260.8 540.1L1257.7 540.0L1239.8 535.6L1222.1 531.2M1253.5 534.4L1263.6 536.4M1239.9 521.1L1240.1 518.9L1241.4 517.0L1243.6 515.4L1246.3 514.3L1249.3 513.6L1252.5 513.6L1256.3 511.0L1252.5 513.6L1270.1 516.3L1288.8 515.9L1289.1 518.0L1288.1 520.6L1285.9 523.3L1282.8 525.6L1279.4 527.2L1276.1 527.6L1257.5 525.3L1239.9 521.1M1271.2 522.7L1281.8 522.8M1256.3 511.0L1256.2 508.8L1257.1 506.9L1258.8 505.2L1261.0 503.9L1263.7 502.9L1266.7 502.4L1270.0 499.1L1266.7 502.4L1284.6 501.9L1302.7 501.0L1303.2 503.0L1302.4 505.4L1300.6 507.7L1298.2 509.9L1295.3 511.5L1292.3 512.1L1273.8 513.0L1256.3 511.0M1286.7 508.0L1296.8 507.3M1270.0 499.1L1269.5 497.0L1270.2 494.8L1271.8 492.6L1274.2 490.6L1277.1 489.0L1280.4 487.9L1283.9 484.1L1280.4 487.9L1298.9 487.1L1316.0 489.4L1316.2 491.4L1315.3 493.3L1313.6 495.1L1311.4 496.5L1308.7 497.5L1306.0 497.7L1288.0 498.2L1270.0 499.1M1300.6 493.3L1310.2 493.9M1283.9 484.1L1283.6 481.9L1284.5 479.5L1286.5 477.1L1289.4 475.0L1292.9 473.3L1296.6 472.5L1301.4 468.9L1296.6 472.5L1315.5 475.3L1332.1 481.8L1331.6 483.8L1330.0 485.5L1327.7 486.9L1325.0 487.7L1322.2 487.9L1319.6 487.4L1302.6 483.8L1283.9 484.1M1315.6 481.6L1324.6 484.9M1301.4 468.9L1301.7 466.6L1303.4 464.3L1306.2 462.4L1309.7 461.0L1313.5 460.4L1317.1 460.6L1322.2 458.6L1317.1 460.6L1334.5 467.5L1351.3 475.0L1350.7 477.1L1348.7 478.9L1345.8 480.2L1342.5 481.0L1339.3 481.0L1336.5 480.1L1320.0 473.1L1301.4 468.9M1333.5 473.9L1342.6 478.1M1322.2 458.6L1322.9 456.4L1324.7 454.6L1327.4 453.3L1330.6 452.7L1333.9 452.6L1337.2 453.2L1341.8 451.6L1337.2 453.2L1353.7 460.5L1370.9 466.8L1370.5 468.9L1368.7 470.8L1366.0 472.4L1362.8 473.4L1359.4 473.7L1356.3 473.1L1339.2 465.9L1322.2 458.6M1353.0 467.0L1362.6 470.4M1341.8 451.6L1342.3 449.5L1343.8 447.9L1346.1 446.7L1348.8 446.0L1352.1 445.7L1355.4 446.1L1360.0 444.1L1355.4 446.1L1372.5 452.4L1389.9 458.4L1389.5 460.5L1387.7 462.4L1385.0 464.0L1381.8 465.1L1378.5 465.4L1375.5 464.8L1358.3 458.6L1341.8 451.6M1372.0 458.8L1381.6 462.1M1360.0 444.1L1360.4 441.9L1362.0 440.1L1364.4 438.8L1367.4 437.9L1370.7 437.6L1374.0 437.9L1378.4 435.9L1374.0 437.9L1391.2 443.8L1408.9 449.1L1408.5 451.2L1406.8 453.3L1404.1 455.0L1400.8 456.3L1397.5 456.7L1394.5 456.2L1377.1 450.3L1360.0 444.1M1390.8 450.3L1400.5 453.3M1378.4 435.9L1378.8 433.7L1380.3 431.9L1382.7 430.5L1385.6 429.5L1388.8 429.1L1392.1 429.4L1396.3 427.2L1392.1 429.4L1409.4 434.5L1427.1 439.1L1426.9 441.2L1425.3 443.2L1422.8 445.0L1419.7 446.4L1416.4 447.0L1413.4 446.7L1395.7 441.7L1378.4 435.9M1409.4 440.9L1419.2 443.5M1396.3 427.2L1396.6 425.0L1398.0 423.1L1400.2 421.6L1403.1 420.5L1406.3 419.9L1409.6 420.0L1414.0 417.5L1409.6 420.0L1427.3 424.6L1444.6 429.8L1444.4 431.9L1442.8 433.8L1440.4 435.4L1437.4 436.6L1434.3 437.1L1431.4 436.7L1413.8 432.1L1396.3 427.2M1427.4 431.0L1437.0 433.7M1414.0 417.5L1414.3 415.3L1415.7 413.3L1418.1 411.7L1421.1 410.5L1424.5 409.9L1428.0 410.0L1432.6 407.6L1428.0 410.0L1445.6 415.3L1462.8 421.4L1462.4 423.5L1460.7 425.4L1458.1 426.9L1455.0 427.9L1451.9 428.3L1449.0 427.7L1431.8 422.2L1414.0 417.5M1445.3 421.7L1454.7 425.0M1432.6 407.6L1433.1 405.4L1434.7 403.5L1437.2 402.0L1440.3 400.9L1443.7 400.5L1447.1 400.8L1451.7 398.7L1447.1 400.8L1464.3 406.9L1481.6 413.1L1481.2 415.2L1479.4 417.1L1476.7 418.7L1473.5 419.7L1470.3 420.0L1467.3 419.4L1450.2 413.2L1432.6 407.6M1463.9 413.3L1473.3 416.8M1451.7 398.7L1452.2 396.6L1453.8 394.7L1456.2 393.3L1459.3 392.4L1462.6 392.1L1465.9 392.5L1470.4 390.5L1465.9 392.5L1480.0 400.0L1485.2 411.5L1485.9 413.1L1486.3 414.0L1486.5 414.3L1486.3 414.0L1485.9 413.1L1485.2 411.5L1468.9 404.9L1451.7 398.7M197.0 716.6L196.7 714.6L197.6 713.3L199.7 713.4L203.9 714.5L207.9 715.4L211.9 716.1L215.8 716.4L219.8 716.4M207.0 752.2L210.8 748.7L214.6 745.6L218.4 743.1L221.9 741.0L225.2 739.3L225.8 737.6M197.0 716.6L207.0 752.2M209.2 740.7L213.1 738.6L217.3 736.8L221.9 735.1M210.0 743.4L213.7 741.0L217.9 738.8L222.4 736.9M210.7 746.0L214.4 743.2L218.4 740.6L222.9 738.6M218.9 714.2L223.7 726.7L228.5 739.3M220.7 712.9L225.7 726.2L230.7 739.5M222.6 712.3L227.6 725.7L232.6 739.0M224.5 711.8L229.5 725.1L234.5 738.5M226.5 711.2L231.4 724.6L236.4 737.9M228.4 710.7L233.4 724.0L238.3 737.4M230.3 710.2L235.3 723.5L240.2 736.9M232.3 709.6L237.2 723.0L242.2 736.3M234.4 709.8L239.1 722.4L243.9 735.0M219.3 714.8L219.9 713.1L235.4 708.8L236.7 709.9L243.5 734.4L242.9 736.1L227.6 740.4L226.2 739.2L219.3 714.8M236.8 710.0L236.3 708.3L236.0 707.3L235.9 707.0L236.0 707.4L236.6 708.3L239.9 709.2L244.7 707.8L239.9 709.2L256.0 717.8L272.1 726.5L271.4 728.5L269.4 730.1L266.5 731.2L263.2 731.8L259.9 731.6L257.2 730.6L241.1 721.9L236.8 710.0M254.6 724.1L263.4 728.8M244.7 707.8L245.5 705.7L247.4 704.2L250.0 703.2L253.1 702.7L256.4 702.9L259.7 703.7L264.5 702.4L259.7 703.7L275.8 712.4L291.9 721.0L291.2 723.0L289.2 724.6L286.3 725.8L283.0 726.3L279.7 726.2L276.9 725.1L260.8 716.5L244.7 707.8M274.4 718.7L283.2 723.4M264.5 702.4L265.3 700.3L267.1 698.8L269.7 697.7L272.8 697.3L276.2 697.5L279.4 698.3L284.2 697.0L279.4 698.3L295.5 706.9L311.6 715.4L310.9 717.4L308.9 719.1L306.1 720.2L302.8 720.8L299.6 720.6L296.8 719.6L280.6 711.1L264.5 702.4M294.1 713.1L303.0 717.8M284.2 697.0L285.0 694.9L286.8 693.3L289.4 692.3L292.5 691.8L295.8 692.0L299.1 692.8L304.0 691.4L299.1 692.8L315.3 701.3L331.3 710.1L330.5 712.1L328.5 713.7L325.7 714.8L322.4 715.3L319.2 715.1L316.4 714.1L300.3 705.5L284.2 697.0M313.9 707.6L322.6 712.4M304.0 691.4L304.7 689.3L306.6 687.7L309.2 686.7L312.4 686.3L315.8 686.4L319.1 687.3L323.9 686.0L319.1 687.3L335.1 696.1L351.0 705.0L350.2 707.0L348.2 708.6L345.3 709.7L342.1 710.2L338.8 709.9L336.1 708.9L320.1 700.0L304.0 691.4M333.6 702.3L342.3 707.2M323.9 686.0L324.7 683.9L326.6 682.4L329.2 681.4L332.4 681.0L335.7 681.2L339.0 682.1L343.9 680.8L339.0 682.1L355.0 691.1L370.6 700.3L369.8 702.3L367.8 703.8L364.9 704.8L361.7 705.2L358.5 704.9L355.8 703.8L339.9 694.8L323.9 686.0M353.4 697.3L362.0 702.3M343.9 680.8L344.7 678.8L346.6 677.2L349.3 676.3L352.5 675.9L355.9 676.2L359.2 677.1L364.1 676.0L359.2 677.1L374.9 686.5L390.4 696.0L389.6 698.0L387.5 699.5L384.6 700.4L381.4 700.8L378.2 700.4L375.5 699.2L359.8 689.9L343.9 680.8M373.2 692.6L381.8 697.9M364.1 676.0L365.0 673.9L366.9 672.4L369.6 671.5L372.8 671.2L376.2 671.6L379.4 672.6L384.4 671.5L379.4 672.6L395.0 682.2L410.1 692.2L409.3 694.2L407.2 695.6L404.3 696.5L401.1 696.7L397.9 696.3L395.3 695.0L379.8 685.4L364.1 676.0M393.1 688.4L401.5 693.8M384.4 671.5L385.3 669.5L387.3 668.0L390.0 667.2L393.2 667.0L396.6 667.4L399.9 668.5L404.9 667.6L399.9 668.5L415.2 678.7L429.6 689.7L428.5 691.5L426.4 692.8L423.5 693.4L420.4 693.5L417.4 692.8L414.9 691.5L399.9 681.3L384.4 671.5M413.1 684.7L420.9 690.6M404.9 667.6L405.9 665.6L408.0 664.2L410.9 663.4L414.2 663.3L417.7 663.9L421.0 665.2L426.1 664.7L421.0 665.2L435.6 676.4L450.6 687.4L449.5 689.3L447.1 690.6L443.9 691.4L440.4 691.4L437.1 690.7L434.5 689.2L420.1 678.0L404.9 667.6M433.1 682.4L441.1 688.5M426.1 664.7L427.2 662.8L429.3 661.5L432.1 661.0L435.2 661.1L438.4 661.8L441.3 663.2L445.9 662.6L441.3 663.2L455.9 673.6L471.4 683.1L470.7 685.0L468.7 686.5L465.8 687.5L462.3 688.0L458.9 687.6L456.0 686.4L440.5 675.9L426.1 664.7M453.9 679.8L462.7 685.0M445.9 662.6L446.8 660.6L448.6 659.3L451.0 658.6L453.8 658.4L457.0 658.8L460.1 659.8L465.1 658.6L460.1 659.8L475.9 669.3L490.9 679.6L490.0 681.5L487.9 682.9L485.0 683.7L481.7 683.9L478.6 683.4L476.0 682.1L460.7 672.6L445.9 662.6M474.0 675.5L482.2 681.0M465.1 658.6L466.1 656.6L468.2 655.1L471.1 654.2L474.4 654.1L477.8 654.5L481.0 655.7L486.0 654.9L481.0 655.7L496.1 666.1L510.7 676.9L509.7 678.7L507.6 680.0L504.7 680.8L501.5 680.8L498.3 680.2L495.7 678.9L480.8 668.5L465.1 658.6M494.0 672.1L502.0 678.0M486.0 654.9L487.0 652.9L489.1 651.5L491.9 650.8L495.1 650.7L498.5 651.3L501.7 652.6L506.8 652.0L501.7 652.6L516.5 663.6L530.5 675.2L529.4 677.0L527.2 678.2L524.2 678.7L521.0 678.6L518.0 677.9L515.5 676.4L501.1 665.4L486.0 654.9M514.0 669.5L521.7 675.8M506.8 652.0L508.0 650.0L510.1 648.7L513.0 648.1L516.3 648.2L519.6 649.0L522.8 650.4L527.9 650.1L522.8 650.4L536.9 662.2L550.6 674.2L549.5 676.0L547.2 677.1L544.2 677.6L540.9 677.4L537.8 676.5L535.4 674.9L521.5 663.2L506.8 652.0M534.2 668.0L541.8 674.6M527.9 650.1L529.1 648.2L531.3 647.0L534.1 646.6L537.3 646.8L540.6 647.7L543.6 649.3L548.7 649.0L543.6 649.3L557.4 661.3L570.8 673.7L569.6 675.4L567.3 676.5L564.3 676.9L561.0 676.6L558.0 675.7L555.5 674.0L541.9 661.9L527.9 650.1M554.6 667.1L561.9 673.8M548.7 649.0L549.9 647.2L552.1 646.1L555.0 645.7L558.2 646.0L561.4 647.0L564.4 648.6L569.5 648.5L564.4 648.6L577.9 661.0L591.2 673.6L589.9 675.3L587.5 676.4L584.5 676.7L581.2 676.4L578.1 675.4L575.7 673.6L562.4 661.2L548.7 649.0M574.9 666.7L582.2 673.6M569.5 648.5L570.8 646.7L573.0 645.6L575.8 645.3L579.0 645.7L582.2 646.7L585.2 648.4L590.2 648.4L585.2 648.4L598.4 661.0L611.2 673.8L610.0 675.5L607.7 676.5L604.8 676.8L601.6 676.4L598.5 675.3L596.1 673.6L582.9 661.0L569.5 648.5M595.4 666.7L602.6 673.6M590.2 648.4L591.5 646.6L593.7 645.6L596.5 645.3L599.6 645.7L602.9 646.8L605.9 648.4L611.0 648.6L605.9 648.4L618.9 661.5L630.8 675.1L629.5 676.7L627.2 677.6L624.2 677.7L621.0 677.1L618.1 675.8L616.0 674.0L603.4 661.0L590.2 648.4M615.6 667.0L622.2 674.4M611.0 648.6L612.5 646.8L614.8 645.9L617.8 645.7L621.1 646.3L624.3 647.6L627.2 649.5L632.4 650.0L627.2 649.5L639.3 663.5L649.3 678.5L647.7 679.9L645.3 680.4L642.5 680.1L639.7 679.2L637.2 677.7L635.3 675.7L623.9 661.9L611.0 648.6M635.5 668.7L641.1 676.6M632.4 650.0L634.0 648.3L636.5 647.6L639.6 647.7L643.0 648.6L646.3 650.3L649.1 652.6L654.2 653.7L649.1 652.6L659.3 668.0L668.2 683.7L666.6 685.0L664.1 685.4L661.2 684.9L658.3 683.7L655.7 681.9L653.9 679.6L644.2 664.4L632.4 650.0M654.9 672.7L660.0 681.3M654.2 653.7L656.0 652.3L658.5 651.9L661.4 652.3L664.4 653.5L667.4 655.4L669.8 657.9L674.8 659.4L669.8 657.9L678.9 674.0L686.6 690.2L684.8 691.4L682.4 691.6L679.6 690.9L676.8 689.5L674.4 687.6L672.8 685.2L664.1 669.4L654.2 653.7M674.3 678.4L678.7 687.2M674.8 659.4L676.6 658.1L679.1 657.8L682.0 658.4L685.0 659.9L687.8 662.0L690.2 664.6L695.1 666.5L690.2 664.6L698.0 681.5L703.6 698.5L701.8 699.4L699.4 699.3L696.7 698.3L694.2 696.7L692.1 694.5L690.8 692.0L683.6 675.6L674.8 659.4M692.9 685.4L696.2 694.6M695.1 666.5L697.1 665.4L699.7 665.3L702.6 666.3L705.6 668.1L708.2 670.5L710.3 673.5L715.0 676.0L710.3 673.5L716.0 691.1L720.2 708.7L718.2 709.5L715.8 709.1L713.1 707.8L710.7 705.9L708.7 703.5L707.7 700.8L702.5 683.6L695.1 666.5M710.6 694.5L712.9 704.0M715.0 676.0L717.1 675.1L719.7 675.4L722.4 676.6L725.0 678.7L727.3 681.4L729.0 684.4L733.4 687.2L729.0 684.4L733.2 702.4L736.9 720.2L734.9 721.0L732.4 720.5L729.6 719.0L727.1 716.8L725.2 714.2L724.2 711.5L720.3 693.8L715.0 676.0M727.5 705.3L729.5 715.1M733.4 687.2L735.5 686.5L737.9 686.9L740.5 688.3L742.9 690.4L744.9 693.1L746.3 696.1L750.4 699.0L746.3 696.1L750.0 714.1L752.6 731.8L750.6 732.4L748.3 731.9L745.8 730.5L743.6 728.4L741.8 725.8L740.9 723.0L737.3 705.2L733.4 687.2M744.3 717.0L746.0 726.7M750.4 699.0L752.6 698.2L755.0 698.7L757.5 700.1L759.9 702.3L762.0 705.2L763.5 708.3L767.7 711.7L763.5 708.3L766.0 726.8L765.2 744.4L763.2 744.6L761.2 743.8L759.2 742.2L757.6 740.0L756.4 737.4L756.0 734.7L754.1 717.0L750.4 699.0M760.0 729.1L760.1 738.6M767.7 711.7L770.0 711.2L772.5 711.9L775.1 713.8L777.4 716.5L779.3 719.8L780.4 723.4L784.2 727.8L780.4 723.4L779.4 742.3L775.3 759.7L773.2 759.6L771.2 758.2L769.5 756.0L768.3 753.4L767.6 750.6L767.8 747.8L769.6 730.3L767.7 711.7M773.0 743.2L771.1 752.6M784.2 727.8L786.6 727.8L788.9 729.2L791.1 731.6L792.8 734.8L793.8 738.3L794.1 741.9L796.8 746.6L794.1 741.9L789.7 760.0L784.2 777.3L782.1 777.0L780.1 775.3L778.5 772.8L777.4 769.8L777.0 766.7L777.5 763.9L782.1 746.5L784.2 727.8M783.3 760.0L780.3 769.4M796.8 746.6L799.1 746.9L801.1 748.5L802.7 751.0L803.9 754.2L804.4 757.6L804.3 761.0L806.5 765.6L804.3 761.0L798.6 778.5L791.7 795.2L789.7 794.7L787.9 792.9L786.5 790.4L785.7 787.4L785.5 784.4L786.2 781.7L791.9 764.5L796.8 746.6M792.2 778.1L788.6 787.2M806.5 765.6L808.7 766.0L810.6 767.6L812.1 770.2L813.1 773.5L813.5 777.1L813.1 780.6L815.0 785.4L813.1 780.6L806.0 797.6L798.5 814.2L796.4 813.6L794.7 811.7L793.3 808.9L792.6 805.8L792.6 802.5L793.4 799.7L800.5 783.1L806.5 765.6M799.7 796.7L795.5 805.8M815.0 785.4L817.1 786.1L818.9 787.8L820.2 790.4L820.8 793.6L820.9 797.0L820.3 800.3L822.0 805.1L820.3 800.3L812.8 817.0L806.2 834.6L804.0 834.0L801.9 831.8L800.3 828.8L799.4 825.3L799.3 821.9L800.1 819.0L807.7 802.3L815.0 785.4M806.4 816.0L802.4 825.3M822.0 805.1L824.1 805.7L825.8 807.4L826.9 809.9L827.6 812.9L827.6 816.1L827.0 819.2L828.7 823.2L827.0 819.2L821.0 835.7L814.0 851.6L812.0 851.1L810.4 849.5L809.3 847.5L808.7 845.3L808.4 842.7L808.8 839.7L814.5 821.7L822.0 805.1M814.5 835.7L811.5 844.8M828.7 823.2L830.7 823.4L832.4 824.5L833.8 826.5L835.1 829.6L835.9 833.6L835.8 837.7L837.7 843.2L835.8 837.7L828.0 854.9L819.2 871.0L817.2 870.3L815.6 868.1L814.4 865.2L813.9 861.9L814.2 858.8L815.3 856.1L823.2 840.2L828.7 823.2M821.7 853.5L816.9 862.2M837.7 843.2L839.9 844.0L841.6 846.0L842.6 848.9L843.1 852.1L842.9 855.5L842.0 858.8L843.3 863.5L842.0 858.8L832.0 870.0L819.9 873.4L818.2 873.9L817.2 874.1L816.9 874.2L817.2 874.1L818.2 873.9L819.9 873.4L829.3 859.7L837.7 843.2M184.3 736.2L182.4 736.9L181.6 738.2L182.6 740.1L185.5 743.5L188.2 746.7L190.6 749.8L192.7 753.1L194.4 756.6M220.6 729.3L219.1 734.1L218.1 738.8L217.6 743.3L217.4 747.5L217.3 751.3L216.1 752.6M184.3 736.2L220.6 729.3M211.3 736.3L211.2 740.7L211.5 745.2L212.1 750.2M214.1 735.7L213.6 740.2L213.5 744.8L213.9 749.8M216.6 735.2L215.8 739.7L215.4 744.5L215.7 749.5M194.5 773.8L207.8 771.4L221.0 768.8M193.6 772.0L207.6 769.4L221.5 766.5M193.4 770.2L207.3 767.4L221.2 764.4M193.1 768.5L207.1 765.4L220.9 762.2M192.9 766.7L206.8 763.5L220.6 760.1M192.6 764.8L206.5 761.5L220.3 758.0M192.3 763.0L206.1 759.5L219.9 755.9M192.0 761.1L205.8 757.5L219.6 753.8M192.5 759.1L205.4 755.6L218.4 751.9M195.2 773.6L193.6 772.8L191.5 758.1L192.8 756.9L217.7 752.3L219.4 753.0L221.9 770.0L220.5 771.2L195.2 773.6M213.8 873.0L212.0 873.4L211.0 873.6L210.7 873.7L211.1 873.6L212.1 873.4L213.2 870.8L212.0 866.0L213.2 870.8L222.3 855.0L231.5 839.3L233.5 840.1L235.0 842.2L236.0 845.0L236.4 848.2L236.1 851.4L235.0 854.1L226.0 870.0L213.8 873.0M228.5 856.5L233.5 847.9M212.0 866.0L210.0 865.2L208.4 863.3L207.5 860.6L207.1 857.5L207.4 854.1L208.3 850.8L207.1 845.8L208.3 850.8L217.7 835.0L227.3 819.5L229.2 820.3L230.7 822.4L231.7 825.3L232.0 828.6L231.7 831.8L230.5 834.5L221.1 850.1L212.0 866.0M223.9 836.7L229.1 828.2M207.1 845.8L205.1 844.9L203.6 842.9L202.7 840.2L202.5 837.0L202.8 833.7L203.8 830.5L202.8 825.5L203.8 830.5L213.5 814.9L223.5 799.8L225.4 800.6L226.9 802.7L227.7 805.6L228.0 808.8L227.6 812.0L226.3 814.7L216.6 830.1L207.1 845.8M219.7 816.8L225.1 808.4M202.8 825.5L200.8 824.6L199.3 822.6L198.5 819.9L198.3 816.7L198.7 813.3L199.8 810.1L198.9 805.0L199.8 810.1L210.0 794.7L221.1 780.6L223.0 781.6L224.2 783.8L224.8 786.6L224.8 789.6L224.1 792.5L222.8 795.0L212.6 810.0L202.8 825.5M216.0 796.8L221.9 789.1M198.9 805.0L196.8 804.0L195.5 801.9L194.7 799.0L194.6 795.6L195.2 792.1L196.6 788.7L196.1 783.5L196.6 788.7L208.0 774.3L220.4 771.2L222.1 771.1L223.2 771.0L223.5 770.9L223.2 771.0L222.3 772.9L220.8 775.6L209.3 789.8L198.9 805.0M1069.9 866.6L1068.1 866.1L1067.2 865.8L1066.9 865.7L1067.3 865.8L1068.3 866.1L1070.5 864.4L1071.8 859.6L1070.5 864.4L1086.2 855.1L1101.9 846.0L1103.2 847.7L1103.6 850.2L1103.1 853.2L1101.8 856.2L1100.0 858.8L1097.7 860.6L1082.0 870.0L1069.9 866.6M1090.8 859.5L1099.4 854.5M1071.8 859.6L1070.4 857.9L1070.0 855.5L1070.5 852.7L1071.8 849.8L1073.7 847.0L1076.1 844.5L1077.5 839.6L1076.1 844.5L1092.0 835.4L1107.9 826.5L1109.2 828.2L1109.5 830.7L1108.9 833.7L1107.7 836.7L1105.8 839.4L1103.4 841.2L1087.5 850.3L1071.8 859.6M1096.5 840.0L1105.3 835.0M1077.5 839.6L1076.2 837.9L1075.9 835.5L1076.4 832.7L1077.7 829.9L1079.6 827.1L1082.0 824.8L1083.5 819.9L1082.0 824.8L1098.1 815.8L1114.2 807.9L1115.4 809.6L1115.7 812.0L1115.0 814.8L1113.7 817.7L1111.7 820.2L1109.4 821.9L1093.4 830.6L1077.5 839.6M1102.5 820.5L1111.3 815.9M1083.5 819.9L1082.2 818.1L1081.9 815.7L1082.5 812.8L1083.9 809.9L1086.0 807.1L1088.5 804.7L1090.3 799.8L1088.5 804.7L1105.2 796.6L1121.9 789.8L1123.0 791.6L1123.0 794.1L1122.2 796.9L1120.6 799.7L1118.5 802.0L1116.0 803.5L1099.7 811.1L1083.5 819.9M1109.3 801.6L1118.4 797.7M1090.3 799.8L1089.2 797.9L1089.0 795.3L1089.9 792.5L1091.5 789.6L1093.8 787.0L1096.5 784.9L1098.7 780.1L1096.5 784.9L1113.7 778.0L1130.8 772.5L1131.8 774.4L1131.6 776.8L1130.5 779.5L1128.8 782.1L1126.6 784.2L1124.0 785.5L1107.1 792.0L1090.3 799.8M1117.4 783.1L1126.8 780.0M1098.7 780.1L1097.6 778.1L1097.6 775.6L1098.7 772.8L1100.5 770.0L1103.0 767.5L1105.9 765.5L1108.4 760.9L1105.9 765.5L1123.6 760.0L1141.2 756.0L1142.0 757.9L1141.6 760.4L1140.3 763.0L1138.3 765.5L1135.9 767.4L1133.2 768.5L1115.9 773.5L1098.7 780.1M1126.9 765.5L1136.5 763.2M1108.4 760.9L1107.6 758.8L1107.8 756.3L1109.1 753.6L1111.2 750.9L1113.9 748.7L1116.9 747.0L1119.8 742.7L1116.9 747.0L1134.9 743.0L1152.7 740.3L1153.4 742.3L1152.8 744.6L1151.4 747.1L1149.2 749.4L1146.7 751.2L1143.9 752.1L1126.3 755.8L1108.4 760.9M1137.8 748.7L1147.6 747.0M1119.8 742.7L1119.1 740.6L1119.5 738.1L1121.0 735.5L1123.2 733.0L1126.0 731.0L1129.2 729.5L1132.4 725.3L1129.2 729.5L1147.6 726.8L1165.0 727.2L1165.3 729.1L1164.7 731.1L1163.2 733.0L1161.0 734.8L1158.4 736.2L1155.7 736.7L1137.9 738.9L1119.8 742.7M1149.9 732.8L1159.6 732.3M1132.4 725.3L1131.9 723.1L1132.6 720.6L1134.3 718.1L1136.9 715.8L1140.1 713.8L1143.6 712.6L1148.0 708.5L1143.6 712.6L1162.7 713.1L1181.3 715.2L1181.2 717.4L1179.7 719.8L1177.2 722.1L1174.2 723.8L1171.2 724.6L1168.4 724.5L1150.9 723.1L1132.4 725.3M1163.6 719.4L1173.4 720.9M1148.0 708.5L1148.0 706.2L1149.4 703.7L1151.8 701.6L1154.8 699.9L1158.0 698.9L1161.3 698.7L1164.9 696.0L1161.3 698.7L1178.9 700.6L1197.2 700.7L1197.6 702.8L1196.5 705.2L1194.5 707.6L1191.7 709.7L1188.6 711.1L1185.5 711.6L1166.8 710.2L1148.0 708.5M1180.4 706.9L1190.6 707.0M1164.9 696.0L1164.6 693.9L1165.4 691.9L1167.1 690.1L1169.5 688.5L1172.4 687.2L1175.6 686.5L1179.2 683.1L1175.6 686.5L1193.9 686.6L1211.8 687.7L1212.0 689.8L1211.0 691.9L1209.1 694.0L1206.6 695.8L1203.7 697.0L1200.8 697.3L1182.6 697.2L1164.9 696.0M1195.5 692.8L1205.4 693.1M1179.2 683.1L1178.9 680.9L1179.8 678.6L1181.7 676.4L1184.4 674.5L1187.6 673.0L1191.1 672.2L1195.2 668.7L1191.1 672.2L1209.6 673.4L1227.6 675.8L1227.6 677.9L1226.4 680.1L1224.2 682.1L1221.5 683.7L1218.4 684.7L1215.5 684.8L1197.6 683.2L1179.2 683.1M1210.7 679.8L1220.5 680.9M1195.2 668.7L1195.1 666.5L1196.3 664.2L1198.4 662.2L1201.3 660.5L1204.5 659.4L1207.9 658.9L1212.1 655.9L1207.9 658.9L1226.2 661.4L1243.9 664.9L1243.8 667.0L1242.5 669.0L1240.2 670.9L1237.4 672.3L1234.4 673.1L1231.5 673.0L1213.6 670.4L1195.2 668.7M1226.9 667.8L1236.7 669.5M1212.1 655.9L1212.1 653.6L1213.4 651.5L1215.6 649.6L1218.6 648.0L1221.9 647.1L1225.4 646.8L1229.8 644.0L1225.4 646.8L1243.5 650.4L1260.8 655.4L1260.6 657.5L1259.0 659.4L1256.7 661.1L1253.8 662.2L1250.8 662.8L1247.9 662.4L1230.3 658.6L1212.1 655.9M1243.8 656.8L1253.3 659.4M1229.8 644.0L1230.0 641.7L1231.4 639.6L1233.8 637.9L1236.9 636.5L1240.4 635.8L1243.9 635.8L1248.6 633.4L1243.9 635.8L1261.7 641.0L1278.7 647.2L1278.3 649.2L1276.6 651.1L1274.1 652.6L1271.1 653.6L1267.9 653.9L1265.1 653.3L1247.9 648.0L1229.8 644.0M1261.4 647.4L1270.8 650.7M1248.6 633.4L1249.0 631.1L1250.6 629.2L1253.1 627.6L1256.3 626.6L1259.7 626.2L1263.2 626.4L1267.9 624.4L1263.2 626.4L1280.5 632.8L1297.1 639.9L1296.6 641.9L1294.9 643.7L1292.2 645.1L1289.1 645.9L1286.0 646.0L1283.2 645.3L1266.2 638.9L1248.6 633.4M1279.8 639.2L1289.0 643.0M1267.9 624.4L1268.5 622.2L1270.2 620.4L1272.7 619.0L1275.9 618.1L1279.3 617.9L1282.8 618.4L1287.6 616.6L1282.8 618.4L1299.7 625.7L1315.7 634.2L1315.0 636.1L1313.1 637.7L1310.4 638.9L1307.3 639.4L1304.3 639.3L1301.6 638.3L1285.1 631.0L1267.9 624.4M1298.7 632.0L1307.4 636.5M1287.6 616.6L1288.3 614.4L1290.1 612.6L1292.9 611.4L1296.2 610.7L1299.7 610.7L1303.2 611.5L1308.2 610.1L1303.2 611.5L1319.5 620.2L1335.4 629.1L1334.6 631.1L1332.6 632.7L1329.7 633.8L1326.4 634.3L1323.1 634.0L1320.4 632.9L1304.5 624.2L1287.6 616.6M1317.9 626.4L1326.7 631.3M1308.2 610.1L1309.0 608.0L1311.0 606.4L1313.7 605.4L1316.8 605.0L1320.2 605.3L1323.4 606.2L1328.3 604.9L1323.4 606.2L1339.3 615.2L1355.1 624.4L1354.3 626.3L1352.2 627.9L1349.4 628.9L1346.1 629.3L1342.9 629.0L1340.2 627.9L1324.3 618.9L1308.2 610.1M1337.7 621.4L1346.4 626.4M1328.3 604.9L1329.1 602.9L1331.0 601.3L1333.7 600.4L1336.8 600.0L1340.2 600.3L1343.5 601.2L1348.4 600.0L1343.5 601.2L1359.3 610.5L1374.8 620.0L1374.0 621.9L1371.9 623.4L1369.0 624.4L1365.8 624.8L1362.6 624.4L1359.9 623.2L1344.2 614.0L1328.3 604.9M1357.6 616.7L1366.1 621.8M1348.4 600.0L1349.3 598.0L1351.2 596.5L1353.9 595.6L1357.1 595.3L1360.5 595.6L1363.7 596.6L1368.7 595.5L1363.7 596.6L1379.3 606.2L1394.5 616.2L1393.6 618.1L1391.5 619.6L1388.6 620.4L1385.4 620.7L1382.3 620.2L1379.6 619.0L1364.2 609.4L1348.4 600.0M1377.5 612.4L1385.8 617.8M1368.7 595.5L1369.6 593.5L1371.6 592.0L1374.3 591.2L1377.6 591.0L1380.9 591.4L1384.2 592.5L1389.2 591.6L1384.2 592.5L1399.5 602.6L1414.4 613.0L1413.5 614.9L1411.3 616.3L1408.4 617.1L1405.1 617.3L1402.0 616.7L1399.3 615.4L1384.2 605.3L1368.7 595.5M1397.5 608.7L1405.7 614.4M1389.2 591.6L1390.2 589.6L1392.3 588.2L1395.0 587.4L1398.2 587.3L1401.6 587.8L1404.8 589.0L1409.8 588.3L1404.8 589.0L1419.8 599.5L1434.6 610.2L1433.6 612.1L1431.4 613.4L1428.4 614.2L1425.1 614.3L1422.0 613.7L1419.3 612.3L1404.5 601.8L1389.2 591.6M1417.6 605.6L1425.7 611.4M1409.8 588.3L1410.8 586.3L1412.8 584.9L1415.6 584.2L1418.8 584.2L1422.1 584.8L1425.2 586.0L1430.2 585.3L1425.2 586.0L1440.1 596.7L1454.7 607.6L1453.7 609.4L1451.5 610.8L1448.5 611.5L1445.3 611.5L1442.1 610.9L1439.5 609.5L1424.7 598.8L1409.8 588.3M1437.8 602.7L1445.9 608.7M1430.2 585.3L1431.3 583.4L1433.3 582.1L1436.0 581.4L1439.2 581.4L1442.6 582.0L1445.7 583.3L1450.8 582.7L1445.7 583.3L1460.4 594.2L1475.0 605.3L1474.0 607.1L1471.7 608.4L1468.7 609.1L1465.4 609.1L1462.2 608.5L1459.6 607.0L1445.0 596.1L1430.2 585.3M1458.1 600.2L1466.1 606.3M1450.8 582.7L1451.9 580.7L1453.9 579.5L1456.7 578.8L1459.9 578.9L1463.2 579.6L1466.3 580.9L1471.2 580.3L1466.3 580.9L1480.0 592.0L1481.5 604.5L1481.7 606.2L1481.8 607.3L1481.8 607.6L1481.8 607.3L1481.7 606.2L1480.0 604.7L1465.4 593.7L1450.8 582.7M1291.5 850.7L1290.3 849.3L1289.6 848.6L1289.4 848.3L1289.7 848.6L1290.4 849.4L1293.2 849.2L1296.8 845.8L1293.2 849.2L1311.4 849.5L1329.3 850.7L1329.5 852.7L1328.5 854.9L1326.6 857.0L1324.1 858.8L1321.2 860.0L1318.3 860.3L1300.0 860.0L1291.5 850.7M1313.0 855.7L1322.9 856.1M1296.8 845.8L1296.5 843.6L1297.5 841.4L1299.3 839.3L1302.0 837.4L1305.2 835.9L1308.6 835.1L1312.7 831.7L1308.6 835.1L1327.2 836.4L1345.4 838.7L1345.4 840.9L1344.0 843.2L1341.7 845.3L1338.8 846.9L1335.8 847.8L1333.0 847.8L1315.1 846.2L1296.8 845.8M1328.2 842.8L1338.0 844.1M1312.7 831.7L1312.7 829.4L1313.9 827.1L1316.1 825.0L1319.0 823.4L1322.3 822.3L1325.7 821.9L1329.6 819.1L1325.7 821.9L1343.7 824.3L1361.2 827.4L1361.2 829.4L1360.1 831.4L1358.1 833.2L1355.4 834.7L1352.4 835.7L1349.4 835.7L1331.2 833.5L1312.7 831.7M1344.7 830.6L1354.5 831.9M1329.6 819.1L1329.5 816.9L1330.6 814.8L1332.7 812.9L1335.5 811.3L1338.8 810.1L1342.3 809.7L1346.9 806.6L1342.3 809.7L1360.8 813.1L1378.3 818.7L1378.0 820.8L1376.2 822.8L1373.5 824.5L1370.4 825.6L1367.5 825.8L1364.8 825.3L1347.7 821.3L1329.6 819.1M1360.9 819.5L1370.1 822.6M1346.9 806.6L1347.2 804.2L1348.9 802.0L1351.7 800.1L1355.1 798.9L1358.6 798.3L1362.0 798.6L1366.3 796.5L1362.0 798.6L1375.1 806.2L1380.7 817.5L1381.4 819.1L1381.9 820.0L1382.0 820.3L1381.9 820.0L1381.4 819.1L1380.7 817.5L1365.4 810.9L1346.9 806.6M1378.1 796.5L1379.4 795.3L1380.2 794.6L1380.4 794.4L1380.2 794.8L1381.6 797.9L1382.2 801.0L1385.6 804.4L1382.2 801.0L1382.0 819.4L1375.7 835.5L1373.7 835.1L1372.1 833.6L1370.9 831.7L1370.3 829.7L1370.3 827.7L1370.8 825.5L1371.5 808.0L1378.1 796.5M1375.8 820.6L1373.0 828.9M1385.6 804.4L1387.9 804.2L1390.4 805.4L1393.1 808.1L1395.5 812.1L1396.8 816.5L1397.0 820.7L1399.1 826.2L1397.0 820.7L1389.8 838.3L1381.3 854.0L1379.3 853.3L1377.7 851.5L1376.7 848.9L1376.1 845.9L1376.2 842.7L1377.1 839.9L1384.5 823.7L1385.6 804.4M1383.5 837.1L1379.0 846.0M1399.1 826.2L1401.3 826.9L1403.1 828.9L1404.3 831.7L1404.8 834.8L1404.8 838.3L1404.1 841.7L1405.5 846.9L1404.1 841.7L1395.2 858.0L1385.8 873.0L1384.0 873.1L1382.4 871.0L1381.4 868.0L1380.9 864.7L1381.3 861.4L1382.4 858.7L1391.3 843.0L1399.1 826.2M1389.0 856.4L1383.9 865.0M1405.5 846.9L1407.5 847.8L1409.1 849.8L1410.0 852.5L1410.4 855.7L1410.0 859.0L1409.1 862.2L1410.2 867.0L1409.1 862.2L1398.0 870.0L1385.8 873.0L1384.1 873.4L1383.1 873.7L1382.7 873.8L1383.1 873.7L1384.1 873.4L1385.8 873.0L1396.3 862.9L1405.5 846.9" fill="none" stroke="#fff" stroke-width="1" stroke-linejoin="round"/><g fill="#ffff00" font-family="'DejaVu Sans Light','DejaVu Sans',sans-serif" font-weight="200" shape-rendering="auto">
<text x="0" y="0" font-size="30.5" transform="translate(906.5,363.3) rotate(4.9)" textLength="221" lengthAdjust="spacingAndGlyphs">80ms / dyn 85ms</text>
<text x="0" y="0" font-size="30" transform="translate(404.8,321) rotate(-81.3)" textLength="155" lengthAdjust="spacingAndGlyphs">Closed form</text>
<text x="27.5" y="711" font-size="27.5" textLength="132.5" lengthAdjust="spacingAndGlyphs">ngentially</text>
<rect x="37" y="733" width="144" height="1"/>
</g>
<rect x="812" y="100" width="10" height="10" fill="#0000aa" stroke="#8a9aa6"/><rect x="926" y="52" width="10" height="10" fill="#0000aa" stroke="#8a9aa6"/><rect x="926" y="112" width="10" height="10" fill="#0000aa" stroke="#8a9aa6"/><rect x="870" y="190" width="10" height="10" fill="#0000aa" stroke="#8a9aa6"/><rect x="1078" y="116" width="10" height="10" fill="#0000aa" stroke="#8a9aa6"/><rect x="1062" y="178" width="10" height="10" fill="#0000aa" stroke="#8a9aa6"/><rect x="1212" y="210" width="10" height="10" fill="#0000aa" stroke="#8a9aa6"/><rect x="1338" y="152" width="10" height="10" fill="#0000aa" stroke="#8a9aa6"/><rect x="1342" y="80" width="10" height="10" fill="#0000aa" stroke="#8a9aa6"/><rect x="1206" y="64" width="10" height="10" fill="#0000aa" stroke="#8a9aa6"/><rect x="522" y="564" width="10" height="10" fill="#0000aa" stroke="#8a9aa6"/><rect x="1238" y="322" width="10" height="10" fill="#0000aa" stroke="#8a9aa6"/><rect x="992" y="538" width="10" height="10" fill="#0000aa" stroke="#8a9aa6"/><rect x="1326" y="406" width="10" height="10" fill="#0000aa" stroke="#8a9aa6"/><rect x="972" y="606" width="10" height="10" fill="#0000aa" stroke="#8a9aa6"/><rect x="1304" y="474" width="10" height="10" fill="#0000aa" stroke="#8a9aa6"/><rect x="196" y="728" width="10" height="10" fill="#0000aa" stroke="#8a9aa6"/><rect x="768" y="730" width="10" height="10" fill="#0000aa" stroke="#8a9aa6"/><rect x="1288" y="624" width="10" height="10" fill="#0000aa" stroke="#8a9aa6"/><rect x="1368" y="804" width="10" height="10" fill="#0000aa" stroke="#8a9aa6"/><rect x="606" y="252" width="10" height="10" fill="#0040a8" stroke="#8a9aa6"/><rect x="124" y="296" width="10" height="10" fill="#008080" stroke="#8a9aa6"/><rect x="280" y="218" width="10" height="10" fill="#008080" stroke="#8a9aa6"/><rect x="514" y="180" width="10" height="10" fill="#008080" stroke="#8a9aa6"/><rect x="520" y="258" width="10" height="10" fill="#008080" stroke="#8a9aa6"/><rect x="364" y="452" width="10" height="10" fill="#008080" stroke="#8a9aa6"/><rect x="360" y="484" width="10" height="10" fill="#008080" stroke="#8a9aa6"/><rect x="426" y="598" width="10" height="10" fill="#008080" stroke="#8a9aa6"/><rect x="440" y="646" width="10" height="10" fill="#008080" stroke="#8a9aa6"/><rect x="628" y="124" width="10" height="10" fill="#008080" stroke="#8a9aa6"/><rect x="880" y="448" width="10" height="10" fill="#008080" stroke="#8a9aa6"/><rect x="840" y="544" width="10" height="10" fill="#008080" stroke="#8a9aa6"/><rect x="1158" y="472" width="10" height="10" fill="#008080" stroke="#8a9aa6"/><rect x="1152" y="574" width="10" height="10" fill="#008080" stroke="#8a9aa6"/><rect x="1388" y="276" width="10" height="10" fill="#008080" stroke="#8a9aa6"/><rect x="808" y="280" width="10" height="10" fill="#c80028" stroke="#8a9aa6"/><rect x="768" y="360" width="10" height="10" fill="#c80028" stroke="#8a9aa6"/><rect x="748" y="430" width="10" height="10" fill="#c80028" stroke="#8a9aa6"/><rect x="724" y="526" width="10" height="10" fill="#c80028" stroke="#8a9aa6"/><rect x="1148" y="718" width="10" height="10" fill="#c80028" stroke="#8a9aa6"/><circle cx="323.5" cy="243.5" r="5" fill="#0000aa" stroke="#8a9aa6"/><circle cx="405.5" cy="243.5" r="5" fill="#0000aa" stroke="#8a9aa6"/><circle cx="985.5" cy="256.5" r="5" fill="#0000aa" stroke="#8a9aa6"/></svg>

<!-- canvas scrollbars -->
<div class="a" style="left:1438px;top:52px;width:17px;height:790px;background:#f0f0f0"></div>
<div class="a" style="left:1440px;top:345px;width:14px;height:153px;border:1px solid #979797;border-radius:2px;background:linear-gradient(90deg,#f5f5f5,#e6e6e6 45%,#d4d4d4 55%,#cfcfcf)"></div>
<div class="a" style="left:1443px;top:418px;width:8px;height:1px;background:#606060;box-shadow:0 2px 0 #606060,0 4px 0 #606060"></div>
<svg class="a" style="left:1438px;top:52px" width="17" height="790"><path d="M7 11.500l3-3.500 3 3.500z" fill="#606060"/><path d="M6 780h7l-3.500 4z" fill="#404040"/></svg>
<div class="a" style="left:15px;top:842px;width:1440px;height:10px;background:#f0f0f0"></div>
<div class="a" style="left:37px;top:842px;width:1370px;height:1px;background:#fcfcfc"></div>
<div class="a" style="left:355px;top:843px;width:356px;height:12px;border:1px solid #979797;border-radius:2px;background:linear-gradient(#f5f5f5,#e3e3e3)"></div>
<div class="a" style="left:529px;top:847px;width:1px;height:5px;background:#606060;box-shadow:2px 0 0 #606060,4px 0 0 #606060,6px 0 0 #606060"></div>
<svg class="a" style="left:37px;top:842px" width="1420" height="10"><path d="M10 4l-5 5 5 5z" fill="#404040"/><path d="M1344 4l5 5-5 5z" fill="#404040"/></svg>
<div class="a" style="left:1411px;top:846px;font-size:11px">10 &lt; 100</div>
<div class="a" style="left:15px;top:842px;width:22px;height:12px;border-top:1px solid #a0a0a0;border-right:1px solid #fff;background:#f0f0f0"></div>

<!-- Block list -->
<div class="a hdr" style="left:1459px;top:8px;width:230px;height:18px">Block List</div>
<div class="a btn" style="left:1460px"></div>
<div class="a btn" style="left:1505px"></div>
<div class="a btn" style="left:1550px"></div>
<div class="a btn dis" style="left:1595px"></div>
<div class="a btn dis" style="left:1640px;width:50px"></div>
<svg class="a" style="left:1460px;top:29px" width="222" height="20" viewBox="0 0 222 20"><g transform="translate(13.8,4.4)"><path d="M0 5.500C2 -1.300 13 -1.300 15 5.500C13 12.600 2 12.600 0 5.500z" fill="#0a0a0a"/><ellipse cx="7.500" cy="6.400" rx="4.800" ry="3.700" fill="#fff"/><circle cx="7.600" cy="5.700" r="3" fill="#0a0a0a"/><circle cx="6.700" cy="4.700" r="0.800" fill="#ddd"/></g><g transform="translate(58.8,4.4)" opacity=".33"><path d="M0 5.500C2 -1.300 13 -1.300 15 5.500C13 12.600 2 12.600 0 5.500z" fill="#0a0a0a"/><ellipse cx="7.500" cy="6.400" rx="4.800" ry="3.700" fill="#fff"/><circle cx="7.600" cy="5.700" r="3" fill="#0a0a0a"/><circle cx="6.700" cy="4.700" r="0.800" fill="#ddd"/></g><path d="M105 10h12M111 4v12" stroke="#e01010" stroke-width="3"/><path d="M150 10h12" stroke="#a0a0a0" stroke-width="2.500"/></svg>
<div class="a" style="left:1653px;top:34px;font-size:12px;color:#8a8a8a">a|b</div>
<div class="a lst" style="left:1459px;top:50px;width:230px;height:143px"></div>
<svg class="a" style="left:1460px;top:51px" width="50" height="40" viewBox="0 0 50 40"><g transform="translate(3.6,3.3)"><path d="M0 5.500C2 -1.300 13 -1.300 15 5.500C13 12.600 2 12.600 0 5.500z" fill="#0a0a0a"/><ellipse cx="7.500" cy="6.400" rx="4.800" ry="3.700" fill="#fff"/><circle cx="7.600" cy="5.700" r="3" fill="#0a0a0a"/><circle cx="6.700" cy="4.700" r="0.800" fill="#ddd"/></g><g transform="translate(3.6,21.3)"><path d="M0 5.500C2 -1.300 13 -1.300 15 5.500C13 12.600 2 12.600 0 5.500z" fill="#0a0a0a"/><ellipse cx="7.500" cy="6.400" rx="4.800" ry="3.700" fill="#fff"/><circle cx="7.600" cy="5.700" r="3" fill="#0a0a0a"/><circle cx="6.700" cy="4.700" r="0.800" fill="#ddd"/></g><path d="M26.300 15.800l2-3.600 9.500-9.500 2 2-9.500 9.500z" fill="#e3a33a" stroke="#b88428" stroke-width=".5"/><path d="M37.800 2.700l1.300-1.300 2 2-1.300 1.300z" fill="#e02020"/><path d="M26.300 15.800l.8-1.500.8.800z" fill="#5a4020"/></svg>
<div class="a l12" style="left:1507px;top:55px">Model (*Model_Space)</div>
<div class="a l12" style="left:1507px;top:73px;letter-spacing:-0.25px">Layout1 (*Paper_Space)</div>

<!-- Property editor -->
<div class="a hdr" style="left:1459px;top:198px;width:230px;height:19px;padding-top:6px">Property Editor</div>
<div class="a" style="left:1459px;top:219px;width:230px;height:324px;border:1px solid #a0a0a0;border-right:none"></div>
<div class="a" style="left:1468px;top:235px;font-size:11px">Selection:</div>
<div class="a cmb" style="left:1522px;top:229px;width:170px;height:19px;padding-top:5px">All (18)</div>
<div class="a grp" style="top:262px;height:173px"></div>
<div class="a gt" style="left:1475px;top:257px">General Properties</div>
<div class="a lab" style="top:282px">Layer:</div>
<div class="a cmb" style="top:276px;padding-left:22px">Entities</div>
<div class="a" style="left:1563px;top:280px;width:16px;height:11px;background:#000"></div>
<div class="a lab" style="top:305px">Color:</div>
<div class="a cmb" style="top:299px">*VARIES*</div>
<div class="a lab" style="top:328px">Lineweight:</div>
<div class="a cmb" style="top:322px;padding-left:22px">By Layer</div>
<div class="a" style="left:1563px;top:332px;width:15px;height:1px;background:#000"></div>
<div class="a lab" style="top:351px">Linetype:</div>
<div class="a cmb" style="top:345px">By Layer</div>
<div class="a lab" style="top:373px">Linetype Scale:</div>
<div class="a edt" style="top:367px">1</div>
<div class="a lab" style="top:395px">Draw Order:</div>
<div class="a edt" style="top:389px">*VARIES*</div>
<div class="a lab" style="top:417px">Handle:</div>
<div class="a edt" style="top:411px;color:#8a8a8a;border-color:#c8cacf">*VARIES*</div>
<div class="a grp" style="top:451px;height:23px"></div>
<div class="a gt" style="left:1475px;top:446px">Specific Properties</div>
<div class="a grp" style="top:490px;height:42px"></div>
<div class="a gt" style="left:1475px;top:485px">Custom</div>

<!-- Layer list dock with side tabs -->
<div class="a" style="left:1459px;top:551px;width:22px;height:92px;border:1px solid #9a9a9a;border-right:none;background:linear-gradient(90deg,#f4f4f4,#dcdcdc)"></div>
<div class="a" style="left:1459px;top:642px;width:22px;height:93px;border:1px solid #9a9a9a;border-right:none;background:linear-gradient(90deg,#f4f4f4,#dcdcdc)"></div>
<div class="a" style="left:1459px;top:734px;width:23px;height:72px;border:1px solid #8a8fa0;border-right:none;background:#fff"></div>
<div class="a" style="left:1480px;top:551px;width:1px;height:183px;background:#9a9a9a"></div>
<div class="a" style="left:1480px;top:805px;width:1px;height:47px;background:#8a8fa0"></div>
<div class="a vt" style="left:1464px;top:633px">Command Line</div>
<div class="a vt" style="left:1464px;top:726px">Selection Filter</div>
<div class="a vt" style="left:1464px;top:796px">Layer List</div>
<div class="a hdr" style="left:1481px;top:551px;width:210px;height:19px">Layer List</div>
<div class="a btn" style="left:1481px;top:572px;width:65px"></div>
<div class="a btn" style="left:1549px;top:572px;width:65px"></div>
<div class="a btn" style="left:1617px;top:572px;width:70px"></div>
<svg class="a" style="left:1481px;top:572px" width="201" height="20" viewBox="0 0 201 20"><g transform="translate(25,4.4)"><path d="M0 5.500C2 -1.300 13 -1.300 15 5.500C13 12.600 2 12.600 0 5.500z" fill="#0a0a0a"/><ellipse cx="7.500" cy="6.400" rx="4.800" ry="3.700" fill="#fff"/><circle cx="7.600" cy="5.700" r="3" fill="#0a0a0a"/><circle cx="6.700" cy="4.700" r="0.800" fill="#ddd"/></g><g transform="translate(93,4.4)" opacity=".33"><path d="M0 5.500C2 -1.300 13 -1.300 15 5.500C13 12.600 2 12.600 0 5.500z" fill="#0a0a0a"/><ellipse cx="7.500" cy="6.400" rx="4.800" ry="3.700" fill="#fff"/><circle cx="7.600" cy="5.700" r="3" fill="#0a0a0a"/><circle cx="6.700" cy="4.700" r="0.800" fill="#ddd"/></g><path d="M162 10h12M168 4v12" stroke="#e01010" stroke-width="3"/></svg>
<div class="a lst" style="left:1481px;top:593px;width:210px;height:270px;border-color:#fff;border-top-color:#d0d0d0"></div>
<div class="a" style="left:1500px;top:649px;width:190px;height:17px;border:1px solid #84acdd;border-radius:2px;background:linear-gradient(#eaf3fc,#d5e6f8)"></div>
<svg class="a" style="left:1488px;top:651px" width="12" height="12"><path d="M9 2v7h-7z" fill="#404040"/></svg>
<div class="a sw" style="left:1504px;top:600px;background:#000"></div><div class="a l12" style="left:1526px;top:598px;letter-spacing:-0.3px">_Rope castings (set as active)</div>
<div class="a sw" style="left:1504px;top:618px;background:#000"></div><div class="a l12" style="left:1526px;top:616px">0</div>
<div class="a sw" style="left:1504px;top:636px;background:#fff"></div><div class="a l12" style="left:1526px;top:634px">Defpoints</div>
<div class="a sw" style="left:1504px;top:654px;background:#14385c"></div><div class="a l12" style="left:1526px;top:652px">Entities</div>
<div class="a sw" style="left:1524px;top:672px;background:#00ffff"></div><div class="a l12" style="left:1546px;top:670px">Exploded</div>
<div class="a sw" style="left:1524px;top:690px;background:#00e000"></div><div class="a l12" style="left:1546px;top:688px">Testpoints &amp; tangents</div>
<div class="a sw" style="left:1504px;top:708px;background:#ffff00"></div><div class="a l12" style="left:1526px;top:706px">Remarks</div>
</body></html>
